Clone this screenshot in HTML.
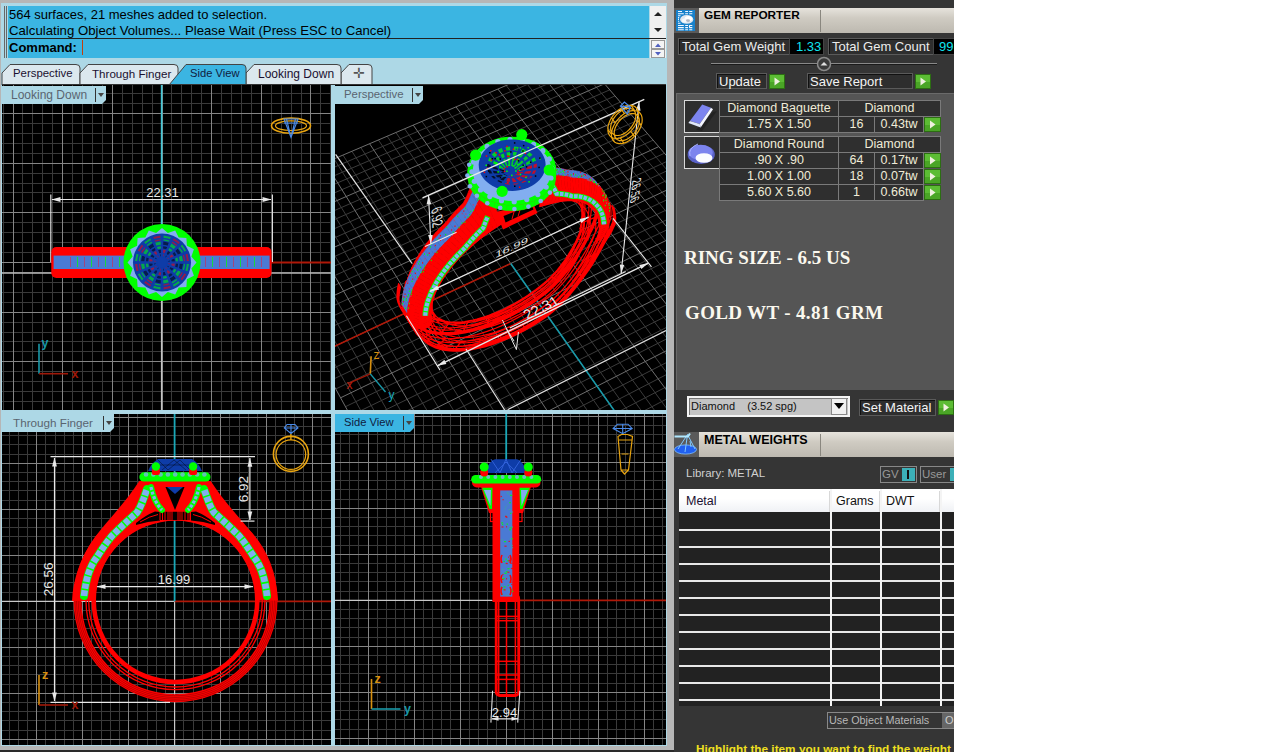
<!DOCTYPE html><html><head><meta charset="utf-8"><style>
*{margin:0;padding:0;box-sizing:border-box}
html,body{width:1274px;height:752px;overflow:hidden;background:#fff;font-family:"Liberation Sans", sans-serif}
.a{position:absolute}
.t{position:absolute;white-space:nowrap;line-height:1}
</style></head><body>
<div class="a" style="left:0;top:0;width:674px;height:752px;background:#b6b6b6"></div><div class="a" style="left:1px;top:3px;width:666px;height:743px;background:#add8e6"></div><div class="a" style="left:0;top:750px;width:674px;height:2px;background:#2a2a2a"></div><div class="a" style="left:4px;top:6px;width:1px;height:52px;background:#666"></div><div class="a" style="left:6px;top:6px;width:1px;height:52px;background:#666"></div><div class="a" style="left:8px;top:6px;width:641px;height:52px;background:#3bb5e2"></div><div class="a" style="left:8px;top:38px;width:658px;height:1px;background:#222"></div><div class="a" style="left:650px;top:6px;width:16px;height:32px;background:#f0f0f0"></div><div class="a" style="left:650px;top:39px;width:16px;height:19px;background:#f0f0f0"></div><div class="t" style="left:9px;top:8px;font-size:13px;color:#000">564 surfaces, 21 meshes added to selection.</div><div class="t" style="left:9px;top:24px;font-size:13.2px;color:#000">Calculating Object Volumes... Please Wait (Press ESC to Cancel)</div><div class="t" style="left:9px;top:41px;font-size:13px;font-weight:bold;color:#000">Command:</div><div class="a" style="left:82px;top:40px;width:1px;height:15px;background:#c04010"></div><svg class="a" style="left:650px;top:6px" width="16" height="52"><path d="M4 10L8 6L12 10Z" fill="#222"/><path d="M4 22L8 26L12 22Z" fill="#222"/><rect x="1.5" y="34.5" width="13" height="8" fill="#f4f4f4" stroke="#999"/><path d="M5 41L8 37.5L11 41Z" fill="#5060c0"/><rect x="1.5" y="43.5" width="13" height="8" fill="#f4f4f4" stroke="#999"/><path d="M5 46L8 49.5L11 46Z" fill="#5060c0"/></svg><svg class="a" style="left:1px;top:63px" width="81" height="23"><path d="M1 22V10L9 1.5H75Q79 1.5 79 5V22" fill="#dce8ee" stroke="#444" stroke-width="1"/></svg><svg class="a" style="left:79px;top:63px" width="101" height="23"><path d="M1 22V10L9 1.5H95Q99 1.5 99 5V22" fill="#dce8ee" stroke="#444" stroke-width="1"/></svg><svg class="a" style="left:340px;top:63px" width="34" height="23"><path d="M1 22V10L9 1.5H28Q32 1.5 32 5V22" fill="#dce8ee" stroke="#444" stroke-width="1"/></svg><svg class="a" style="left:245px;top:63px" width="98" height="23"><path d="M1 22V10L9 1.5H92Q96 1.5 96 5V22" fill="#dce8ee" stroke="#444" stroke-width="1"/></svg><svg class="a" style="left:168px;top:63px" width="80" height="23"><path d="M1 22L18 1.5H74Q78 1.5 78 5V22Z" fill="#3bb5e2" stroke="#444" stroke-width="1"/></svg><div class="t" style="left:13px;top:68px;font-size:11.4px;color:#1a1030">Perspective</div><div class="t" style="left:92px;top:68px;font-size:11.6px;color:#1a1030">Through Finger</div><div class="t" style="left:190px;top:68px;font-size:11.2px;color:#102040">Side View</div><div class="t" style="left:258px;top:68px;font-size:12px;color:#1a1030">Looking Down</div><div class="t" style="left:353px;top:66px;font-size:14px;color:#555">&#x271B;</div><div class="a" style="left:2px;top:84px;width:664px;height:1px;background:#333"></div><svg style="position:absolute;left:2px;top:85px" width="329" height="325" viewBox="0 0 329 325"><rect width="329" height="325" fill="#000"/><path d="M1.5 0V325M20.5 0V325M30.5 0V325M40.5 0V325M50.5 0V325M70.5 0V325M80.5 0V325M90.5 0V325M100.5 0V325M120.5 0V325M130.5 0V325M140.5 0V325M150.5 0V325M169.5 0V325M179.5 0V325M189.5 0V325M199.5 0V325M219.5 0V325M229.5 0V325M239.5 0V325M249.5 0V325M269.5 0V325M279.5 0V325M289.5 0V325M299.5 0V325M318.5 0V325M328.5 0V325M0 8.5H329M0 18.5H329M0 38.5H329M0 48.5H329M0 58.5H329M0 68.5H329M0 88.5H329M0 98.5H329M0 107.5H329M0 117.5H329M0 137.5H329M0 147.5H329M0 157.5H329M0 167.5H329M0 187.5H329M0 197.5H329M0 207.5H329M0 217.5H329M0 237.5H329M0 247.5H329M0 256.5H329M0 266.5H329M0 286.5H329M0 296.5H329M0 306.5H329M0 316.5H329" stroke="#3a3a3a" stroke-width="1" fill="none"/><path d="M11.5 0V325M60.5 0V325M110.5 0V325M160.5 0V325M209.5 0V325M259.5 0V325M308.5 0V325M0 28.5H329M0 78.5H329M0 127.5H329M0 177.5H329M0 227.5H329M0 276.5H329" stroke="#858585" stroke-width="1" fill="none"/><g transform="translate(-2 -85)"><path d="M2 262.5L52 262.5" stroke="#8a8a8a" stroke-width="1" fill="none"/><path d="M271 262.5L331 262.5" stroke="#b01808" stroke-width="1.8" fill="none"/><path d="M271 273L331 273" stroke="#b8b8b8" stroke-width="1.6" fill="none"/><path d="M2 273L52 273" stroke="#bdbdbd" stroke-width="1.6" fill="none"/><path d="M161.6 85L161.6 262.5" stroke="#40c8d8" stroke-width="1.6" fill="none"/><path d="M161.6 262.5L161.6 410" stroke="#c4c4c4" stroke-width="1.4" fill="none"/><path d="M50.8 194.6L50.8 262" stroke="#e0e0e0" stroke-width="1.2" fill="none"/><path d="M272.4 194.6L272.4 262" stroke="#e0e0e0" stroke-width="1.2" fill="none"/><path d="M52 199.5L271 199.5" stroke="#e8e8e8" stroke-width="1.2" fill="none"/><path d="M51.5 199.5L60.5 197.1L60.5 201.9Z" fill="#e8e8e8"/><path d="M271.5 199.5L262.5 201.9L262.5 197.1Z" fill="#e8e8e8"/><text x="162.5" y="196.5" font-family="Liberation Sans, sans-serif" font-size="13" fill="#e8e8e8" text-anchor="middle">22.31</text><rect x="51.3" y="247" width="220.2" height="31" rx="5" fill="#ff0000"/><rect x="53.6" y="255.6" width="216" height="13.4" fill="#4a7ad4"/><rect x="70" y="257" width="1" height="10" fill="#c03060" opacity="0.7"/><rect x="77" y="257" width="1" height="10" fill="#00ff00" opacity="0.7"/><rect x="84" y="257" width="1" height="10" fill="#c03060" opacity="0.7"/><rect x="91" y="257" width="1" height="10" fill="#00ff00" opacity="0.7"/><rect x="98" y="257" width="1" height="10" fill="#c03060" opacity="0.7"/><rect x="105" y="257" width="1" height="10" fill="#00ff00" opacity="0.7"/><rect x="112" y="257" width="1" height="10" fill="#c03060" opacity="0.7"/><rect x="119" y="257" width="1" height="10" fill="#00ff00" opacity="0.7"/><rect x="205" y="257" width="1" height="10" fill="#c03060" opacity="0.7"/><rect x="212" y="257" width="1" height="10" fill="#00ff00" opacity="0.7"/><rect x="219" y="257" width="1" height="10" fill="#c03060" opacity="0.7"/><rect x="226" y="257" width="1" height="10" fill="#00ff00" opacity="0.7"/><rect x="233" y="257" width="1" height="10" fill="#c03060" opacity="0.7"/><rect x="240" y="257" width="1" height="10" fill="#00ff00" opacity="0.7"/><rect x="247" y="257" width="1" height="10" fill="#c03060" opacity="0.7"/><rect x="254" y="257" width="1" height="10" fill="#00ff00" opacity="0.7"/><rect x="261" y="257" width="1" height="10" fill="#c03060" opacity="0.7"/><circle cx="162" cy="262.5" r="38.5" fill="#00ff00"/><path d="M196.5 262.5L191.4 268.4L193.9 275.7L186.9 279.2L186.4 286.9L178.7 287.4L175.2 294.4L167.9 291.9L162.0 297.0L156.1 291.9L148.8 294.4L145.3 287.4L137.6 286.9L137.1 279.2L130.1 275.7L132.6 268.4L127.5 262.5L132.6 256.6L130.1 249.3L137.1 245.8L137.6 238.1L145.3 237.6L148.8 230.6L156.1 233.1L162.0 228.0L167.9 233.1L175.2 230.6L178.7 237.6L186.4 238.1L186.9 245.8L193.9 249.3L191.4 256.6Z" fill="#82aef0"/><circle cx="196.5" cy="269.4" r="2.6" fill="#00ff00"/><circle cx="191.3" cy="282.1" r="2.6" fill="#00ff00"/><circle cx="181.6" cy="291.8" r="2.6" fill="#00ff00"/><circle cx="168.9" cy="297.0" r="2.6" fill="#00ff00"/><circle cx="155.1" cy="297.0" r="2.6" fill="#00ff00"/><circle cx="142.4" cy="291.8" r="2.6" fill="#00ff00"/><circle cx="132.7" cy="282.1" r="2.6" fill="#00ff00"/><circle cx="127.5" cy="269.4" r="2.6" fill="#00ff00"/><circle cx="127.5" cy="255.6" r="2.6" fill="#00ff00"/><circle cx="132.7" cy="242.9" r="2.6" fill="#00ff00"/><circle cx="142.4" cy="233.2" r="2.6" fill="#00ff00"/><circle cx="155.1" cy="228.0" r="2.6" fill="#00ff00"/><circle cx="168.9" cy="228.0" r="2.6" fill="#00ff00"/><circle cx="181.6" cy="233.2" r="2.6" fill="#00ff00"/><circle cx="191.3" cy="242.9" r="2.6" fill="#00ff00"/><circle cx="196.5" cy="255.6" r="2.6" fill="#00ff00"/><circle cx="162" cy="262.5" r="29" fill="#0e3ca8"/><path d="M168.0 262.9L175.0 263.3L174.3 266.7L167.7 264.5Z" fill="#ff0000" opacity="0.55"/><path d="M176.0 263.3L183.0 263.8L181.8 269.4L175.2 267.1Z" fill="#000" opacity="0.55"/><path d="M184.0 263.8L189.0 264.1L187.5 271.3L182.8 269.7Z" fill="#00ff00" opacity="0.55"/><path d="M167.4 265.1L173.7 268.2L171.7 271.1L166.5 266.5Z" fill="#000" opacity="0.55"/><path d="M174.6 268.6L180.9 271.7L177.7 276.4L172.5 271.8Z" fill="#00ff00" opacity="0.55"/><path d="M181.8 272.1L186.3 274.3L182.2 280.4L178.5 277.1Z" fill="#ff0000" opacity="0.55"/><path d="M166.0 267.0L170.6 272.2L167.7 274.2L164.6 267.9Z" fill="#ff0000" opacity="0.55"/><path d="M171.3 273.0L175.9 278.2L171.2 281.4L168.1 275.1Z" fill="#000" opacity="0.55"/><path d="M176.6 279.0L179.9 282.7L173.8 286.8L171.6 282.3Z" fill="#00ff00" opacity="0.55"/><path d="M164.0 268.2L166.2 274.8L162.8 275.5L162.4 268.5Z" fill="#000" opacity="0.55"/><path d="M166.6 275.7L168.9 282.3L163.3 283.5L162.8 276.5Z" fill="#00ff00" opacity="0.55"/><path d="M169.2 283.3L170.8 288.0L163.6 289.5L163.3 284.5Z" fill="#ff0000" opacity="0.55"/><path d="M161.6 268.5L161.2 275.5L157.8 274.8L160.0 268.2Z" fill="#ff0000" opacity="0.55"/><path d="M161.2 276.5L160.7 283.5L155.1 282.3L157.4 275.7Z" fill="#000" opacity="0.55"/><path d="M160.7 284.5L160.4 289.5L153.2 288.0L154.8 283.3Z" fill="#00ff00" opacity="0.55"/><path d="M159.4 267.9L156.3 274.2L153.4 272.2L158.0 267.0Z" fill="#000" opacity="0.55"/><path d="M155.9 275.1L152.8 281.4L148.1 278.2L152.7 273.0Z" fill="#00ff00" opacity="0.55"/><path d="M152.4 282.3L150.2 286.8L144.1 282.7L147.4 279.0Z" fill="#ff0000" opacity="0.55"/><path d="M157.5 266.5L152.3 271.1L150.3 268.2L156.6 265.1Z" fill="#ff0000" opacity="0.55"/><path d="M151.5 271.8L146.3 276.4L143.1 271.7L149.4 268.6Z" fill="#000" opacity="0.55"/><path d="M145.5 277.1L141.8 280.4L137.7 274.3L142.2 272.1Z" fill="#00ff00" opacity="0.55"/><path d="M156.3 264.5L149.7 266.7L149.0 263.3L156.0 262.9Z" fill="#000" opacity="0.55"/><path d="M148.8 267.1L142.2 269.4L141.0 263.8L148.0 263.3Z" fill="#00ff00" opacity="0.55"/><path d="M141.2 269.7L136.5 271.3L135.0 264.1L140.0 263.8Z" fill="#ff0000" opacity="0.55"/><path d="M156.0 262.1L149.0 261.7L149.7 258.3L156.3 260.5Z" fill="#ff0000" opacity="0.55"/><path d="M148.0 261.7L141.0 261.2L142.2 255.6L148.8 257.9Z" fill="#000" opacity="0.55"/><path d="M140.0 261.2L135.0 260.9L136.5 253.7L141.2 255.3Z" fill="#00ff00" opacity="0.55"/><path d="M156.6 259.9L150.3 256.8L152.3 253.9L157.5 258.5Z" fill="#000" opacity="0.55"/><path d="M149.4 256.4L143.1 253.3L146.3 248.6L151.5 253.2Z" fill="#00ff00" opacity="0.55"/><path d="M142.2 252.9L137.7 250.7L141.8 244.6L145.5 247.9Z" fill="#ff0000" opacity="0.55"/><path d="M158.0 258.0L153.4 252.8L156.3 250.8L159.4 257.1Z" fill="#ff0000" opacity="0.55"/><path d="M152.7 252.0L148.1 246.8L152.8 243.6L155.9 249.9Z" fill="#000" opacity="0.55"/><path d="M147.4 246.0L144.1 242.3L150.2 238.2L152.4 242.7Z" fill="#00ff00" opacity="0.55"/><path d="M160.0 256.8L157.8 250.2L161.2 249.5L161.6 256.5Z" fill="#000" opacity="0.55"/><path d="M157.4 249.3L155.1 242.7L160.7 241.5L161.2 248.5Z" fill="#00ff00" opacity="0.55"/><path d="M154.8 241.7L153.2 237.0L160.4 235.5L160.7 240.5Z" fill="#ff0000" opacity="0.55"/><path d="M162.4 256.5L162.8 249.5L166.2 250.2L164.0 256.8Z" fill="#ff0000" opacity="0.55"/><path d="M162.8 248.5L163.3 241.5L168.9 242.7L166.6 249.3Z" fill="#000" opacity="0.55"/><path d="M163.3 240.5L163.6 235.5L170.8 237.0L169.2 241.7Z" fill="#00ff00" opacity="0.55"/><path d="M164.6 257.1L167.7 250.8L170.6 252.8L166.0 258.0Z" fill="#000" opacity="0.55"/><path d="M168.1 249.9L171.2 243.6L175.9 246.8L171.3 252.0Z" fill="#00ff00" opacity="0.55"/><path d="M171.6 242.7L173.8 238.2L179.9 242.3L176.6 246.0Z" fill="#ff0000" opacity="0.55"/><path d="M166.5 258.5L171.7 253.9L173.7 256.8L167.4 259.9Z" fill="#ff0000" opacity="0.55"/><path d="M172.5 253.2L177.7 248.6L180.9 253.3L174.6 256.4Z" fill="#000" opacity="0.55"/><path d="M178.5 247.9L182.2 244.6L186.3 250.7L181.8 252.9Z" fill="#00ff00" opacity="0.55"/><path d="M167.7 260.5L174.3 258.3L175.0 261.7L168.0 262.1Z" fill="#000" opacity="0.55"/><path d="M175.2 257.9L181.8 255.6L183.0 261.2L176.0 261.7Z" fill="#00ff00" opacity="0.55"/><path d="M182.8 255.3L187.5 253.7L189.0 260.9L184.0 261.2Z" fill="#ff0000" opacity="0.55"/><path d="M190.0 262.5L134.0 262.5" stroke="#0e3ca8" stroke-width="2.2"/><path d="M187.9 273.2L136.1 251.8" stroke="#0e3ca8" stroke-width="2.2"/><path d="M181.8 282.3L142.2 242.7" stroke="#0e3ca8" stroke-width="2.2"/><path d="M172.7 288.4L151.3 236.6" stroke="#0e3ca8" stroke-width="2.2"/><path d="M162.0 290.5L162.0 234.5" stroke="#0e3ca8" stroke-width="2.2"/><path d="M151.3 288.4L172.7 236.6" stroke="#0e3ca8" stroke-width="2.2"/><path d="M142.2 282.3L181.8 242.7" stroke="#0e3ca8" stroke-width="2.2"/><path d="M136.1 273.2L187.9 251.8" stroke="#0e3ca8" stroke-width="2.2"/><circle cx="162" cy="262.5" r="9" fill="none" stroke="#0e3ca8" stroke-width="1.6"/><circle cx="162" cy="262.5" r="17" fill="none" stroke="#0e3ca8" stroke-width="1.6"/><circle cx="162" cy="262.5" r="24" fill="none" stroke="#0e3ca8" stroke-width="1.6"/><circle cx="162" cy="262.5" r="5" fill="#0e3ca8"/><ellipse cx="291" cy="125.7" rx="19.5" ry="7.6" fill="none" stroke="#e8a410" stroke-width="1.6"/><ellipse cx="291" cy="125.7" rx="15.5" ry="4.8" fill="none" stroke="#e8a410" stroke-width="1.2"/><path d="M284 119H298L291 137.5Z M286.5 119L291 137.5L295.5 119M284 123H298" fill="none" stroke="#4a8ae8" stroke-width="1.1"/><path d="M39 373.7V343.7" stroke="#1898a8" stroke-width="1.6"/><path d="M39 373.7H68" stroke="#a01808" stroke-width="1.6"/><text x="45" y="347.2" font-family="Liberation Sans, sans-serif" font-size="12.5" font-weight="bold" fill="#1898a8" text-anchor="middle">y</text><text x="75" y="377.7" font-family="Liberation Sans, sans-serif" font-size="12.5" font-weight="bold" fill="#a01808" text-anchor="middle">x</text></g></svg><svg style="position:absolute;left:335px;top:85px" width="331" height="325" viewBox="0 0 331 325"><rect width="331" height="325" fill="#000"/><path d="M236.19 -27.22L474.21 251.43M249.16 -24.84L-98.16 123.92M228.17 -23.81L465.13 256.21M254.19 -19.01L-94.29 130.95M220.13 -20.38L456.01 261.02M259.26 -13.12L-90.40 138.05M212.05 -16.93L446.84 265.85M264.38 -7.18L-86.46 145.21M195.79 -10.00L428.38 275.58M274.75 4.84L-78.48 159.74M187.62 -6.52L419.08 280.48M280.00 10.94L-74.43 167.11M179.41 -3.02L409.73 285.40M285.30 17.08L-70.35 174.55M171.17 0.50L400.34 290.35M290.64 23.28L-66.22 182.06M154.58 7.57L381.42 300.32M301.48 35.84L-57.85 197.29M146.24 11.12L371.89 305.34M306.96 42.21L-53.61 205.02M137.86 14.69L362.32 310.38M312.50 48.63L-49.32 212.83M129.45 18.28L352.69 315.45M318.09 55.11L-44.99 220.71M112.52 25.50L333.30 325.67M329.41 68.24L-36.20 236.71M104.01 29.13L323.53 330.81M335.15 74.90L-31.75 244.82M95.46 32.77L313.72 335.99M340.94 81.62L-27.24 253.02M86.87 36.43L303.85 341.18M346.79 88.40L-22.69 261.30M69.59 43.80L283.97 351.66M358.64 102.15L-13.46 278.12M60.90 47.50L273.95 356.94M364.65 109.12L-8.77 286.65M52.17 51.23L263.89 362.24M370.71 116.15L-4.03 295.28M43.41 54.96L253.77 367.57M376.84 123.25L0.75 303.99M25.76 62.48L233.38 378.31M389.25 137.65L10.47 321.69M16.89 66.27L223.11 383.72M395.55 144.96L15.41 330.67M7.98 70.07L212.78 389.16M401.91 152.33L20.40 339.75M-0.98 73.88L202.40 394.63M408.33 159.78L25.44 348.93M-18.99 81.57L181.49 405.65M421.36 174.89L35.68 367.58M-28.06 85.43L170.95 411.20M427.96 182.55L40.89 377.06M-37.16 89.31L160.35 416.79M434.64 190.29L46.15 386.63M-46.30 93.21L149.70 422.40M441.38 198.11L51.46 396.31M-64.70 101.05L128.24 433.71M455.05 213.97L62.27 416.00M-73.96 105.00L117.42 439.41M462.00 222.03L67.77 426.00M-83.26 108.97L106.54 445.14M469.01 230.16L73.32 436.11M-92.60 112.95L95.61 450.89M476.09 238.37L78.94 446.34" stroke="#3c3c3c" stroke-width="1" fill="none"/><path d="M244.17 -30.63L483.24 246.67M244.17 -30.63L-101.98 116.95M203.94 -13.48L437.63 270.70M269.54 -1.20L-82.49 152.44M162.89 4.02L390.91 295.32M296.04 29.53L-62.06 189.64M121.00 21.88L343.02 320.55M323.72 61.65L-40.62 228.67M78.25 40.11L293.93 346.41M352.69 95.24L-18.10 269.67M34.60 58.72L243.60 372.93M383.02 130.42L5.59 312.79M-9.96 77.72L191.97 400.13M414.81 167.30L30.53 358.21M-55.48 97.12L139.00 428.04M448.18 206.00L56.84 406.10M-101.98 116.95L84.62 456.68M483.24 246.67L84.62 456.68" stroke="#6e6e6e" stroke-width="1" fill="none"/><path d="M175.70 178.50L-18.10 269.67" stroke="#b01808" stroke-width="1.6"/><path d="M175.70 178.50L293.93 346.41" stroke="#1898a8" stroke-width="1.6"/><g transform="translate(-335 -85)"><path d="M596.1 185.4L596.9 188.5L597.5 191.8L597.7 195.2L597.7 198.8L597.4 202.7L596.8 207.2L595.9 211.7L594.8 216.3L593.5 220.9L591.9 225.4L589.8 229.6L587.8 233.7L585.8 237.8L583.7 242.0L581.3 246.2L578.9 250.5L576.2 254.8L573.4 259.0L570.5 263.3L567.4 267.5L564.1 271.6L560.7 275.8L557.0 279.8L553.2 283.7L549.1 287.4L544.8 291.0L540.4 294.5L535.8 297.8L531.2 301.0L526.4 304.1L521.6 307.1L516.8 310.0L511.9 312.7L507.0 315.2L502.1 317.7L497.2 319.9L492.2 322.0L487.3 323.9L482.5 325.6L477.6 327.1L472.8 328.5L468.1 329.7L463.5 330.6L458.9 331.4L454.4 332.0L450.1 332.3L445.8 332.5L441.7 332.4L437.8 332.1L434.0 331.7L430.4 331.0L426.9 330.1L423.7 328.9L420.6 327.6L417.8 326.1L415.1 324.3L412.7 322.4L410.6 320.2L408.1 318.2L405.8 315.8L403.5 312.8L401.4 309.6L399.6 306.2L398.0 302.5L397.1 298.8L397.0 295.1L397.3 291.3L397.8 287.3L398.7 283.2M596.9 186.3L597.7 189.5L598.2 192.7L598.5 196.2L598.5 199.7L598.1 203.6L597.5 208.0L596.6 212.5L595.4 217.0L594.1 221.6L592.4 226.1L590.3 230.3L588.3 234.4L586.3 238.5L584.2 242.7L581.8 246.9L579.3 251.2L576.7 255.4L573.9 259.7L570.9 263.9L567.8 268.2L564.6 272.3L561.1 276.4L557.5 280.5L553.7 284.4L549.6 288.1L545.4 291.7L540.9 295.2L536.3 298.5L531.7 301.8L526.9 304.9L522.2 307.9L517.3 310.7L512.4 313.4L507.5 316.0L502.6 318.4L497.7 320.6L492.7 322.7L487.8 324.6L483.0 326.4L478.1 327.9L473.3 329.3L468.6 330.4L463.9 331.4L459.4 332.2L454.9 332.7L450.6 333.1L446.3 333.2L442.2 333.2L438.3 332.9L434.5 332.4L430.9 331.7L427.4 330.8L424.2 329.7L421.1 328.4L418.3 326.8L415.6 325.1L413.2 323.1L411.1 321.0L408.6 319.0L406.3 316.6L404.0 313.7L401.9 310.5L400.1 307.1L398.6 303.5L397.7 299.8L397.7 296.1L397.9 292.3L398.5 288.3L399.4 284.2M597.6 187.2L598.4 190.4L598.9 193.7L599.2 197.1L599.2 200.6L598.9 204.5L598.1 208.9L597.2 213.3L596.0 217.8L594.6 222.3L592.9 226.8L590.8 230.9L588.8 235.1L586.8 239.2L584.7 243.4L582.3 247.6L579.8 251.8L577.2 256.1L574.4 260.4L571.4 264.6L568.3 268.8L565.0 273.0L561.6 277.1L558.0 281.2L554.2 285.1L550.1 288.8L545.9 292.5L541.4 295.9L536.8 299.3L532.2 302.5L527.5 305.6L522.7 308.6L517.8 311.5L512.9 314.2L508.0 316.7L503.1 319.1L498.2 321.4L493.2 323.5L488.3 325.4L483.5 327.1L478.6 328.6L473.8 330.0L469.1 331.2L464.4 332.1L459.9 332.9L455.4 333.5L451.1 333.9L446.8 334.0L442.7 334.0L438.8 333.7L435.0 333.2L431.3 332.5L427.9 331.6L424.6 330.5L421.6 329.2L418.7 327.6L416.1 325.9L413.7 323.9L411.6 321.8L409.1 319.8L406.8 317.4L404.5 314.5L402.5 311.4L400.7 308.1L399.2 304.5L398.3 300.9L398.3 297.2L398.6 293.3L399.1 289.3L400.0 285.2M598.3 188.2L599.1 191.3L599.7 194.6L599.9 198.0L599.9 201.5L599.6 205.4L598.8 209.7L597.8 214.1L596.6 218.6L595.2 223.1L593.4 227.5L591.3 231.6L589.3 235.8L587.3 239.9L585.1 244.1L582.8 248.3L580.3 252.5L577.6 256.8L574.8 261.0L571.9 265.3L568.8 269.5L565.5 273.7L562.1 277.8L558.5 281.8L554.7 285.8L550.6 289.6L546.4 293.2L541.9 296.6L537.3 300.0L532.7 303.2L528.0 306.3L523.2 309.3L518.3 312.2L513.4 314.9L508.5 317.5L503.6 319.9L498.7 322.1L493.7 324.2L488.8 326.1L483.9 327.9L479.1 329.4L474.3 330.8L469.6 331.9L464.9 332.9L460.4 333.7L455.9 334.3L451.5 334.6L447.3 334.8L443.2 334.7L439.3 334.5L435.5 334.0L431.8 333.3L428.4 332.4L425.1 331.3L422.1 329.9L419.2 328.4L416.6 326.7L414.2 324.7L412.0 322.6L409.6 320.6L407.3 318.2L405.0 315.4L403.0 312.3L401.3 309.0L399.9 305.5L399.0 301.9L398.9 298.2L399.2 294.3L399.8 290.4L400.6 286.3M602.0 192.8L602.8 195.9L603.3 199.2L603.6 202.6L603.6 206.2L603.2 209.9L602.2 214.1L601.1 218.3L599.6 222.5L598.0 226.7L596.1 231.0L593.9 235.1L591.9 239.2L589.9 243.3L587.6 247.5L585.2 251.7L582.7 255.9L580.0 260.2L577.2 264.4L574.2 268.7L571.1 272.9L567.8 277.1L564.4 281.3L560.8 285.3L557.1 289.3L553.1 293.1L548.9 296.8L544.5 300.3L539.9 303.7L535.3 306.9L530.5 310.0L525.7 313.0L520.9 315.9L516.0 318.6L511.1 321.2L506.1 323.6L501.2 325.9L496.2 328.0L491.3 329.9L486.4 331.6L481.6 333.2L476.8 334.6L472.0 335.7L467.4 336.7L462.8 337.5L458.3 338.1L454.0 338.5L449.8 338.6L445.7 338.6L441.7 338.3L437.9 337.9L434.3 337.2L430.8 336.3L427.6 335.2L424.5 333.9L421.7 332.3L419.0 330.6L416.6 328.7L414.5 326.5L412.0 324.5L409.8 322.3L407.7 319.6L405.8 316.8L404.3 313.8L403.0 310.5L402.2 307.1L402.1 303.4L402.4 299.5L403.0 295.6L403.9 291.4M605.8 197.5L606.5 200.6L607.1 203.9L607.3 207.3L607.3 210.8L606.8 214.5L605.7 218.4L604.3 222.4L602.7 226.4L600.9 230.4L598.8 234.5L596.6 238.7L594.5 242.7L592.4 246.8L590.2 251.0L587.7 255.2L585.1 259.4L582.4 263.6L579.6 267.9L576.6 272.1L573.4 276.3L570.2 280.6L566.8 284.7L563.2 288.8L559.5 292.8L555.6 296.7L551.4 300.4L547.1 304.0L542.5 307.3L537.8 310.6L533.1 313.7L528.3 316.7L523.4 319.6L518.5 322.3L513.6 324.9L508.7 327.3L503.7 329.6L498.8 331.7L493.8 333.7L488.9 335.4L484.1 337.0L479.3 338.4L474.5 339.6L469.9 340.5L465.3 341.3L460.8 341.9L456.5 342.3L452.2 342.5L448.1 342.5L444.1 342.2L440.4 341.8L436.7 341.1L433.3 340.2L430.0 339.1L427.0 337.8L424.1 336.3L421.5 334.5L419.1 332.6L416.9 330.5L414.5 328.5L412.3 326.3L410.3 324.0L408.6 321.4L407.2 318.6L406.1 315.6L405.4 312.3L405.4 308.6L405.7 304.7L406.3 300.8L407.1 296.7M609.5 202.2L610.3 205.3L610.8 208.6L611.0 212.0L611.0 215.5L610.5 219.1L609.2 222.8L607.6 226.6L605.8 230.4L603.8 234.2L601.6 238.1L599.3 242.2L597.2 246.3L595.1 250.4L592.7 254.5L590.3 258.6L587.6 262.8L584.9 267.1L582.0 271.3L578.9 275.6L575.8 279.8L572.5 284.0L569.1 288.2L565.6 292.3L561.9 296.3L558.0 300.2L553.9 304.0L549.6 307.6L545.1 311.0L540.4 314.3L535.7 317.4L530.9 320.5L526.0 323.3L521.1 326.1L516.1 328.7L511.2 331.1L506.2 333.4L501.3 335.5L496.3 337.4L491.4 339.2L486.6 340.8L481.8 342.2L477.0 343.4L472.4 344.4L467.8 345.2L463.3 345.8L458.9 346.2L454.7 346.4L450.6 346.4L446.6 346.1L442.8 345.7L439.2 345.0L435.7 344.1L432.5 343.1L429.4 341.8L426.6 340.2L423.9 338.5L421.6 336.6L419.4 334.5L417.0 332.5L414.8 330.4L413.0 328.3L411.5 326.0L410.2 323.4L409.2 320.7L408.6 317.5L408.6 313.8L408.9 310.0L409.5 306.0L410.4 301.9M611.8 205.0L612.6 208.1L613.1 211.4L613.3 214.8L613.3 218.3L612.7 221.9L611.2 225.5L609.6 229.1L607.7 232.8L605.5 236.5L603.3 240.3L601.0 244.4L598.9 248.4L596.7 252.5L594.3 256.6L591.8 260.8L589.1 264.9L586.3 269.2L583.4 273.4L580.4 277.6L577.2 281.9L573.9 286.1L570.5 290.2L567.0 294.4L563.3 298.4L559.4 302.3L555.4 306.1L551.1 309.8L546.7 313.2L542.0 316.5L537.2 319.7L532.4 322.7L527.5 325.6L522.6 328.3L517.7 330.9L512.7 333.4L507.8 335.7L502.8 337.8L497.9 339.7L493.0 341.5L488.1 343.1L483.3 344.5L478.5 345.7L473.8 346.7L469.3 347.5L464.8 348.1L460.4 348.5L456.2 348.7L452.1 348.7L448.1 348.5L444.3 348.0L440.7 347.4L437.2 346.5L434.0 345.4L430.9 344.1L428.1 342.6L425.4 340.9L423.0 339.0L420.9 336.9L418.4 334.9L416.3 332.9L414.6 330.9L413.2 328.7L412.0 326.3L411.1 323.7L410.6 320.7L410.6 317.0L410.9 313.2L411.5 309.2L412.4 305.1M612.5 206.0L613.3 209.1L613.8 212.3L614.0 215.7L614.0 219.3L613.4 222.8L611.9 226.4L610.2 229.9L608.3 233.6L606.1 237.2L603.9 241.0L601.6 245.1L599.4 249.2L597.2 253.2L594.8 257.3L592.3 261.5L589.7 265.6L586.8 269.9L583.9 274.1L580.9 278.3L577.7 282.6L574.4 286.8L571.0 290.9L567.4 295.1L563.8 299.1L559.9 303.0L555.9 306.8L551.6 310.5L547.2 314.0L542.5 317.3L537.8 320.4L532.9 323.4L528.1 326.3L523.1 329.1L518.2 331.7L513.2 334.1L508.3 336.4L503.3 338.5L498.4 340.5L493.5 342.3L488.6 343.9L483.8 345.3L479.0 346.5L474.3 347.5L469.8 348.3L465.3 348.9L460.9 349.3L456.7 349.5L452.6 349.5L448.6 349.3L444.8 348.8L441.2 348.2L437.7 347.3L434.4 346.2L431.4 344.9L428.5 343.4L425.9 341.7L423.5 339.8L421.4 337.7L418.9 335.7L416.8 333.7L415.2 331.8L413.7 329.6L412.6 327.3L411.7 324.7L411.2 321.7L411.2 318.1L411.6 314.2L412.2 310.3L413.1 306.1M613.3 206.9L614.1 210.0L614.6 213.3L614.8 216.7L614.8 220.2L614.1 223.8L612.6 227.3L610.9 230.8L608.9 234.4L606.7 238.0L604.4 241.7L602.1 245.9L600.0 249.9L597.8 253.9L595.4 258.0L592.8 262.2L590.2 266.4L587.3 270.6L584.4 274.8L581.3 279.0L578.2 283.2L574.9 287.5L571.5 291.6L567.9 295.8L564.2 299.8L560.4 303.7L556.4 307.6L552.1 311.2L547.7 314.7L543.0 318.0L538.3 321.2L533.5 324.2L528.6 327.1L523.7 329.8L518.7 332.4L513.7 334.9L508.8 337.2L503.8 339.3L498.9 341.3L494.0 343.0L489.1 344.6L484.3 346.0L479.5 347.2L474.8 348.3L470.3 349.1L465.8 349.7L461.4 350.1L457.2 350.3L453.1 350.3L449.1 350.1L445.3 349.6L441.7 349.0L438.2 348.1L434.9 347.0L431.9 345.7L429.0 344.2L426.4 342.5L424.0 340.6L421.9 338.5L419.4 336.5L417.3 334.5L415.7 332.6L414.3 330.6L413.2 328.3L412.4 325.8L411.9 322.8L411.9 319.1L412.2 315.3L412.8 311.3L413.7 307.2M614.1 207.9L614.8 211.0L615.3 214.2L615.6 217.6L615.5 221.2L614.9 224.7L613.3 228.1L611.6 231.6L609.6 235.2L607.3 238.7L605.0 242.5L602.7 246.6L600.5 250.6L598.3 254.7L595.9 258.8L593.4 262.9L590.7 267.1L587.8 271.3L584.9 275.5L581.8 279.7L578.7 283.9L575.4 288.2L571.9 292.3L568.4 296.5L564.7 300.5L560.9 304.5L556.8 308.3L552.6 312.0L548.2 315.5L543.6 318.8L538.8 321.9L534.0 324.9L529.1 327.8L524.2 330.6L519.2 333.2L514.3 335.6L509.3 337.9L504.3 340.1L499.4 342.0L494.5 343.8L489.6 345.4L484.8 346.8L480.0 348.0L475.3 349.0L470.8 349.8L466.3 350.5L461.9 350.9L457.7 351.1L453.5 351.1L449.6 350.8L445.8 350.4L442.1 349.8L438.7 348.9L435.4 347.8L432.4 346.5L429.5 345.0L426.9 343.3L424.5 341.4L422.4 339.3L419.9 337.3L417.8 335.3L416.2 333.5L414.9 331.5L413.8 329.2L413.0 326.8L412.6 323.9L412.6 320.2L412.9 316.3L413.5 312.4L414.4 308.3M581.6 196.1L582.2 198.7L582.7 201.4L582.9 204.2L582.9 207.2L582.9 210.4L582.9 214.1L582.7 217.8L582.3 221.7L581.7 225.6L580.8 229.4L579.4 233.0L577.9 236.6L576.3 240.2L574.5 243.9L572.5 247.6L570.3 251.3L568.0 255.1L565.6 258.8L563.0 262.5L560.2 266.2L557.3 269.8L554.2 273.3L550.9 276.7L547.4 280.1L543.7 283.3L539.8 286.4L535.9 289.4L531.9 292.3L527.8 295.2L523.7 297.9L519.5 300.5L515.3 303.0L511.0 305.3L506.7 307.6L502.4 309.7L498.1 311.6L493.8 313.4L489.5 315.1L485.2 316.6L481.0 317.9L476.8 319.1L472.7 320.1L468.6 320.9L464.6 321.6L460.7 322.0L457.0 322.3L453.3 322.4L449.7 322.4L446.3 322.1L443.0 321.7L439.9 321.0L436.9 320.2L434.1 319.2L431.4 318.0L429.0 316.7L426.7 315.1L424.7 313.4L422.8 311.5L421.2 309.4L419.7 307.0L418.1 304.0L416.8 300.9L415.8 297.7L414.9 294.2L414.5 290.9L414.5 287.8L414.7 284.6L415.2 281.2L416.0 277.8M581.0 199.4L581.6 201.9L582.0 204.5L582.3 207.3L582.3 210.2L582.2 213.3L582.2 216.8L581.9 220.4L581.5 224.0L580.8 227.8L579.9 231.5L578.6 234.9L577.2 238.4L575.6 242.0L573.8 245.6L571.9 249.2L569.8 252.9L567.5 256.5L565.1 260.1L562.6 263.7L559.9 267.3L557.0 270.8L554.0 274.3L550.7 277.6L547.3 280.9L543.7 284.0L540.0 287.0L536.2 290.0L532.3 292.8L528.3 295.6L524.2 298.2L520.1 300.8L516.0 303.2L511.8 305.5L507.6 307.7L503.4 309.8L499.2 311.7L495.0 313.4L490.8 315.0L486.7 316.5L482.6 317.8L478.5 318.9L474.5 319.9L470.5 320.7L466.6 321.4L462.8 321.8L459.2 322.1L455.6 322.2L452.1 322.1L448.8 321.9L445.6 321.5L442.5 320.8L439.6 320.0L436.9 319.1L434.3 317.9L431.9 316.6L429.8 315.1L427.8 313.4L426.0 311.5L424.4 309.5L422.9 307.2L421.5 304.4L420.3 301.4L419.3 298.3L418.5 295.1L418.1 291.9L418.1 288.8L418.4 285.7L418.9 282.4L419.6 279.1M580.9 206.4L581.5 208.8L582.0 211.3L582.2 213.9L582.2 216.7L582.1 219.6L581.9 222.7L581.6 226.0L581.0 229.3L580.3 232.7L579.3 236.1L578.1 239.4L576.7 242.7L575.1 246.1L573.4 249.6L571.6 253.1L569.6 256.5L567.4 260.0L565.1 263.5L562.7 266.9L560.1 270.4L557.4 273.7L554.4 277.0L551.4 280.2L548.1 283.4L544.7 286.4L541.1 289.3L537.4 292.1L533.7 294.9L529.9 297.5L526.0 300.1L522.1 302.5L518.1 304.8L514.1 307.0L510.1 309.1L506.1 311.1L502.0 312.9L498.0 314.6L494.0 316.2L490.0 317.6L486.1 318.8L482.2 319.9L478.3 320.8L474.5 321.6L470.8 322.2L467.2 322.7L463.7 322.9L460.3 323.0L457.0 323.0L453.8 322.7L450.7 322.3L447.8 321.7L445.1 321.0L442.5 320.0L440.0 318.9L437.8 317.7L435.7 316.2L433.8 314.6L432.1 312.8L430.6 310.9L429.3 308.8L428.0 306.3L427.0 303.7L426.2 300.9L425.6 298.1L425.4 295.1L425.4 292.3L425.7 289.3L426.1 286.2L426.9 283.0M583.1 211.8L583.7 214.1L584.1 216.6L584.3 219.1L584.4 221.8L584.2 224.6L583.9 227.5L583.4 230.5L582.6 233.6L581.8 236.7L580.7 239.9L579.5 243.2L578.1 246.5L576.6 249.8L574.9 253.2L573.1 256.6L571.1 260.1L569.0 263.5L566.7 266.9L564.3 270.3L561.8 273.7L559.1 277.0L556.2 280.3L553.2 283.5L550.1 286.6L546.7 289.6L543.2 292.5L539.6 295.3L535.9 298.0L532.1 300.6L528.3 303.1L524.4 305.5L520.5 307.8L516.6 310.0L512.6 312.1L508.7 314.0L504.7 315.8L500.7 317.5L496.8 319.1L492.8 320.4L488.9 321.7L485.1 322.8L481.3 323.7L477.6 324.5L473.9 325.1L470.4 325.5L466.9 325.8L463.5 325.9L460.3 325.8L457.1 325.6L454.1 325.2L451.3 324.6L448.6 323.9L446.0 323.0L443.6 321.9L441.4 320.6L439.3 319.2L437.5 317.6L435.8 315.9L434.3 314.0L433.1 312.0L432.0 309.8L431.2 307.5L430.5 305.0L430.1 302.4L430.0 299.7L430.0 296.8L430.3 293.9L430.8 290.8L431.5 287.7M587.6 215.5L588.2 217.8L588.6 220.3L588.8 223.0L588.8 225.7L588.6 228.5L588.1 231.2L587.4 234.0L586.5 236.9L585.4 239.9L584.2 243.0L583.0 246.3L581.5 249.6L580.0 253.0L578.2 256.5L576.4 259.9L574.3 263.4L572.2 266.9L569.9 270.4L567.5 273.9L564.9 277.3L562.2 280.7L559.3 284.1L556.3 287.4L553.2 290.6L549.8 293.7L546.3 296.7L542.7 299.5L538.9 302.3L535.1 304.9L531.2 307.5L527.2 309.9L523.3 312.3L519.3 314.5L515.2 316.6L511.2 318.6L507.1 320.5L503.1 322.2L499.1 323.7L495.1 325.1L491.1 326.4L487.2 327.5L483.4 328.5L479.6 329.3L475.9 329.9L472.2 330.4L468.7 330.6L465.3 330.8L462.0 330.7L458.8 330.5L455.7 330.1L452.8 329.5L450.1 328.8L447.5 327.9L445.0 326.8L442.8 325.5L440.7 324.1L438.8 322.5L437.1 320.7L435.6 318.8L434.4 316.8L433.4 314.8L432.7 312.7L432.3 310.4L432.0 308.1L431.9 305.5L432.0 302.6L432.3 299.6L432.8 296.5L433.5 293.3M594.5 217.6L595.2 220.1L595.6 222.7L595.8 225.5L595.8 228.4L595.5 231.2L594.8 233.8L593.8 236.5L592.7 239.3L591.4 242.2L589.9 245.3L588.6 248.7L587.0 252.2L585.3 255.8L583.5 259.3L581.5 263.0L579.3 266.6L577.0 270.2L574.6 273.9L572.1 277.5L569.4 281.2L566.6 284.8L563.6 288.3L560.6 291.8L557.3 295.2L553.9 298.5L550.4 301.7L546.6 304.7L542.7 307.6L538.7 310.4L534.6 313.1L530.5 315.7L526.3 318.1L522.1 320.5L517.9 322.7L513.7 324.8L509.4 326.7L505.2 328.5L501.0 330.2L496.8 331.7L492.6 333.0L488.5 334.2L484.5 335.2L480.5 336.0L476.6 336.7L472.8 337.2L469.1 337.5L465.5 337.7L462.1 337.6L458.7 337.4L455.5 337.0L452.5 336.4L449.6 335.7L446.8 334.7L444.3 333.6L441.9 332.3L439.7 330.8L437.7 329.1L435.9 327.3L434.4 325.3L433.1 323.3L432.3 321.5L431.7 319.5L431.3 317.4L431.2 315.1L431.2 312.5L431.2 309.5L431.5 306.4L432.1 303.1L432.9 299.8M598.1 218.1L598.8 220.6L599.2 223.4L599.5 226.2L599.5 229.1L599.1 232.0L598.2 234.6L597.2 237.3L595.9 240.1L594.4 243.0L592.9 246.1L591.5 249.6L589.8 253.1L588.1 256.8L586.1 260.4L584.0 264.1L581.8 267.8L579.4 271.6L577.0 275.3L574.3 279.1L571.6 282.8L568.7 286.5L565.7 290.1L562.6 293.7L559.3 297.2L555.8 300.6L552.2 303.9L548.4 307.1L544.4 310.1L540.3 312.9L536.1 315.7L531.9 318.3L527.6 320.9L523.3 323.3L519.0 325.6L514.6 327.7L510.3 329.7L505.9 331.5L501.6 333.2L497.3 334.8L493.1 336.2L488.8 337.4L484.7 338.4L480.6 339.3L476.6 340.0L472.7 340.5L468.9 340.8L465.2 341.0L461.7 341.0L458.2 340.8L454.9 340.3L451.8 339.8L448.8 339.0L446.0 338.0L443.3 336.9L440.9 335.5L438.7 334.0L436.6 332.3L434.8 330.4L433.1 328.4L431.9 326.4L431.1 324.6L430.5 322.6L430.2 320.5L430.1 318.3L430.1 315.7L430.2 312.6L430.5 309.4L431.0 306.1L431.9 302.7M583.5 194.6L584.2 197.2L584.6 200.0L584.9 202.9L584.9 206.0L584.9 209.3L584.8 213.0L584.6 216.9L584.2 220.8L583.5 224.8L582.6 228.7L581.2 232.3L579.7 236.0L578.0 239.8L576.1 243.6L574.1 247.4L571.9 251.2L569.5 255.0L567.0 258.8L564.3 262.6L561.5 266.4L558.5 270.1L555.3 273.7L552.0 277.3L548.4 280.7L544.7 284.0L540.7 287.2L536.7 290.3L532.6 293.3L528.4 296.2L524.2 299.0L519.9 301.7L515.5 304.2L511.2 306.7L506.8 309.0L502.3 311.1L497.9 313.1L493.5 315.0L489.1 316.7L484.7 318.2L480.4 319.6L476.1 320.8L471.8 321.8L467.7 322.7L463.6 323.3L459.6 323.8L455.7 324.1L451.9 324.2L448.3 324.2L444.8 323.9L441.4 323.5L438.2 322.8L435.1 322.0L432.2 321.0L429.5 319.7L427.0 318.3L424.7 316.8L422.6 315.0L420.7 313.0L419.0 310.9L417.4 308.4L415.8 305.4L414.5 302.2L413.4 298.9L412.5 295.4L412.0 292.0L412.1 288.8L412.3 285.5L412.8 282.1L413.6 278.5M600.3 216.6L601.0 219.3L601.5 222.1L601.7 225.0L601.7 228.0L601.3 231.0L600.4 233.7L599.3 236.4L598.0 239.3L596.5 242.2L594.9 245.4L593.4 249.0L591.7 252.7L589.8 256.4L587.8 260.1L585.7 263.9L583.4 267.7L580.9 271.5L578.4 275.3L575.7 279.2L572.9 283.0L569.9 286.8L566.8 290.5L563.6 294.2L560.3 297.8L556.7 301.3L553.1 304.7L549.2 308.0L545.1 311.0L540.9 314.0L536.6 316.8L532.3 319.5L527.9 322.1L523.5 324.6L519.0 326.9L514.6 329.1L510.1 331.2L505.6 333.1L501.2 334.8L496.8 336.4L492.4 337.8L488.1 339.1L483.9 340.1L479.7 341.0L475.6 341.8L471.6 342.3L467.7 342.6L463.9 342.8L460.2 342.8L456.7 342.6L453.3 342.1L450.1 341.5L447.0 340.8L444.1 339.8L441.4 338.6L438.9 337.2L436.6 335.7L434.4 333.9L432.6 332.0L430.9 329.9L429.6 327.9L428.7 326.0L428.1 324.0L427.8 321.8L427.7 319.5L427.7 316.8L427.8 313.7L428.1 310.4L428.6 307.0L429.4 303.4M587.5 191.6L588.2 194.4L588.7 197.3L588.9 200.4L589.0 203.6L588.9 207.1L588.8 211.0L588.5 215.0L588.1 219.1L587.3 223.2L586.3 227.3L584.9 231.1L583.2 235.0L581.4 238.9L579.4 242.9L577.2 246.9L574.9 250.9L572.4 254.9L569.8 258.9L567.0 262.9L564.1 266.9L561.0 270.8L557.7 274.6L554.2 278.4L550.5 282.0L546.6 285.5L542.5 288.9L538.3 292.1L534.0 295.3L529.6 298.3L525.2 301.2L520.7 304.1L516.1 306.7L511.5 309.3L506.9 311.7L502.2 314.0L497.6 316.1L492.9 318.0L488.3 319.8L483.7 321.4L479.2 322.9L474.7 324.1L470.2 325.2L465.8 326.1L461.5 326.8L457.4 327.4L453.3 327.7L449.3 327.8L445.4 327.8L441.7 327.5L438.2 327.0L434.8 326.4L431.6 325.5L428.5 324.4L425.6 323.2L423.0 321.7L420.5 320.0L418.3 318.2L416.3 316.2L414.5 313.9L412.8 311.3L411.2 308.2L409.8 304.9L408.6 301.4L407.7 297.8L407.2 294.2L407.2 290.8L407.5 287.3L408.0 283.7L408.8 280.0M604.7 213.8L605.5 216.6L605.9 219.6L606.2 222.6L606.2 225.8L605.8 228.9L604.8 231.8L603.7 234.7L602.3 237.8L600.7 240.9L598.9 244.2L597.3 247.9L595.5 251.7L593.5 255.6L591.3 259.5L589.0 263.4L586.5 267.4L583.9 271.4L581.2 275.4L578.3 279.4L575.4 283.4L572.3 287.4L569.1 291.3L565.7 295.2L562.2 299.0L558.5 302.7L554.7 306.3L550.7 309.7L546.5 313.0L542.1 316.1L537.6 319.0L533.0 321.9L528.4 324.6L523.8 327.2L519.1 329.7L514.4 332.0L509.7 334.1L505.1 336.1L500.4 338.0L495.8 339.6L491.2 341.1L486.7 342.4L482.2 343.6L477.8 344.5L473.5 345.3L469.3 345.9L465.2 346.2L461.2 346.4L457.3 346.4L453.6 346.2L450.0 345.7L446.6 345.1L443.4 344.3L440.3 343.3L437.5 342.0L434.8 340.6L432.4 339.0L430.1 337.2L428.1 335.2L426.4 333.0L425.0 330.8L424.0 328.8L423.4 326.7L423.0 324.4L422.8 321.9L422.8 319.1L422.9 315.8L423.2 312.3L423.8 308.7L424.6 305.0M589.9 189.8L590.6 192.7L591.1 195.7L591.4 198.9L591.4 202.2L591.3 205.7L591.3 209.8L590.9 213.9L590.4 218.1L589.7 222.3L588.6 226.5L587.0 230.4L585.3 234.4L583.4 238.4L581.4 242.5L579.1 246.6L576.7 250.7L574.2 254.8L571.5 259.0L568.6 263.1L565.6 267.2L562.4 271.2L559.1 275.2L555.5 279.0L551.8 282.8L547.8 286.4L543.6 289.9L539.3 293.2L534.8 296.4L530.3 299.6L525.8 302.6L521.1 305.5L516.4 308.2L511.7 310.9L506.9 313.3L502.2 315.7L497.4 317.8L492.6 319.8L487.9 321.7L483.1 323.4L478.5 324.8L473.8 326.2L469.2 327.3L464.7 328.2L460.3 329.0L456.0 329.5L451.8 329.8L447.7 330.0L443.7 329.9L439.9 329.6L436.3 329.2L432.7 328.5L429.4 327.6L426.3 326.5L423.3 325.2L420.6 323.7L418.0 322.0L415.7 320.1L413.6 318.0L411.8 315.7L410.1 313.1L408.4 309.9L406.9 306.5L405.8 302.9L404.9 299.2L404.3 295.5L404.3 292.0L404.6 288.5L405.1 284.7L405.9 280.9M607.4 212.1L608.1 215.0L608.6 218.0L608.9 221.2L608.8 224.5L608.4 227.7L607.5 230.7L606.3 233.7L604.9 236.8L603.2 240.0L601.4 243.5L599.7 247.3L597.8 251.2L595.7 255.1L593.4 259.1L591.0 263.2L588.4 267.2L585.7 271.3L582.9 275.4L580.0 279.5L576.9 283.6L573.7 287.7L570.4 291.8L566.9 295.8L563.4 299.7L559.6 303.5L555.7 307.2L551.6 310.8L547.3 314.1L542.8 317.3L538.1 320.4L533.5 323.3L528.7 326.1L524.0 328.8L519.2 331.3L514.3 333.7L509.5 335.9L504.7 337.9L499.9 339.8L495.2 341.6L490.5 343.1L485.8 344.5L481.2 345.6L476.7 346.6L472.2 347.4L467.9 348.0L463.7 348.4L459.5 348.6L455.6 348.6L451.7 348.3L448.1 347.9L444.6 347.3L441.2 346.4L438.1 345.4L435.1 344.1L432.4 342.7L429.8 341.0L427.5 339.1L425.5 337.1L423.6 334.8L422.2 332.6L421.2 330.5L420.5 328.3L420.1 325.9L419.9 323.4L419.9 320.5L419.9 317.0L420.2 313.4L420.8 309.7L421.7 305.9M582.9 222.5L595.5 217.1M595.2 239.2L608.9 234.3M576.3 240.2L585.8 237.8M588.1 256.8L598.3 254.7M565.6 258.8L573.4 259.0M577.0 275.3L584.9 275.5M550.9 276.7L557.0 279.8M562.6 293.7L568.4 296.5M531.9 292.3L535.8 297.8M544.4 310.1L548.2 315.5M511.0 305.3L511.9 312.7M523.3 323.3L524.2 330.6M489.5 315.1L487.3 323.9M501.6 333.2L499.4 342.0M468.6 320.9L463.5 330.6M480.6 339.3L475.3 349.0M449.7 322.4L441.7 332.4M461.7 341.0L453.5 351.1M434.1 319.2L423.7 328.9M446.0 338.0L435.4 347.8M422.8 311.5L410.6 320.2M434.8 330.4L422.4 339.3M416.9 299.5L400.7 308.1M429.0 318.6L412.6 327.3" fill="none" stroke="#ff0000" stroke-width="1.25"/><path d="M417.2 302.8L416.2 300.3L415.4 297.6L414.8 294.8L414.5 291.9L414.4 288.8L414.6 285.6L415.0 282.3L415.7 278.9L416.6 275.4L417.8 271.9L419.2 268.2L420.9 264.5L422.8 260.7L424.9 256.9L427.3 253.1L429.8 249.2L432.6 245.3L435.6 241.5L438.9 237.6L442.2 233.8L445.8 230.0L449.6 226.3L453.5 222.7L457.5 219.1L461.7 215.6L466.0 212.3L470.4 209.0L474.9 205.8L479.4 202.8L484.1 200.0M426.4 305.4L425.5 303.1L424.7 300.6L424.2 298.0L424.0 295.2L423.9 292.3L424.1 289.4L424.5 286.3L425.2 283.1L426.0 279.8L427.2 276.5L428.5 273.0L430.1 269.6L431.9 266.0L433.9 262.5L436.1 258.9L438.6 255.2L441.2 251.6L444.0 248.0L447.0 244.4L450.2 240.9L453.6 237.3L457.1 233.8L460.7 230.4L464.5 227.1L468.5 223.8L472.5 220.7L476.6 217.6L480.8 214.6L485.1 211.8L489.4 209.1M432.3 310.5L431.4 308.2L430.7 305.8L430.3 303.3L430.0 300.6L430.0 297.8L430.2 294.9L430.6 291.9L431.2 288.8L432.1 285.6L433.2 282.3L434.6 279.0L436.1 275.6L437.9 272.1L439.8 268.6L442.0 265.1L444.4 261.6L447.0 258.0L449.8 254.5L452.7 251.0L455.9 247.5L459.2 244.1L462.6 240.7L466.2 237.3L469.9 234.1L473.7 230.9L477.7 227.8L481.7 224.8L485.8 221.9L490.0 219.1L494.3 216.5M434.4 318.1L433.5 315.7L432.8 313.3L432.3 310.7L432.0 307.9L432.0 305.0L432.2 302.1L432.6 299.0L433.3 295.8L434.2 292.5L435.4 289.2L436.7 285.7L438.3 282.3L440.2 278.7L442.2 275.1L444.5 271.5L446.9 267.9L449.6 264.3L452.5 260.6L455.5 257.0L458.7 253.5L462.1 249.9L465.7 246.4L469.4 243.0L473.2 239.6L477.1 236.3L481.2 233.1L485.3 230.0L489.6 227.1L493.9 224.2L498.3 221.5M432.8 327.5L431.8 325.0L431.0 322.4L430.5 319.6L430.2 316.7L430.2 313.7L430.4 310.5L430.8 307.2L431.6 303.8L432.5 300.3L433.8 296.7L435.2 293.1L436.9 289.3L438.9 285.5L441.1 281.7L443.5 277.8L446.2 274.0L449.0 270.1L452.1 266.2L455.4 262.3L458.8 258.4L462.5 254.6L466.3 250.9L470.3 247.2L474.4 243.6L478.6 240.0L483.0 236.6L487.5 233.3L492.0 230.1L496.6 227.0L501.3 224.1M521.6 183.0L526.1 181.7L530.5 180.7L534.9 179.8L539.1 179.1L543.2 178.7L547.2 178.4L550.9 178.3L554.4 178.3L557.6 178.5L560.6 178.9L563.5 179.5L566.1 180.2L568.5 181.1L570.8 182.3L572.9 183.6L574.8 185.1L576.5 186.8L578.0 188.7L579.3 190.7L580.4 192.9L581.3 195.3L582.0 197.8L582.5 200.5L582.8 203.3L582.9 206.2L582.8 209.2L582.5 212.4L582.1 215.6L581.4 218.9L580.5 222.3M524.5 193.2L528.8 191.9L532.9 190.9L537.0 190.1L541.0 189.4L544.8 189.0L548.5 188.7L552.0 188.6L555.2 188.5L558.2 188.7L561.1 189.0L563.7 189.5L566.2 190.2L568.5 191.0L570.6 192.1L572.6 193.3L574.3 194.7L575.9 196.3L577.4 198.0L578.6 199.9L579.6 202.0L580.5 204.2L581.2 206.5L581.7 209.0L582.0 211.6L582.1 214.4L582.0 217.2L581.7 220.1L581.2 223.1L580.6 226.3L579.7 229.4M528.6 200.8L532.7 199.6L536.8 198.6L540.8 197.7L544.7 197.1L548.4 196.6L551.9 196.3L555.2 196.0L558.3 196.0L561.2 196.1L563.9 196.4L566.5 196.8L568.9 197.4L571.1 198.3L573.2 199.3L575.1 200.4L576.8 201.8L578.4 203.3L579.8 205.0L581.0 206.9L582.0 208.9L582.9 211.0L583.5 213.3L584.0 215.7L584.3 218.3L584.4 220.9L584.3 223.7L584.0 226.5L583.5 229.5L582.9 232.5L582.1 235.6M533.6 205.3L537.8 204.0L542.0 203.0L546.1 202.1L550.0 201.4L553.7 200.8L557.1 200.3L560.4 200.1L563.5 199.9L566.4 200.0L569.2 200.2L571.8 200.7L574.2 201.3L576.5 202.2L578.7 203.2L580.6 204.4L582.4 205.8L584.0 207.4L585.5 209.1L586.7 211.0L587.8 213.1L588.7 215.3L589.4 217.7L589.9 220.2L590.2 222.8L590.2 225.5L590.1 228.3L589.8 231.2L589.3 234.2L588.6 237.3L587.7 240.5M539.3 206.6L543.8 205.3L548.3 204.1L552.5 203.1L556.4 202.2L560.2 201.5L563.8 200.9L567.2 200.6L570.4 200.4L573.5 200.4L576.5 200.7L579.2 201.2L581.9 201.9L584.4 202.8L586.7 203.9L588.8 205.3L590.8 206.8L592.6 208.6L594.2 210.5L595.6 212.6L596.8 214.8L597.8 217.2L598.6 219.8L599.1 222.4L599.4 225.2L599.5 228.2L599.3 231.2L598.9 234.3L598.3 237.5L597.5 240.7L596.5 244.1" fill="none" stroke="#ff0000" stroke-width="1.2"/><path d="M596.1 239.6L594.9 242.0L601.7 239.6L603.5 236.9Z" fill="#ff0000" stroke="#ff0000" stroke-width="0.6"/><path d="M597.2 237.3L596.1 239.6L603.5 236.9L605.1 234.2Z" fill="#ff0000" stroke="#ff0000" stroke-width="0.6"/><path d="M598.1 235.1L597.2 237.3L605.1 234.2L606.5 231.5Z" fill="#ff0000" stroke="#ff0000" stroke-width="0.6"/><path d="M598.8 232.9L598.1 235.1L606.5 231.5L607.8 228.8Z" fill="#ff0000" stroke="#ff0000" stroke-width="0.6"/><path d="M609.7 212.7L609.6 215.6L607.4 226.8L607.5 224.1Z" fill="#ff0000" stroke="#ff0000" stroke-width="0.6"/><path d="M599.4 230.7L598.8 232.9L607.8 228.8L608.7 226.2Z" fill="#ff0000" stroke="#ff0000" stroke-width="0.6"/><path d="M609.7 209.7L609.7 212.7L607.5 224.1L607.5 221.4Z" fill="#ff0000" stroke="#ff0000" stroke-width="0.6"/><path d="M599.5 228.2L599.4 230.7L608.7 226.2L608.9 223.4Z" fill="#ff0000" stroke="#ff0000" stroke-width="0.6"/><path d="M609.5 206.9L609.7 209.7L607.5 221.4L607.3 218.8Z" fill="#ff0000" stroke="#ff0000" stroke-width="0.6"/><path d="M599.4 225.7L599.5 228.2L608.9 223.4L608.8 220.7Z" fill="#ff0000" stroke="#ff0000" stroke-width="0.6"/><path d="M609.1 204.2L609.5 206.9L607.3 218.8L606.9 216.3Z" fill="#ff0000" stroke="#ff0000" stroke-width="0.6"/><path d="M599.2 223.4L599.4 225.7L608.8 220.7L608.6 218.0Z" fill="#ff0000" stroke="#ff0000" stroke-width="0.6"/><path d="M608.5 201.5L609.1 204.2L606.9 216.3L606.3 213.9Z" fill="#ff0000" stroke="#ff0000" stroke-width="0.6"/><path d="M598.9 221.1L599.2 223.4L608.6 218.0L608.2 215.5Z" fill="#ff0000" stroke="#ff0000" stroke-width="0.6"/><path d="M598.3 218.9L598.9 221.1L608.2 215.5L607.7 213.1Z" fill="#ff0000" stroke="#ff0000" stroke-width="0.6"/><path d="M607.7 199.0L608.5 201.5L606.3 213.9L605.6 211.6Z" fill="#ff0000" stroke="#ff0000" stroke-width="0.6"/><path d="M597.7 216.8L598.3 218.9L607.7 213.1L606.9 210.7Z" fill="#ff0000" stroke="#ff0000" stroke-width="0.6"/><path d="M606.7 196.6L607.7 199.0L605.6 211.6L604.7 209.4Z" fill="#ff0000" stroke="#ff0000" stroke-width="0.6"/><path d="M596.8 214.8L597.7 216.8L606.9 210.7L606.0 208.5Z" fill="#ff0000" stroke="#ff0000" stroke-width="0.6"/><path d="M605.5 194.3L606.7 196.6L604.7 209.4L603.6 207.3Z" fill="#ff0000" stroke="#ff0000" stroke-width="0.6"/><path d="M595.8 212.9L596.8 214.8L606.0 208.5L604.9 206.3Z" fill="#ff0000" stroke="#ff0000" stroke-width="0.6"/><path d="M604.2 192.1L605.5 194.3L603.6 207.3L602.3 205.3Z" fill="#ff0000" stroke="#ff0000" stroke-width="0.6"/><path d="M594.7 211.1L595.8 212.9L604.9 206.3L603.6 204.3Z" fill="#ff0000" stroke="#ff0000" stroke-width="0.6"/><path d="M594.6 180.2L596.3 182.1L602.6 190.0L600.9 188.1Z" fill="#4a7ad4" stroke="#4a7ad4" stroke-width="0.6"/><path d="M602.6 190.0L604.2 192.1L602.3 205.3L600.9 203.4Z" fill="#ff0000" stroke="#ff0000" stroke-width="0.6"/><path d="M593.5 209.5L594.7 211.1L603.6 204.3L602.2 202.4Z" fill="#ff0000" stroke="#ff0000" stroke-width="0.6"/><path d="M407.7 319.5L406.2 317.4L411.6 326.2L413.1 328.3Z" fill="#ff0000" stroke="#ff0000" stroke-width="0.6"/><path d="M592.8 178.4L594.6 180.2L600.9 188.1L598.9 186.3Z" fill="#4a7ad4" stroke="#4a7ad4" stroke-width="0.6"/><path d="M600.9 188.1L602.6 190.0L600.9 203.4L599.3 201.6Z" fill="#ff0000" stroke="#ff0000" stroke-width="0.6"/><path d="M592.0 208.0L593.5 209.5L602.2 202.4L600.5 200.6Z" fill="#ff0000" stroke="#ff0000" stroke-width="0.6"/><path d="M406.2 317.4L404.9 315.1L410.3 324.0L411.6 326.2Z" fill="#ff0000" stroke="#ff0000" stroke-width="0.6"/><path d="M413.1 328.3L411.6 326.2L424.0 327.6L425.2 329.0Z" fill="#ff0000" stroke="#ff0000" stroke-width="0.6"/><path d="M590.8 176.8L592.8 178.4L598.9 186.3L596.9 184.6Z" fill="#4a7ad4" stroke="#4a7ad4" stroke-width="0.6"/><path d="M431.3 325.2L430.8 323.6L422.6 328.4L423.8 329.8Z" fill="#ff0000" stroke="#ff0000" stroke-width="0.6"/><path d="M598.9 186.3L600.9 188.1L599.3 201.6L597.5 200.0Z" fill="#ff0000" stroke="#ff0000" stroke-width="0.6"/><path d="M590.5 206.5L592.0 208.0L600.5 200.6L598.7 199.0Z" fill="#ff0000" stroke="#ff0000" stroke-width="0.6"/><path d="M404.9 315.1L403.7 312.7L409.1 321.5L410.3 324.0Z" fill="#ff0000" stroke="#ff0000" stroke-width="0.6"/><path d="M411.6 326.2L410.3 324.0L423.1 326.0L424.0 327.6Z" fill="#ff0000" stroke="#ff0000" stroke-width="0.6"/><path d="M588.6 175.4L590.8 176.8L596.9 184.6L594.7 183.2Z" fill="#4a7ad4" stroke="#4a7ad4" stroke-width="0.6"/><path d="M430.8 323.6L430.4 322.0L421.7 326.8L422.6 328.4Z" fill="#ff0000" stroke="#ff0000" stroke-width="0.6"/><path d="M596.9 184.6L598.9 186.3L597.5 200.0L595.6 198.6Z" fill="#ff0000" stroke="#ff0000" stroke-width="0.6"/><path d="M588.8 205.3L590.5 206.5L598.7 199.0L596.8 197.5Z" fill="#ff0000" stroke="#ff0000" stroke-width="0.6"/><path d="M403.7 312.7L402.7 310.2L408.2 319.0L409.1 321.5Z" fill="#ff0000" stroke="#ff0000" stroke-width="0.6"/><path d="M410.3 324.0L409.1 321.5L422.3 324.3L423.1 326.0Z" fill="#ff0000" stroke="#ff0000" stroke-width="0.6"/><path d="M586.4 174.1L588.6 175.4L594.7 183.2L592.3 181.9Z" fill="#4a7ad4" stroke="#4a7ad4" stroke-width="0.6"/><path d="M430.4 322.0L430.2 320.2L420.9 325.0L421.7 326.8Z" fill="#ff0000" stroke="#ff0000" stroke-width="0.6"/><path d="M594.7 183.2L596.9 184.6L595.6 198.6L593.6 197.2Z" fill="#ff0000" stroke="#ff0000" stroke-width="0.6"/><path d="M587.1 204.1L588.8 205.3L596.8 197.5L594.7 196.1Z" fill="#ff0000" stroke="#ff0000" stroke-width="0.6"/><path d="M402.7 310.2L402.1 307.4L407.5 316.3L408.2 319.0Z" fill="#ff0000" stroke="#ff0000" stroke-width="0.6"/><path d="M584.0 173.1L586.4 174.1L592.3 181.9L589.8 180.8Z" fill="#4a7ad4" stroke="#4a7ad4" stroke-width="0.6"/><path d="M409.1 321.5L408.2 319.0L421.8 322.4L422.3 324.3Z" fill="#ff0000" stroke="#ff0000" stroke-width="0.6"/><path d="M430.2 320.2L430.1 318.3L420.3 323.2L420.9 325.0Z" fill="#ff0000" stroke="#ff0000" stroke-width="0.6"/><path d="M592.3 181.9L594.7 183.2L593.6 197.2L591.5 196.1Z" fill="#ff0000" stroke="#ff0000" stroke-width="0.6"/><path d="M585.2 203.1L587.1 204.1L594.7 196.1L592.5 194.9Z" fill="#ff0000" stroke="#ff0000" stroke-width="0.6"/><path d="M402.1 307.4L402.0 304.4L407.4 313.2L407.5 316.3Z" fill="#ff0000" stroke="#ff0000" stroke-width="0.6"/><path d="M581.5 172.2L584.0 173.1L589.8 180.8L587.2 179.8Z" fill="#4a7ad4" stroke="#4a7ad4" stroke-width="0.6"/><path d="M408.2 319.0L407.5 316.3L421.4 320.3L421.8 322.4Z" fill="#ff0000" stroke="#ff0000" stroke-width="0.6"/><path d="M430.1 318.3L430.2 316.2L419.9 321.0L420.3 323.2Z" fill="#ff0000" stroke="#ff0000" stroke-width="0.6"/><path d="M589.8 180.8L592.3 181.9L591.5 196.1L589.2 195.1Z" fill="#ff0000" stroke="#ff0000" stroke-width="0.6"/><path d="M583.1 202.3L585.2 203.1L592.5 194.9L590.2 193.9Z" fill="#ff0000" stroke="#ff0000" stroke-width="0.6"/><path d="M402.0 304.4L402.1 301.2L407.6 310.1L407.4 313.2Z" fill="#4a7ad4" stroke="#4a7ad4" stroke-width="0.6"/><path d="M578.8 171.4L581.5 172.2L587.2 179.8L584.5 179.1Z" fill="#4a7ad4" stroke="#4a7ad4" stroke-width="0.6"/><path d="M407.5 316.3L407.4 313.2L421.4 317.5L421.4 320.3Z" fill="#ff0000" stroke="#ff0000" stroke-width="0.6"/><path d="M430.2 316.2L430.2 313.7L419.9 318.2L419.9 321.0Z" fill="#ff0000" stroke="#ff0000" stroke-width="0.6"/><path d="M581.0 201.6L583.1 202.3L590.2 193.9L587.8 193.1Z" fill="#ff0000" stroke="#ff0000" stroke-width="0.6"/><path d="M587.2 179.8L589.8 180.8L589.2 195.1L586.8 194.3Z" fill="#ff0000" stroke="#ff0000" stroke-width="0.6"/><path d="M402.1 301.2L402.4 298.0L407.9 306.8L407.6 310.1Z" fill="#4a7ad4" stroke="#4a7ad4" stroke-width="0.6"/><path d="M430.2 313.7L430.3 311.0L420.0 315.3L419.9 318.2Z" fill="#ff0000" stroke="#ff0000" stroke-width="0.6"/><path d="M570.2 170.4L573.2 170.6L563.1 171.1L560.3 171.0Z" fill="#ff0000" stroke="#ff0000" stroke-width="0.6"/><path d="M576.1 170.9L578.8 171.4L584.5 179.1L581.7 178.5Z" fill="#4a7ad4" stroke="#4a7ad4" stroke-width="0.6"/><path d="M407.4 313.2L407.6 310.1L421.5 314.6L421.4 317.5Z" fill="#ff0000" stroke="#ff0000" stroke-width="0.6"/><path d="M578.8 201.1L581.0 201.6L587.8 193.1L585.2 192.4Z" fill="#ff0000" stroke="#ff0000" stroke-width="0.6"/><path d="M584.5 179.1L587.2 179.8L586.8 194.3L584.3 193.6Z" fill="#ff0000" stroke="#ff0000" stroke-width="0.6"/><path d="M403.7 291.2L404.7 287.7L408.3 277.2L407.4 280.5Z" fill="#ff0000" stroke="#ff0000" stroke-width="0.6"/><path d="M430.3 311.0L430.7 308.3L420.4 312.2L420.0 315.3Z" fill="#ff0000" stroke="#ff0000" stroke-width="0.6"/><path d="M402.4 298.0L403.0 294.6L408.5 303.5L407.9 306.8Z" fill="#4a7ad4" stroke="#4a7ad4" stroke-width="0.6"/><path d="M567.1 170.2L570.2 170.4L560.3 171.0L557.4 170.7Z" fill="#ff0000" stroke="#ff0000" stroke-width="0.6"/><path d="M576.5 200.7L578.8 201.1L585.2 192.4L582.6 191.9Z" fill="#ff0000" stroke="#ff0000" stroke-width="0.6"/><path d="M573.2 170.6L576.1 170.9L581.7 178.5L578.8 178.2Z" fill="#4a7ad4" stroke="#4a7ad4" stroke-width="0.6"/><path d="M407.6 310.1L407.9 306.8L421.9 311.7L421.5 314.6Z" fill="#ff0000" stroke="#ff0000" stroke-width="0.6"/><path d="M581.7 178.5L584.5 179.1L584.3 193.6L581.7 193.2Z" fill="#ff0000" stroke="#ff0000" stroke-width="0.6"/><path d="M404.7 287.7L405.9 284.1L409.3 274.0L408.3 277.2Z" fill="#ff0000" stroke="#ff0000" stroke-width="0.6"/><path d="M430.7 308.3L431.2 305.5L421.0 309.1L420.4 312.2Z" fill="#ff0000" stroke="#ff0000" stroke-width="0.6"/><path d="M574.0 200.5L576.5 200.7L582.6 191.9L579.9 191.6Z" fill="#ff0000" stroke="#ff0000" stroke-width="0.6"/><path d="M403.0 294.6L403.7 291.2L409.3 300.1L408.5 303.5Z" fill="#4a7ad4" stroke="#4a7ad4" stroke-width="0.6"/><path d="M564.4 169.4L567.1 170.2L557.4 170.7L554.8 169.8Z" fill="#ff0000" stroke="#ff0000" stroke-width="0.6"/><path d="M407.9 306.8L408.5 303.5L422.4 308.6L421.9 311.7Z" fill="#ff0000" stroke="#ff0000" stroke-width="0.6"/><path d="M570.2 170.4L573.2 170.6L578.8 178.2L575.8 178.0Z" fill="#4a7ad4" stroke="#4a7ad4" stroke-width="0.6"/><path d="M578.8 178.2L581.7 178.5L581.7 193.2L579.0 192.9Z" fill="#ff0000" stroke="#ff0000" stroke-width="0.6"/><path d="M405.9 284.1L407.2 280.5L410.6 270.6L409.3 274.0Z" fill="#ff0000" stroke="#ff0000" stroke-width="0.6"/><path d="M431.2 305.5L431.9 302.7L421.7 305.9L421.0 309.1Z" fill="#ff0000" stroke="#ff0000" stroke-width="0.6"/><path d="M571.5 200.4L574.0 200.5L579.9 191.6L577.0 191.5Z" fill="#ff0000" stroke="#ff0000" stroke-width="0.6"/><path d="M403.7 291.2L404.7 287.7L410.2 296.5L409.3 300.1Z" fill="#4a7ad4" stroke="#4a7ad4" stroke-width="0.6"/><path d="M561.4 168.7L564.4 169.4L554.8 169.8L552.0 169.1Z" fill="#ff0000" stroke="#ff0000" stroke-width="0.6"/><path d="M408.5 303.5L409.3 300.1L423.2 305.5L422.4 308.6Z" fill="#ff0000" stroke="#ff0000" stroke-width="0.6"/><path d="M567.1 170.2L570.2 170.4L575.8 178.0L572.7 177.9Z" fill="#4a7ad4" stroke="#4a7ad4" stroke-width="0.6"/><path d="M575.8 178.0L578.8 178.2L579.0 192.9L576.2 192.8Z" fill="#ff0000" stroke="#ff0000" stroke-width="0.6"/><path d="M407.2 280.5L408.8 276.8L412.0 267.2L410.6 270.6Z" fill="#ff0000" stroke="#ff0000" stroke-width="0.6"/><path d="M431.9 302.7L432.7 299.7L422.6 302.6L421.7 305.9Z" fill="#ff0000" stroke="#ff0000" stroke-width="0.6"/><path d="M568.8 200.4L571.5 200.4L577.0 191.5L574.2 191.4Z" fill="#ff0000" stroke="#ff0000" stroke-width="0.6"/><path d="M404.7 287.7L405.9 284.1L411.4 293.0L410.2 296.5Z" fill="#4a7ad4" stroke="#4a7ad4" stroke-width="0.6"/><path d="M409.3 300.1L410.2 296.5L424.1 302.2L423.2 305.5Z" fill="#ff0000" stroke="#ff0000" stroke-width="0.6"/><path d="M558.2 168.3L561.4 168.7L552.0 169.1L548.9 168.5Z" fill="#ff0000" stroke="#ff0000" stroke-width="0.6"/><path d="M572.7 177.9L575.8 178.0L576.2 192.8L573.4 192.6Z" fill="#ff0000" stroke="#ff0000" stroke-width="0.6"/><path d="M564.4 169.4L567.1 170.2L572.7 177.9L570.0 177.1Z" fill="#4a7ad4" stroke="#4a7ad4" stroke-width="0.6"/><path d="M408.8 276.8L410.6 273.0L413.7 263.8L412.0 267.2Z" fill="#ff0000" stroke="#ff0000" stroke-width="0.6"/><path d="M432.7 299.7L433.8 296.7L423.8 299.3L422.6 302.6Z" fill="#ff0000" stroke="#ff0000" stroke-width="0.6"/><path d="M566.1 200.7L568.8 200.4L574.2 191.4L571.7 190.6Z" fill="#ff0000" stroke="#ff0000" stroke-width="0.6"/><path d="M405.9 284.1L407.2 280.5L412.8 289.3L411.4 293.0Z" fill="#4a7ad4" stroke="#4a7ad4" stroke-width="0.6"/><path d="M410.2 296.5L411.4 293.0L425.2 298.9L424.1 302.2Z" fill="#ff0000" stroke="#ff0000" stroke-width="0.6"/><path d="M554.8 167.9L558.2 168.3L548.9 168.5L545.6 168.0Z" fill="#ff0000" stroke="#ff0000" stroke-width="0.6"/><path d="M570.0 177.1L572.7 177.9L573.4 192.6L571.0 191.9Z" fill="#ff0000" stroke="#ff0000" stroke-width="0.6"/><path d="M410.6 273.0L412.6 269.2L415.5 260.3L413.7 263.8Z" fill="#ff0000" stroke="#ff0000" stroke-width="0.6"/><path d="M561.4 168.7L564.4 169.4L570.0 177.1L567.1 176.5Z" fill="#4a7ad4" stroke="#4a7ad4" stroke-width="0.6"/><path d="M433.8 296.7L435.0 293.7L425.1 295.9L423.8 299.3Z" fill="#ff0000" stroke="#ff0000" stroke-width="0.6"/><path d="M563.2 201.0L566.1 200.7L571.7 190.6L569.0 190.0Z" fill="#ff0000" stroke="#ff0000" stroke-width="0.6"/><path d="M407.2 280.5L408.8 276.8L414.4 285.6L412.8 289.3Z" fill="#4a7ad4" stroke="#4a7ad4" stroke-width="0.6"/><path d="M411.4 293.0L412.8 289.3L426.5 295.6L425.2 298.9Z" fill="#ff0000" stroke="#ff0000" stroke-width="0.6"/><path d="M412.6 269.2L414.8 265.4L417.5 256.8L415.5 260.3Z" fill="#ff0000" stroke="#ff0000" stroke-width="0.6"/><path d="M435.0 293.7L436.3 290.6L426.6 292.5L425.1 295.9Z" fill="#ff0000" stroke="#ff0000" stroke-width="0.6"/><path d="M551.1 167.8L554.8 167.9L545.6 168.0L542.0 167.6Z" fill="#ff0000" stroke="#ff0000" stroke-width="0.6"/><path d="M567.1 176.5L570.0 177.1L571.0 191.9L568.3 191.3Z" fill="#ff0000" stroke="#ff0000" stroke-width="0.6"/><path d="M558.2 168.3L561.4 168.7L567.1 176.5L564.0 176.1Z" fill="#4a7ad4" stroke="#4a7ad4" stroke-width="0.6"/><path d="M560.2 201.5L563.2 201.0L569.0 190.0L566.1 189.6Z" fill="#ff0000" stroke="#ff0000" stroke-width="0.6"/><path d="M408.8 276.8L410.6 273.0L416.2 281.8L414.4 285.6Z" fill="#4a7ad4" stroke="#4a7ad4" stroke-width="0.6"/><path d="M414.8 265.4L417.2 261.5L419.7 253.3L417.5 256.8Z" fill="#ff0000" stroke="#ff0000" stroke-width="0.6"/><path d="M412.8 289.3L414.4 285.6L428.0 292.2L426.5 295.6Z" fill="#ff0000" stroke="#ff0000" stroke-width="0.6"/><path d="M436.3 290.6L437.9 287.4L428.3 289.0L426.6 292.5Z" fill="#ff0000" stroke="#ff0000" stroke-width="0.6"/><path d="M548.1 165.2L551.1 167.8L542.0 167.6L539.3 164.9Z" fill="#ff0000" stroke="#ff0000" stroke-width="0.6"/><path d="M564.0 176.1L567.1 176.5L568.3 191.3L565.5 190.9Z" fill="#ff0000" stroke="#ff0000" stroke-width="0.6"/><path d="M557.1 202.1L560.2 201.5L566.1 189.6L563.0 189.3Z" fill="#ff0000" stroke="#ff0000" stroke-width="0.6"/><path d="M417.2 261.5L419.7 257.6L422.0 249.7L419.7 253.3Z" fill="#ff0000" stroke="#ff0000" stroke-width="0.6"/><path d="M554.8 167.9L558.2 168.3L564.0 176.1L560.6 175.8Z" fill="#4a7ad4" stroke="#4a7ad4" stroke-width="0.6"/><path d="M410.6 273.0L412.6 269.2L418.3 278.0L416.2 281.8Z" fill="#4a7ad4" stroke="#4a7ad4" stroke-width="0.6"/><path d="M414.4 285.6L416.2 281.8L429.7 288.7L428.0 292.2Z" fill="#ff0000" stroke="#ff0000" stroke-width="0.6"/><path d="M437.9 287.4L439.6 284.3L430.2 285.4L428.3 289.0Z" fill="#ff0000" stroke="#ff0000" stroke-width="0.6"/><path d="M419.7 257.6L422.5 253.7L424.5 246.2L422.0 249.7Z" fill="#ff0000" stroke="#ff0000" stroke-width="0.6"/><path d="M553.8 202.8L557.1 202.1L563.0 189.3L559.7 189.3Z" fill="#ff0000" stroke="#ff0000" stroke-width="0.6"/><path d="M560.6 175.8L564.0 176.1L565.5 190.9L562.4 190.6Z" fill="#ff0000" stroke="#ff0000" stroke-width="0.6"/><path d="M412.6 269.2L414.8 265.4L420.5 274.2L418.3 278.0Z" fill="#4a7ad4" stroke="#4a7ad4" stroke-width="0.6"/><path d="M439.6 284.3L441.5 281.1L432.3 281.8L430.2 285.4Z" fill="#ff0000" stroke="#ff0000" stroke-width="0.6"/><path d="M416.2 281.8L418.3 278.0L431.6 285.2L429.7 288.7Z" fill="#ff0000" stroke="#ff0000" stroke-width="0.6"/><path d="M551.1 167.8L554.8 167.9L560.6 175.8L557.0 175.7Z" fill="#4a7ad4" stroke="#4a7ad4" stroke-width="0.6"/><path d="M422.5 253.7L425.4 249.9L427.2 242.6L424.5 246.2Z" fill="#ff0000" stroke="#ff0000" stroke-width="0.6"/><path d="M550.4 203.6L553.8 202.8L559.7 189.3L557.3 186.8Z" fill="#ff0000" stroke="#ff0000" stroke-width="0.6"/><path d="M441.5 281.1L443.5 277.8L434.6 278.2L432.3 281.8Z" fill="#ff0000" stroke="#ff0000" stroke-width="0.6"/><path d="M414.8 265.4L417.2 261.5L422.9 270.3L420.5 274.2Z" fill="#4a7ad4" stroke="#4a7ad4" stroke-width="0.6"/><path d="M545.3 161.1L548.1 165.2L539.3 164.9L536.8 160.7Z" fill="#ff0000" stroke="#ff0000" stroke-width="0.6"/><path d="M418.3 278.0L420.5 274.2L433.6 281.7L431.6 285.2Z" fill="#ff0000" stroke="#ff0000" stroke-width="0.6"/><path d="M425.4 249.9L428.5 246.0L430.0 239.1L427.2 242.6Z" fill="#ff0000" stroke="#ff0000" stroke-width="0.6"/><path d="M557.0 175.7L560.6 175.8L562.4 190.6L559.2 190.5Z" fill="#ff0000" stroke="#ff0000" stroke-width="0.6"/><path d="M548.1 165.2L551.1 167.8L557.0 175.7L554.2 173.2Z" fill="#4a7ad4" stroke="#4a7ad4" stroke-width="0.6"/><path d="M443.5 277.8L445.7 274.6L437.0 274.6L434.6 278.2Z" fill="#ff0000" stroke="#ff0000" stroke-width="0.6"/><path d="M428.5 246.0L431.8 242.1L433.0 235.6L430.0 239.1Z" fill="#ff0000" stroke="#ff0000" stroke-width="0.6"/><path d="M417.2 261.5L419.7 257.6L425.5 266.4L422.9 270.3Z" fill="#4a7ad4" stroke="#4a7ad4" stroke-width="0.6"/><path d="M420.5 274.2L422.9 270.3L435.9 278.2L433.6 281.7Z" fill="#ff0000" stroke="#ff0000" stroke-width="0.6"/><path d="M431.8 242.1L435.2 238.3L436.1 232.1L433.0 235.6Z" fill="#ff0000" stroke="#ff0000" stroke-width="0.6"/><path d="M445.7 274.6L448.0 271.4L439.6 271.0L437.0 274.6Z" fill="#ff0000" stroke="#ff0000" stroke-width="0.6"/><path d="M546.8 204.5L550.4 203.6L557.3 186.8L554.9 182.8Z" fill="#ff0000" stroke="#ff0000" stroke-width="0.6"/><path d="M554.2 173.2L557.0 175.7L559.2 190.5L556.8 188.0Z" fill="#ff0000" stroke="#ff0000" stroke-width="0.6"/><path d="M419.7 257.6L422.5 253.7L428.2 262.5L425.5 266.4Z" fill="#4a7ad4" stroke="#4a7ad4" stroke-width="0.6"/><path d="M422.9 270.3L425.5 266.4L438.3 274.6L435.9 278.2Z" fill="#ff0000" stroke="#ff0000" stroke-width="0.6"/><path d="M435.2 238.3L438.8 234.5L439.4 228.6L436.1 232.1Z" fill="#ff0000" stroke="#ff0000" stroke-width="0.6"/><path d="M448.0 271.4L450.5 268.1L442.4 267.3L439.6 271.0Z" fill="#ff0000" stroke="#ff0000" stroke-width="0.6"/><path d="M541.9 157.2L545.3 161.1L536.8 160.7L533.7 156.8Z" fill="#ff0000" stroke="#ff0000" stroke-width="0.6"/><path d="M438.8 234.5L442.6 230.7L442.8 225.2L439.4 228.6Z" fill="#ff0000" stroke="#ff0000" stroke-width="0.6"/><path d="M422.5 253.7L425.4 249.9L431.2 258.6L428.2 262.5Z" fill="#4a7ad4" stroke="#4a7ad4" stroke-width="0.6"/><path d="M425.5 266.4L428.2 262.5L440.8 271.0L438.3 274.6Z" fill="#ff0000" stroke="#ff0000" stroke-width="0.6"/><path d="M450.5 268.1L453.2 264.9L445.3 263.7L442.4 267.3Z" fill="#ff0000" stroke="#ff0000" stroke-width="0.6"/><path d="M442.6 230.7L446.3 226.9L446.2 221.7L442.8 225.2Z" fill="#ff0000" stroke="#ff0000" stroke-width="0.6"/><path d="M545.3 161.1L548.1 165.2L554.2 173.2L551.6 169.2Z" fill="#4a7ad4" stroke="#4a7ad4" stroke-width="0.6"/><path d="M543.1 205.5L546.8 204.5L554.9 182.8L552.0 179.1Z" fill="#ff0000" stroke="#ff0000" stroke-width="0.6"/><path d="M425.4 249.9L428.5 246.0L434.3 254.7L431.2 258.6Z" fill="#4a7ad4" stroke="#4a7ad4" stroke-width="0.6"/><path d="M453.2 264.9L455.9 261.6L448.4 260.1L445.3 263.7Z" fill="#ff0000" stroke="#ff0000" stroke-width="0.6"/><path d="M428.2 262.5L431.2 258.6L443.6 267.5L440.8 271.0Z" fill="#ff0000" stroke="#ff0000" stroke-width="0.6"/><path d="M446.3 226.9L449.7 222.9L449.2 218.0L446.2 221.7Z" fill="#ff0000" stroke="#ff0000" stroke-width="0.6"/><path d="M428.5 246.0L431.8 242.1L437.6 250.9L434.3 254.7Z" fill="#4a7ad4" stroke="#4a7ad4" stroke-width="0.6"/><path d="M455.9 261.6L458.8 258.4L451.7 256.5L448.4 260.1Z" fill="#ff0000" stroke="#ff0000" stroke-width="0.6"/><path d="M551.6 169.2L554.2 173.2L556.8 188.0L554.5 184.0Z" fill="#ff0000" stroke="#ff0000" stroke-width="0.6"/><path d="M449.7 222.9L453.2 218.8L452.4 214.3L449.2 218.0Z" fill="#ff0000" stroke="#ff0000" stroke-width="0.6"/><path d="M431.2 258.6L434.3 254.7L446.5 263.9L443.6 267.5Z" fill="#ff0000" stroke="#ff0000" stroke-width="0.6"/><path d="M458.8 258.4L461.9 255.3L455.0 253.0L451.7 256.5Z" fill="#ff0000" stroke="#ff0000" stroke-width="0.6"/><path d="M431.8 242.1L435.2 238.3L441.1 247.0L437.6 250.9Z" fill="#4a7ad4" stroke="#4a7ad4" stroke-width="0.6"/><path d="M539.3 206.6L543.1 205.5L552.0 179.1L548.4 175.6Z" fill="#ff0000" stroke="#ff0000" stroke-width="0.6"/><path d="M453.2 218.8L457.0 214.8L455.8 210.5L452.4 214.3Z" fill="#ff0000" stroke="#ff0000" stroke-width="0.6"/><path d="M537.8 153.7L541.9 157.2L533.7 156.8L529.9 153.2Z" fill="#ff0000" stroke="#ff0000" stroke-width="0.6"/><path d="M434.3 254.7L437.6 250.9L449.5 260.3L446.5 263.9Z" fill="#ff0000" stroke="#ff0000" stroke-width="0.6"/><path d="M461.9 255.3L465.0 252.1L458.6 249.4L455.0 253.0Z" fill="#ff0000" stroke="#ff0000" stroke-width="0.6"/><path d="M435.2 238.3L438.8 234.5L444.7 243.2L441.1 247.0Z" fill="#4a7ad4" stroke="#4a7ad4" stroke-width="0.6"/><path d="M457.0 214.8L461.0 210.7L459.4 206.8L455.8 210.5Z" fill="#ff0000" stroke="#ff0000" stroke-width="0.6"/><path d="M465.0 252.1L468.3 249.0L462.1 245.9L458.6 249.4Z" fill="#ff0000" stroke="#ff0000" stroke-width="0.6"/><path d="M541.9 157.2L545.3 161.1L551.6 169.2L548.3 165.5Z" fill="#4a7ad4" stroke="#4a7ad4" stroke-width="0.6"/><path d="M437.6 250.9L441.1 247.0L452.7 256.8L449.5 260.3Z" fill="#ff0000" stroke="#ff0000" stroke-width="0.6"/><path d="M461.0 210.7L465.2 206.7L463.2 203.1L459.4 206.8Z" fill="#ff0000" stroke="#ff0000" stroke-width="0.6"/><path d="M438.8 234.5L442.6 230.7L448.5 239.4L444.7 243.2Z" fill="#4a7ad4" stroke="#4a7ad4" stroke-width="0.6"/><path d="M468.3 249.0L471.6 246.0L465.2 242.1L462.1 245.9Z" fill="#ff0000" stroke="#ff0000" stroke-width="0.6"/><path d="M441.1 247.0L444.7 243.2L456.0 253.3L452.7 256.8Z" fill="#ff0000" stroke="#ff0000" stroke-width="0.6"/><path d="M442.6 230.7L446.3 226.9L452.2 235.6L448.5 239.4Z" fill="#4a7ad4" stroke="#4a7ad4" stroke-width="0.6"/><path d="M465.2 206.7L468.4 201.1L466.0 197.8L463.2 203.1Z" fill="#ff0000" stroke="#ff0000" stroke-width="0.6"/><path d="M471.6 246.0L475.1 243.0L468.5 238.3L465.2 242.1Z" fill="#ff0000" stroke="#ff0000" stroke-width="0.6"/><path d="M548.3 165.5L551.6 169.2L554.5 184.0L551.6 180.3Z" fill="#ff0000" stroke="#ff0000" stroke-width="0.6"/><path d="M444.7 243.2L448.5 239.4L459.5 249.8L456.0 253.3Z" fill="#ff0000" stroke="#ff0000" stroke-width="0.6"/><path d="M475.1 243.0L478.6 240.0L472.1 234.5L468.5 238.3Z" fill="#ff0000" stroke="#ff0000" stroke-width="0.6"/><path d="M446.3 226.9L449.7 222.9L455.6 231.6L452.2 235.6Z" fill="#4a7ad4" stroke="#4a7ad4" stroke-width="0.6"/><path d="M448.5 239.4L452.2 235.6L462.9 246.3L459.5 249.8Z" fill="#ff0000" stroke="#ff0000" stroke-width="0.6"/><path d="M478.6 240.0L482.2 237.2L475.8 230.6L472.1 234.5Z" fill="#ff0000" stroke="#ff0000" stroke-width="0.6"/><path d="M482.2 237.2L486.0 234.4L479.7 226.8L475.8 230.6Z" fill="#ff0000" stroke="#ff0000" stroke-width="0.6"/><path d="M449.7 222.9L453.2 218.8L459.2 227.5L455.6 231.6Z" fill="#4a7ad4" stroke="#4a7ad4" stroke-width="0.6"/><path d="M452.2 235.6L455.6 231.6L466.0 242.6L462.9 246.3Z" fill="#ff0000" stroke="#ff0000" stroke-width="0.6"/><path d="M486.0 234.4L489.7 231.7L482.7 221.5L479.7 226.8Z" fill="#ff0000" stroke="#ff0000" stroke-width="0.6"/><path d="M537.8 153.7L541.9 157.2L548.3 165.5L544.2 162.0Z" fill="#ff0000" stroke="#ff0000" stroke-width="0.6"/><path d="M453.2 218.8L457.0 214.8L463.0 223.4L459.2 227.5Z" fill="#4a7ad4" stroke="#4a7ad4" stroke-width="0.6"/><path d="M468.4 201.1L471.5 194.2L468.7 191.2L466.0 197.8Z" fill="#ff0000" stroke="#ff0000" stroke-width="0.6"/><path d="M455.6 231.6L459.2 227.5L469.3 238.8L466.0 242.6Z" fill="#ff0000" stroke="#ff0000" stroke-width="0.6"/><path d="M489.7 231.7L493.5 229.0L485.6 214.8L482.7 221.5Z" fill="#ff0000" stroke="#ff0000" stroke-width="0.6"/><path d="M457.0 214.8L461.0 210.7L467.0 219.4L463.0 223.4Z" fill="#4a7ad4" stroke="#4a7ad4" stroke-width="0.6"/><path d="M459.2 227.5L463.0 223.4L472.8 235.0L469.3 238.8Z" fill="#ff0000" stroke="#ff0000" stroke-width="0.6"/><path d="M544.2 162.0L548.3 165.5L551.6 180.3L548.1 176.8Z" fill="#ff0000" stroke="#ff0000" stroke-width="0.6"/><path d="M461.0 210.7L465.2 206.7L471.2 215.3L467.0 219.4Z" fill="#4a7ad4" stroke="#4a7ad4" stroke-width="0.6"/><path d="M463.0 223.4L467.0 219.4L476.4 231.3L472.8 235.0Z" fill="#ff0000" stroke="#ff0000" stroke-width="0.6"/><path d="M493.5 229.0L497.4 226.5L489.0 207.9L485.6 214.8Z" fill="#ff0000" stroke="#ff0000" stroke-width="0.6"/><path d="M465.2 206.7L468.4 201.1L474.5 209.7L471.2 215.3Z" fill="#4a7ad4" stroke="#4a7ad4" stroke-width="0.6"/><path d="M467.0 219.4L471.2 215.3L480.3 227.5L476.4 231.3Z" fill="#ff0000" stroke="#ff0000" stroke-width="0.6"/><path d="M471.5 194.2L475.2 187.1L472.0 184.4L468.7 191.2Z" fill="#ff0000" stroke="#ff0000" stroke-width="0.6"/><path d="M497.4 226.5L501.3 224.1L493.1 200.7L489.0 207.9Z" fill="#ff0000" stroke="#ff0000" stroke-width="0.6"/><path d="M471.2 215.3L474.5 209.7L483.2 222.2L480.3 227.5Z" fill="#ff0000" stroke="#ff0000" stroke-width="0.6"/><path d="M468.4 201.1L471.5 194.2L477.6 202.8L474.5 209.7Z" fill="#4a7ad4" stroke="#4a7ad4" stroke-width="0.6"/><path d="M475.2 187.1L479.6 179.7L475.9 177.3L472.0 184.4Z" fill="#ff0000" stroke="#ff0000" stroke-width="0.6"/><path d="M474.5 209.7L477.6 202.8L486.0 215.6L483.2 222.2Z" fill="#ff0000" stroke="#ff0000" stroke-width="0.6"/><path d="M471.5 194.2L475.2 187.1L481.4 195.7L477.6 202.8Z" fill="#4a7ad4" stroke="#4a7ad4" stroke-width="0.6"/><path d="M477.6 202.8L481.4 195.7L489.4 208.7L486.0 215.6Z" fill="#ff0000" stroke="#ff0000" stroke-width="0.6"/><path d="M475.2 187.1L479.6 179.7L485.8 188.3L481.4 195.7Z" fill="#ff0000" stroke="#ff0000" stroke-width="0.6"/><path d="M481.4 195.7L485.8 188.3L493.4 201.6L489.4 208.7Z" fill="#ff0000" stroke="#ff0000" stroke-width="0.6"/><path d="M425.3 315.8L425.3 314.2L425.5 312.5L425.7 310.8L426.0 309.0L426.3 307.2L426.7 305.4L427.2 303.6L427.7 301.7L428.3 299.9L429.0 298.0L429.8 296.0L430.6 294.1L431.4 292.1L432.4 290.1L433.4 288.2L434.4 286.2L435.5 284.1L436.7 282.1L438.0 280.1L439.3 278.0L440.6 276.0L442.1 273.9L443.5 271.9L445.1 269.8L446.7 267.7L448.3 265.7L450.0 263.6L451.8 261.6L453.6 259.6L455.4 257.5L457.3 255.5L459.3 253.5L461.3 251.5L463.3 249.5L465.2 247.5L467.0 245.3L468.8 243.2L470.7 241.0L472.6 238.8L474.6 236.6L476.7 234.4L478.8 232.2L481.0 230.1L483.3 227.9L484.6 224.2L486.1 220.3L487.8 216.4" fill="none" stroke="#00ff00" stroke-width="5.6" stroke-linejoin="round"/><path d="M425.3 315.8L425.3 314.2L425.5 312.5L425.7 310.8L426.0 309.0L426.3 307.2L426.7 305.4L427.2 303.6L427.7 301.7L428.3 299.9L429.0 298.0L429.8 296.0L430.6 294.1L431.4 292.1L432.4 290.1L433.4 288.2L434.4 286.2L435.5 284.1L436.7 282.1L438.0 280.1L439.3 278.0L440.6 276.0L442.1 273.9L443.5 271.9L445.1 269.8L446.7 267.7L448.3 265.7L450.0 263.6L451.8 261.6L453.6 259.6L455.4 257.5L457.3 255.5L459.3 253.5L461.3 251.5L463.3 249.5L465.2 247.5L467.0 245.3L468.8 243.2L470.7 241.0L472.6 238.8L474.6 236.6L476.7 234.4L478.8 232.2L481.0 230.1L483.3 227.9L484.6 224.2L486.1 220.3L487.8 216.4" fill="none" stroke="#82aef0" stroke-width="4" stroke-dasharray="3.6 1.2"/><path d="M551.2 184.2L552.8 186.5L554.2 188.8L555.5 191.3L556.5 193.8L558.4 193.8L560.3 193.9L562.1 194.0L563.8 194.2L565.5 194.5L567.1 194.8L568.6 195.1L570.0 195.5L571.4 196.0L573.0 196.2L574.7 196.2L576.3 196.2L577.8 196.3L579.4 196.5L580.9 196.8L582.3 197.0L583.7 197.4L585.1 197.8L586.5 198.3L587.8 198.8L589.0 199.4L590.3 200.1L591.4 200.8L592.6 201.5L593.7 202.3L594.7 203.2L595.7 204.1L596.6 205.1L597.5 206.1L598.4 207.1L599.2 208.2L599.9 209.4L600.6 210.6L601.2 211.8L601.7 213.0L602.2 214.3L602.7 215.7L603.0 217.0L603.3 218.4L603.6 219.9L603.8 221.3L603.9 222.8L604.0 224.3" fill="none" stroke="#00ff00" stroke-width="5.6" stroke-linejoin="round"/><path d="M551.2 184.2L552.8 186.5L554.2 188.8L555.5 191.3L556.5 193.8L558.4 193.8L560.3 193.9L562.1 194.0L563.8 194.2L565.5 194.5L567.1 194.8L568.6 195.1L570.0 195.5L571.4 196.0L573.0 196.2L574.7 196.2L576.3 196.2L577.8 196.3L579.4 196.5L580.9 196.8L582.3 197.0L583.7 197.4L585.1 197.8L586.5 198.3L587.8 198.8L589.0 199.4L590.3 200.1L591.4 200.8L592.6 201.5L593.7 202.3L594.7 203.2L595.7 204.1L596.6 205.1L597.5 206.1L598.4 207.1L599.2 208.2L599.9 209.4L600.6 210.6L601.2 211.8L601.7 213.0L602.2 214.3L602.7 215.7L603.0 217.0L603.3 218.4L603.6 219.9L603.8 221.3L603.9 222.8L604.0 224.3" fill="none" stroke="#82aef0" stroke-width="4" stroke-dasharray="3.6 1.2"/><rect x="402.0" y="303.1" width="1" height="1.4" fill="#00ff00"/><rect x="404.8" y="307.6" width="1" height="1.4" fill="#00ff00"/><rect x="404.2" y="305.0" width="1" height="1.4" fill="#c04070"/><rect x="406.4" y="308.7" width="1" height="1.4" fill="#c04070"/><rect x="402.8" y="301.0" width="1" height="1.4" fill="#ff0000"/><rect x="403.0" y="299.5" width="1" height="1.4" fill="#00ff00"/><rect x="407.9" y="307.4" width="1" height="1.4" fill="#00ff00"/><rect x="403.1" y="297.8" width="1" height="1.4" fill="#00ff00"/><rect x="403.5" y="296.3" width="1" height="1.4" fill="#ff0000"/><rect x="405.7" y="299.8" width="1" height="1.4" fill="#00ff00"/><rect x="406.0" y="298.2" width="1" height="1.4" fill="#00ff00"/><rect x="408.8" y="302.8" width="1" height="1.4" fill="#00ff00"/><rect x="404.5" y="293.5" width="1" height="1.4" fill="#ff0000"/><rect x="406.0" y="296.0" width="1" height="1.4" fill="#c04070"/><rect x="407.4" y="295.9" width="1" height="1.4" fill="#00ff00"/><rect x="404.7" y="289.1" width="1" height="1.4" fill="#c04070"/><rect x="407.9" y="294.2" width="1" height="1.4" fill="#00ff00"/><rect x="410.3" y="295.5" width="1" height="1.4" fill="#c04070"/><rect x="408.8" y="290.5" width="1" height="1.4" fill="#00ff00"/><rect x="410.8" y="293.7" width="1" height="1.4" fill="#00ff00"/><rect x="409.0" y="288.1" width="1" height="1.4" fill="#c04070"/><rect x="411.0" y="291.3" width="1" height="1.4" fill="#00ff00"/><rect x="407.2" y="282.5" width="1" height="1.4" fill="#ff0000"/><rect x="411.4" y="289.1" width="1" height="1.4" fill="#00ff00"/><rect x="407.5" y="280.2" width="1" height="1.4" fill="#c04070"/><rect x="412.0" y="287.3" width="1" height="1.4" fill="#c04070"/><rect x="411.6" y="280.7" width="1" height="1.4" fill="#00ff00"/><rect x="409.9" y="274.8" width="1" height="1.4" fill="#00ff00"/><rect x="412.2" y="278.4" width="1" height="1.4" fill="#ff0000"/><rect x="415.4" y="283.5" width="1" height="1.4" fill="#ff0000"/><rect x="410.4" y="272.5" width="1" height="1.4" fill="#c04070"/><rect x="411.6" y="270.9" width="1" height="1.4" fill="#00ff00"/><rect x="415.0" y="276.3" width="1" height="1.4" fill="#c04070"/><rect x="416.6" y="278.8" width="1" height="1.4" fill="#c04070"/><rect x="414.8" y="272.6" width="1" height="1.4" fill="#ff0000"/><rect x="417.1" y="276.3" width="1" height="1.4" fill="#00ff00"/><rect x="414.3" y="268.3" width="1" height="1.4" fill="#00ff00"/><rect x="414.8" y="265.6" width="1" height="1.4" fill="#c04070"/><rect x="417.2" y="269.3" width="1" height="1.4" fill="#00ff00"/><rect x="415.7" y="263.5" width="1" height="1.4" fill="#c04070"/><rect x="421.0" y="271.6" width="1" height="1.4" fill="#00ff00"/><rect x="417.9" y="263.2" width="1" height="1.4" fill="#00ff00"/><rect x="420.1" y="266.7" width="1" height="1.4" fill="#00ff00"/><rect x="422.9" y="270.9" width="1" height="1.4" fill="#00ff00"/><rect x="418.8" y="260.9" width="1" height="1.4" fill="#00ff00"/><rect x="423.6" y="268.3" width="1" height="1.4" fill="#00ff00"/><rect x="422.1" y="262.2" width="1" height="1.4" fill="#ff0000"/><rect x="424.2" y="265.4" width="1" height="1.4" fill="#00ff00"/><rect x="424.5" y="258.1" width="1" height="1.4" fill="#c04070"/><rect x="424.0" y="253.3" width="1" height="1.4" fill="#00ff00"/><rect x="427.2" y="254.3" width="1" height="1.4" fill="#00ff00"/><rect x="430.8" y="259.7" width="1" height="1.4" fill="#00ff00"/><rect x="428.7" y="252.5" width="1" height="1.4" fill="#ff0000"/><rect x="431.3" y="256.4" width="1" height="1.4" fill="#c04070"/><rect x="430.1" y="246.2" width="1" height="1.4" fill="#00ff00"/><rect x="434.4" y="252.7" width="1" height="1.4" fill="#ff0000"/><rect x="430.9" y="243.2" width="1" height="1.4" fill="#00ff00"/><rect x="434.5" y="248.6" width="1" height="1.4" fill="#c04070"/><rect x="436.5" y="251.7" width="1" height="1.4" fill="#00ff00"/><rect x="434.8" y="244.8" width="1" height="1.4" fill="#ff0000"/><rect x="434.9" y="240.7" width="1" height="1.4" fill="#c04070"/><rect x="439.5" y="247.6" width="1" height="1.4" fill="#ff0000"/><rect x="436.8" y="239.2" width="1" height="1.4" fill="#00ff00"/><rect x="438.6" y="237.5" width="1" height="1.4" fill="#ff0000"/><rect x="440.0" y="239.5" width="1" height="1.4" fill="#ff0000"/><rect x="439.9" y="234.9" width="1" height="1.4" fill="#ff0000"/><rect x="442.6" y="238.9" width="1" height="1.4" fill="#c04070"/><rect x="445.2" y="233.9" width="1" height="1.4" fill="#00ff00"/><rect x="446.4" y="226.7" width="1" height="1.4" fill="#00ff00"/><rect x="451.8" y="234.7" width="1" height="1.4" fill="#c04070"/><rect x="451.1" y="229.3" width="1" height="1.4" fill="#ff0000"/><rect x="452.7" y="231.6" width="1" height="1.4" fill="#00ff00"/><rect x="454.5" y="225.5" width="1" height="1.4" fill="#ff0000"/><rect x="453.7" y="219.8" width="1" height="1.4" fill="#c04070"/><rect x="458.6" y="226.9" width="1" height="1.4" fill="#00ff00"/><rect x="460.2" y="224.8" width="1" height="1.4" fill="#c04070"/><rect x="457.2" y="215.7" width="1" height="1.4" fill="#00ff00"/><rect x="461.7" y="222.3" width="1" height="1.4" fill="#00ff00"/><rect x="464.4" y="221.5" width="1" height="1.4" fill="#00ff00"/><rect x="461.7" y="212.9" width="1" height="1.4" fill="#c04070"/><rect x="464.3" y="216.6" width="1" height="1.4" fill="#c04070"/><rect x="463.3" y="210.4" width="1" height="1.4" fill="#ff0000"/><rect x="465.4" y="213.4" width="1" height="1.4" fill="#c04070"/><rect x="467.5" y="216.4" width="1" height="1.4" fill="#00ff00"/><rect x="464.8" y="207.8" width="1" height="1.4" fill="#00ff00"/><rect x="469.2" y="214.0" width="1" height="1.4" fill="#00ff00"/><rect x="470.3" y="210.8" width="1" height="1.4" fill="#00ff00"/><rect x="473.0" y="209.7" width="1" height="1.4" fill="#00ff00"/><rect x="472.7" y="204.1" width="1" height="1.4" fill="#c04070"/><rect x="476.3" y="203.8" width="1" height="1.4" fill="#c04070"/><rect x="474.7" y="195.8" width="1" height="1.4" fill="#ff0000"/><rect x="477.2" y="199.3" width="1" height="1.4" fill="#00ff00"/><rect x="550.4" y="167.8" width="1" height="1.4" fill="#00ff00"/><rect x="545.5" y="161.3" width="1" height="1.4" fill="#00ff00"/><rect x="548.8" y="165.6" width="1" height="1.4" fill="#00ff00"/><rect x="547.9" y="164.5" width="1" height="1.4" fill="#00ff00"/><rect x="552.1" y="170.0" width="1" height="1.4" fill="#00ff00"/><rect x="553.7" y="172.6" width="1" height="1.4" fill="#ff0000"/><rect x="550.4" y="168.8" width="1" height="1.4" fill="#00ff00"/><rect x="551.6" y="170.4" width="1" height="1.4" fill="#ff0000"/><rect x="551.5" y="168.4" width="1" height="1.4" fill="#c04070"/><rect x="557.8" y="174.4" width="1" height="1.4" fill="#ff0000"/><rect x="555.7" y="169.4" width="1" height="1.4" fill="#ff0000"/><rect x="557.3" y="171.5" width="1" height="1.4" fill="#00ff00"/><rect x="557.0" y="169.0" width="1" height="1.4" fill="#00ff00"/><rect x="558.5" y="171.0" width="1" height="1.4" fill="#c04070"/><rect x="560.4" y="171.6" width="1" height="1.4" fill="#00ff00"/><rect x="562.7" y="174.7" width="1" height="1.4" fill="#00ff00"/><rect x="559.7" y="168.6" width="1" height="1.4" fill="#00ff00"/><rect x="562.3" y="170.4" width="1" height="1.4" fill="#00ff00"/><rect x="563.4" y="171.9" width="1" height="1.4" fill="#00ff00"/><rect x="566.2" y="175.7" width="1" height="1.4" fill="#ff0000"/><rect x="563.4" y="170.2" width="1" height="1.4" fill="#00ff00"/><rect x="564.7" y="172.0" width="1" height="1.4" fill="#c04070"/><rect x="564.1" y="169.6" width="1" height="1.4" fill="#ff0000"/><rect x="567.4" y="174.1" width="1" height="1.4" fill="#ff0000"/><rect x="570.1" y="176.2" width="1" height="1.4" fill="#c04070"/><rect x="567.4" y="171.2" width="1" height="1.4" fill="#ff0000"/><rect x="569.9" y="174.6" width="1" height="1.4" fill="#c04070"/><rect x="570.7" y="174.2" width="1" height="1.4" fill="#00ff00"/><rect x="573.0" y="173.2" width="1" height="1.4" fill="#ff0000"/><rect x="575.1" y="174.2" width="1" height="1.4" fill="#00ff00"/><rect x="578.1" y="176.5" width="1" height="1.4" fill="#00ff00"/><rect x="579.7" y="175.3" width="1" height="1.4" fill="#00ff00"/><rect x="581.1" y="175.6" width="1" height="1.4" fill="#ff0000"/><rect x="581.8" y="175.1" width="1" height="1.4" fill="#c04070"/><rect x="580.2" y="171.6" width="1" height="1.4" fill="#ff0000"/><rect x="582.7" y="174.9" width="1" height="1.4" fill="#00ff00"/><rect x="586.9" y="179.2" width="1" height="1.4" fill="#c04070"/><rect x="583.7" y="173.7" width="1" height="1.4" fill="#ff0000"/><rect x="588.2" y="179.7" width="1" height="1.4" fill="#c04070"/><rect x="585.0" y="174.3" width="1" height="1.4" fill="#ff0000"/><rect x="586.3" y="176.1" width="1" height="1.4" fill="#c04070"/><rect x="589.3" y="180.0" width="1" height="1.4" fill="#c04070"/><rect x="588.8" y="178.3" width="1" height="1.4" fill="#ff0000"/><rect x="589.9" y="179.7" width="1" height="1.4" fill="#00ff00"/><rect x="589.8" y="178.7" width="1" height="1.4" fill="#00ff00"/><rect x="591.1" y="179.4" width="1" height="1.4" fill="#c04070"/><rect x="592.3" y="181.0" width="1" height="1.4" fill="#c04070"/><rect x="591.9" y="179.7" width="1" height="1.4" fill="#c04070"/><rect x="593.7" y="182.0" width="1" height="1.4" fill="#00ff00"/><rect x="590.5" y="177.2" width="1" height="1.4" fill="#c04070"/><rect x="593.3" y="180.8" width="1" height="1.4" fill="#00ff00"/><rect x="590.9" y="177.1" width="1" height="1.4" fill="#c04070"/><rect x="594.2" y="181.4" width="1" height="1.4" fill="#00ff00"/><rect x="596.0" y="183.6" width="1" height="1.4" fill="#00ff00"/><rect x="593.9" y="180.4" width="1" height="1.4" fill="#00ff00"/><rect x="593.9" y="179.9" width="1" height="1.4" fill="#c04070"/><rect x="597.9" y="185.1" width="1" height="1.4" fill="#c04070"/><rect x="598.7" y="185.2" width="1" height="1.4" fill="#c04070"/><rect x="597.1" y="183.2" width="1" height="1.4" fill="#c04070"/><rect x="599.8" y="186.5" width="1" height="1.4" fill="#ff0000"/><rect x="601.5" y="188.7" width="1" height="1.4" fill="#00ff00"/><rect x="597.7" y="183.9" width="1" height="1.4" fill="#00ff00"/><rect x="599.4" y="186.0" width="1" height="1.4" fill="#c04070"/><rect x="597.5" y="183.6" width="1" height="1.4" fill="#ff0000"/><rect x="600.6" y="187.6" width="1" height="1.4" fill="#c04070"/><rect x="598.4" y="185.0" width="1" height="1.4" fill="#c04070"/><rect x="601.4" y="188.7" width="1" height="1.4" fill="#ff0000"/><rect x="603.7" y="191.5" width="1" height="1.4" fill="#00ff00"/><rect x="599.1" y="186.1" width="1" height="1.4" fill="#ff0000"/><rect x="599.8" y="187.3" width="1" height="1.4" fill="#ff0000"/><rect x="602.3" y="190.4" width="1" height="1.4" fill="#00ff00"/><rect x="605.3" y="194.2" width="1" height="1.4" fill="#00ff00"/><rect x="600.6" y="188.6" width="1" height="1.4" fill="#ff0000"/><rect x="603.8" y="192.7" width="1" height="1.4" fill="#c04070"/><rect x="605.7" y="195.0" width="1" height="1.4" fill="#00ff00"/><rect x="605.5" y="195.2" width="1" height="1.4" fill="#c04070"/><rect x="603.4" y="193.2" width="1" height="1.4" fill="#c04070"/><rect x="601.3" y="191.2" width="1" height="1.4" fill="#ff0000"/><rect x="605.4" y="196.3" width="1" height="1.4" fill="#00ff00"/><rect x="602.9" y="194.6" width="1" height="1.4" fill="#00ff00"/><rect x="604.7" y="197.0" width="1" height="1.4" fill="#00ff00"/><rect x="602.4" y="195.0" width="1" height="1.4" fill="#00ff00"/><rect x="608.7" y="202.8" width="1" height="1.4" fill="#00ff00"/><rect x="603.4" y="197.1" width="1" height="1.4" fill="#ff0000"/><rect x="605.5" y="199.7" width="1" height="1.4" fill="#00ff00"/><rect x="608.2" y="203.1" width="1" height="1.4" fill="#c04070"/><rect x="603.3" y="198.0" width="1" height="1.4" fill="#ff0000"/><rect x="605.7" y="201.0" width="1" height="1.4" fill="#ff0000"/><rect x="608.6" y="204.7" width="1" height="1.4" fill="#00ff00"/><rect x="603.2" y="199.1" width="1" height="1.4" fill="#c04070"/><rect x="605.9" y="202.4" width="1" height="1.4" fill="#c04070"/><rect x="603.1" y="200.1" width="1" height="1.4" fill="#00ff00"/><rect x="608.9" y="207.3" width="1" height="1.4" fill="#00ff00"/><rect x="604.8" y="204.8" width="1" height="1.4" fill="#00ff00"/><rect x="609.1" y="210.2" width="1" height="1.4" fill="#00ff00"/><path d="M496 212L503 229.5L537.5 213L533 203Z" fill="#ff0000"/><path d="M505.5 222.5L533.5 209.5L531.5 205L503.5 216Z" fill="#000"/><path d="M512 219L514 212M518 216.5L520 210" stroke="#ff0000" stroke-width="1"/><path d="M473.5 193.0L476.6 196.8L480.4 200.3L484.7 203.3L489.6 205.9L494.8 208.0L500.4 209.4L506.1 210.4L512.0 210.7L517.9 210.4L523.7 209.5L529.2 208.0L534.5 205.9L539.3 203.3L543.7 200.3L547.4 196.8L550.5 192.9L552.8 188.8L554.5 184.4L555.4 179.9L555.6 175.4L555.2 171.0L554.0 166.7L552.2 162.6L549.7 158.7L546.5 155.2L542.7 151.9L538.3 149.1L533.6 146.7L528.5 144.8L523.1 143.4L517.6 142.6L511.9 142.4L506.3 142.7L500.8 143.5L495.4 144.9L490.4 146.8L485.6 149.2L481.3 152.1L477.5 155.3L474.3 159.0L471.7 162.9L469.7 167.1L468.5 171.4L468.0 175.8L468.3 180.3L469.3 184.7L471.0 189.0Z" fill="#ff0000"/><path d="M473.5 193.0L476.6 196.8L476.6 191.5L473.4 187.7Z" fill="#00ff00" stroke="#00ff00" stroke-width="0.5"/><path d="M476.6 196.8L480.4 200.3L480.4 195.0L476.6 191.5Z" fill="#00ff00" stroke="#00ff00" stroke-width="0.5"/><path d="M480.4 200.3L484.7 203.3L484.7 198.0L480.4 195.0Z" fill="#00ff00" stroke="#00ff00" stroke-width="0.5"/><path d="M484.7 203.3L489.6 205.9L489.6 200.6L484.7 198.0Z" fill="#00ff00" stroke="#00ff00" stroke-width="0.5"/><path d="M489.6 205.9L494.8 208.0L494.8 202.6L489.6 200.6Z" fill="#00ff00" stroke="#00ff00" stroke-width="0.5"/><path d="M494.8 208.0L500.4 209.4L500.4 204.1L494.8 202.6Z" fill="#00ff00" stroke="#00ff00" stroke-width="0.5"/><path d="M500.4 209.4L506.1 210.4L506.2 205.0L500.4 204.1Z" fill="#00ff00" stroke="#00ff00" stroke-width="0.5"/><path d="M506.1 210.4L512.0 210.7L512.1 205.3L506.2 205.0Z" fill="#00ff00" stroke="#00ff00" stroke-width="0.5"/><path d="M512.0 210.7L517.9 210.4L518.0 205.0L512.1 205.3Z" fill="#00ff00" stroke="#00ff00" stroke-width="0.5"/><path d="M517.9 210.4L523.7 209.5L523.8 204.1L518.0 205.0Z" fill="#00ff00" stroke="#00ff00" stroke-width="0.5"/><path d="M523.7 209.5L529.2 208.0L529.4 202.6L523.8 204.1Z" fill="#00ff00" stroke="#00ff00" stroke-width="0.5"/><path d="M529.2 208.0L534.5 205.9L534.6 200.6L529.4 202.6Z" fill="#00ff00" stroke="#00ff00" stroke-width="0.5"/><path d="M534.5 205.9L539.3 203.3L539.5 198.0L534.6 200.6Z" fill="#00ff00" stroke="#00ff00" stroke-width="0.5"/><path d="M539.3 203.3L543.7 200.3L543.9 194.9L539.5 198.0Z" fill="#00ff00" stroke="#00ff00" stroke-width="0.5"/><path d="M543.7 200.3L547.4 196.8L547.7 191.5L543.9 194.9Z" fill="#00ff00" stroke="#00ff00" stroke-width="0.5"/><path d="M547.4 196.8L550.5 192.9L550.7 187.6L547.7 191.5Z" fill="#00ff00" stroke="#00ff00" stroke-width="0.5"/><path d="M550.5 192.9L552.8 188.8L553.1 183.4L550.7 187.6Z" fill="#00ff00" stroke="#00ff00" stroke-width="0.5"/><path d="M552.8 188.8L554.5 184.4L554.7 179.0L553.1 183.4Z" fill="#00ff00" stroke="#00ff00" stroke-width="0.5"/><path d="M554.5 184.4L555.4 179.9L555.7 174.6L554.7 179.0Z" fill="#00ff00" stroke="#00ff00" stroke-width="0.5"/><path d="M555.4 179.9L555.6 175.4L555.9 170.1L555.7 174.6Z" fill="#00ff00" stroke="#00ff00" stroke-width="0.5"/><path d="M555.6 175.4L555.2 171.0L555.4 165.6L555.9 170.1Z" fill="#00ff00" stroke="#00ff00" stroke-width="0.5"/><path d="M555.2 171.0L554.0 166.7L554.2 161.3L555.4 165.6Z" fill="#00ff00" stroke="#00ff00" stroke-width="0.5"/><path d="M554.0 166.7L552.2 162.6L552.4 157.2L554.2 161.3Z" fill="#00ff00" stroke="#00ff00" stroke-width="0.5"/><path d="M552.2 162.6L549.7 158.7L549.9 153.4L552.4 157.2Z" fill="#00ff00" stroke="#00ff00" stroke-width="0.5"/><path d="M549.7 158.7L546.5 155.2L546.7 149.8L549.9 153.4Z" fill="#00ff00" stroke="#00ff00" stroke-width="0.5"/><path d="M546.5 155.2L542.7 151.9L542.9 146.6L546.7 149.8Z" fill="#00ff00" stroke="#00ff00" stroke-width="0.5"/><path d="M542.7 151.9L538.3 149.1L538.5 143.7L542.9 146.6Z" fill="#00ff00" stroke="#00ff00" stroke-width="0.5"/><path d="M538.3 149.1L533.6 146.7L533.7 141.3L538.5 143.7Z" fill="#00ff00" stroke="#00ff00" stroke-width="0.5"/><path d="M533.6 146.7L528.5 144.8L528.6 139.4L533.7 141.3Z" fill="#00ff00" stroke="#00ff00" stroke-width="0.5"/><path d="M528.5 144.8L523.1 143.4L523.2 138.1L528.6 139.4Z" fill="#00ff00" stroke="#00ff00" stroke-width="0.5"/><path d="M523.1 143.4L517.6 142.6L517.7 137.3L523.2 138.1Z" fill="#00ff00" stroke="#00ff00" stroke-width="0.5"/><path d="M517.6 142.6L511.9 142.4L512.0 137.0L517.7 137.3Z" fill="#00ff00" stroke="#00ff00" stroke-width="0.5"/><path d="M511.9 142.4L506.3 142.7L506.4 137.3L512.0 137.0Z" fill="#00ff00" stroke="#00ff00" stroke-width="0.5"/><path d="M506.3 142.7L500.8 143.5L500.8 138.1L506.4 137.3Z" fill="#00ff00" stroke="#00ff00" stroke-width="0.5"/><path d="M500.8 143.5L495.4 144.9L495.4 139.5L500.8 138.1Z" fill="#00ff00" stroke="#00ff00" stroke-width="0.5"/><path d="M495.4 144.9L490.4 146.8L490.3 141.5L495.4 139.5Z" fill="#00ff00" stroke="#00ff00" stroke-width="0.5"/><path d="M490.4 146.8L485.6 149.2L485.6 143.9L490.3 141.5Z" fill="#00ff00" stroke="#00ff00" stroke-width="0.5"/><path d="M485.6 149.2L481.3 152.1L481.3 146.7L485.6 143.9Z" fill="#00ff00" stroke="#00ff00" stroke-width="0.5"/><path d="M481.3 152.1L477.5 155.3L477.5 150.0L481.3 146.7Z" fill="#00ff00" stroke="#00ff00" stroke-width="0.5"/><path d="M477.5 155.3L474.3 159.0L474.2 153.6L477.5 150.0Z" fill="#00ff00" stroke="#00ff00" stroke-width="0.5"/><path d="M474.3 159.0L471.7 162.9L471.6 157.5L474.2 153.6Z" fill="#00ff00" stroke="#00ff00" stroke-width="0.5"/><path d="M471.7 162.9L469.7 167.1L469.6 161.7L471.6 157.5Z" fill="#00ff00" stroke="#00ff00" stroke-width="0.5"/><path d="M469.7 167.1L468.5 171.4L468.4 166.1L469.6 161.7Z" fill="#00ff00" stroke="#00ff00" stroke-width="0.5"/><path d="M468.5 171.4L468.0 175.8L467.9 170.5L468.4 166.1Z" fill="#00ff00" stroke="#00ff00" stroke-width="0.5"/><path d="M468.0 175.8L468.3 180.3L468.2 175.0L467.9 170.5Z" fill="#00ff00" stroke="#00ff00" stroke-width="0.5"/><path d="M468.3 180.3L469.3 184.7L469.2 179.4L468.2 175.0Z" fill="#00ff00" stroke="#00ff00" stroke-width="0.5"/><path d="M469.3 184.7L471.0 189.0L470.9 183.6L469.2 179.4Z" fill="#00ff00" stroke="#00ff00" stroke-width="0.5"/><path d="M471.0 189.0L473.5 193.0L473.4 187.7L470.9 183.6Z" fill="#00ff00" stroke="#00ff00" stroke-width="0.5"/><path d="M473.4 187.7L476.6 191.5L480.4 195.0L484.7 198.0L489.6 200.6L494.8 202.6L500.4 204.1L506.2 205.0L512.1 205.3L518.0 205.0L523.8 204.1L529.4 202.6L534.6 200.6L539.5 198.0L543.9 194.9L547.7 191.5L550.7 187.6L553.1 183.4L554.7 179.0L555.7 174.6L555.9 170.1L555.4 165.6L554.2 161.3L552.4 157.2L549.9 153.4L546.7 149.8L542.9 146.6L538.5 143.7L533.7 141.3L528.6 139.4L523.2 138.1L517.7 137.3L512.0 137.0L506.4 137.3L500.8 138.1L495.4 139.5L490.3 141.5L485.6 143.9L481.3 146.7L477.5 150.0L474.2 153.6L471.6 157.5L469.6 161.7L468.4 166.1L467.9 170.5L468.2 175.0L469.2 179.4L470.9 183.6Z" fill="#00ff00"/><circle cx="476.9" cy="195.7" r="2.3" fill="#82aef0"/><circle cx="487.3" cy="203.2" r="2.3" fill="#82aef0"/><circle cx="500.2" cy="207.8" r="2.3" fill="#82aef0"/><circle cx="514.4" cy="209.0" r="2.3" fill="#82aef0"/><circle cx="528.4" cy="206.6" r="2.3" fill="#82aef0"/><circle cx="540.7" cy="201.0" r="2.3" fill="#82aef0"/><circle cx="549.9" cy="192.6" r="2.3" fill="#82aef0"/><circle cx="475.0" cy="155.1" r="2.3" fill="#82aef0"/><circle cx="469.2" cy="164.8" r="2.3" fill="#82aef0"/><circle cx="467.4" cy="175.5" r="2.3" fill="#82aef0"/><circle cx="470.0" cy="186.2" r="2.3" fill="#82aef0"/><path d="M477.8 185.4L480.0 188.1L482.5 190.7L485.4 193.0L488.6 195.0L492.1 196.8L495.8 198.3L499.7 199.5L503.8 200.3L507.9 200.8L512.1 201.0L516.3 200.8L520.4 200.3L524.5 199.5L528.4 198.3L532.1 196.8L535.6 195.0L538.8 192.9L541.7 190.6L544.3 188.1L546.5 185.3L548.3 182.4L549.6 179.4L550.6 176.3L551.1 173.1L551.3 169.9L551.0 166.7L550.3 163.6L549.2 160.6L547.7 157.7L545.8 155.0L543.5 152.4L540.9 150.0L538.0 147.8L534.8 145.8L531.4 144.2L527.7 142.8L524.0 141.7L520.0 140.9L516.1 140.5L512.0 140.3L508.0 140.5L504.0 141.0L500.1 141.8L496.3 142.9L492.7 144.3L489.3 146.0L486.1 147.9L483.2 150.1L480.7 152.5L478.4 155.1L476.5 157.9L475.0 160.8L473.8 163.9L473.1 167.0L472.8 170.1L473.0 173.3L473.5 176.5L474.5 179.5L475.9 182.5Z" fill="#82aef0"/><circle cx="480.5" cy="189.9" r="2.6" fill="#82aef0"/><circle cx="489.8" cy="196.6" r="2.6" fill="#82aef0"/><circle cx="501.5" cy="200.7" r="2.6" fill="#82aef0"/><circle cx="514.2" cy="201.7" r="2.6" fill="#82aef0"/><circle cx="526.8" cy="199.6" r="2.6" fill="#82aef0"/><circle cx="537.8" cy="194.6" r="2.6" fill="#82aef0"/><circle cx="546.2" cy="187.1" r="2.6" fill="#82aef0"/><circle cx="551.0" cy="178.0" r="2.6" fill="#82aef0"/><circle cx="552.0" cy="168.3" r="2.6" fill="#82aef0"/><circle cx="549.3" cy="158.9" r="2.6" fill="#82aef0"/><circle cx="542.9" cy="150.7" r="2.6" fill="#82aef0"/><circle cx="533.6" cy="144.4" r="2.6" fill="#82aef0"/><circle cx="522.2" cy="140.6" r="2.6" fill="#82aef0"/><circle cx="510.0" cy="139.7" r="2.6" fill="#82aef0"/><circle cx="497.9" cy="141.6" r="2.6" fill="#82aef0"/><circle cx="487.1" cy="146.4" r="2.6" fill="#82aef0"/><circle cx="478.7" cy="153.4" r="2.6" fill="#82aef0"/><circle cx="473.5" cy="162.1" r="2.6" fill="#82aef0"/><circle cx="471.9" cy="171.8" r="2.6" fill="#82aef0"/><circle cx="474.3" cy="181.3" r="2.6" fill="#82aef0"/><circle cx="475.7" cy="186.7" r="1.2" fill="#00ff00"/><circle cx="483.9" cy="194.7" r="1.2" fill="#00ff00"/><circle cx="494.9" cy="200.3" r="1.2" fill="#00ff00"/><circle cx="507.6" cy="203.0" r="1.2" fill="#00ff00"/><circle cx="520.9" cy="202.5" r="1.2" fill="#00ff00"/><circle cx="533.3" cy="198.7" r="1.2" fill="#00ff00"/><circle cx="543.4" cy="192.2" r="1.2" fill="#00ff00"/><circle cx="550.3" cy="183.5" r="1.2" fill="#00ff00"/><circle cx="553.3" cy="173.6" r="1.2" fill="#00ff00"/><circle cx="552.4" cy="163.6" r="1.2" fill="#00ff00"/><circle cx="547.7" cy="154.4" r="1.2" fill="#00ff00"/><circle cx="539.5" cy="146.8" r="1.2" fill="#00ff00"/><circle cx="528.6" cy="141.6" r="1.2" fill="#00ff00"/><circle cx="516.3" cy="139.1" r="1.2" fill="#00ff00"/><circle cx="503.5" cy="139.7" r="1.2" fill="#00ff00"/><circle cx="491.6" cy="143.2" r="1.2" fill="#00ff00"/><circle cx="481.6" cy="149.3" r="1.2" fill="#00ff00"/><circle cx="474.4" cy="157.6" r="1.2" fill="#00ff00"/><circle cx="470.9" cy="167.1" r="1.2" fill="#00ff00"/><circle cx="471.3" cy="177.2" r="1.2" fill="#00ff00"/><path d="M483.0 177.7L484.8 180.0L487.0 182.1L489.5 184.1L492.2 185.8L495.2 187.3L498.3 188.6L501.7 189.6L505.1 190.3L508.6 190.7L512.2 190.9L515.7 190.7L519.2 190.3L522.7 189.6L526.0 188.6L529.1 187.3L532.1 185.8L534.8 184.0L537.3 182.1L539.5 179.9L541.4 177.6L542.9 175.2L544.2 172.6L545.0 170.0L545.5 167.3L545.6 164.6L545.4 161.9L544.8 159.3L543.8 156.7L542.5 154.2L540.9 151.8L538.9 149.6L536.7 147.6L534.2 145.7L531.5 144.1L528.6 142.7L525.5 141.5L522.3 140.5L519.0 139.9L515.5 139.5L512.1 139.4L508.7 139.5L505.3 139.9L501.9 140.6L498.7 141.6L495.6 142.7L492.7 144.2L490.0 145.8L487.6 147.7L485.3 149.8L483.4 152.0L481.8 154.3L480.5 156.8L479.6 159.4L479.0 162.1L478.7 164.7L478.9 167.4L479.3 170.1L480.2 172.7L481.4 175.3Z" fill="#0e3ca8"/><path d="M504.9 174.0L491.2 176.2L494.2 179.1L505.7 174.8Z" fill="#000" opacity="0.75"/><path d="M506.5 175.3L497.2 181.1L501.3 183.0L507.6 175.9Z" fill="#000" opacity="0.75"/><path d="M508.7 176.1L505.0 184.1L509.8 184.7L509.9 176.3Z" fill="#ff0000" opacity="0.75"/><path d="M511.0 176.3L513.7 184.8L518.5 184.1L512.3 176.2Z" fill="#ff0000" opacity="0.75"/><path d="M513.3 175.9L522.3 183.1L526.5 181.2L514.5 175.4Z" fill="#ff0000" opacity="0.75"/><path d="M515.3 174.8L529.5 179.3L532.6 176.4L516.1 174.1Z" fill="#ff0000" opacity="0.75"/><path d="M516.7 173.4L534.5 173.8L536.2 170.3L517.1 172.4Z" fill="#ff0000" opacity="0.75"/><path d="M517.3 171.6L536.8 167.3L536.8 163.6L517.3 170.6Z" fill="#ff0000" opacity="0.75"/><path d="M517.1 169.8L536.1 160.7L534.5 157.2L516.7 168.9Z" fill="#00ff00" opacity="0.75"/><path d="M516.1 168.2L532.5 154.7L529.4 151.9L515.3 167.4Z" fill="#00ff00" opacity="0.75"/><path d="M514.5 166.9L526.5 150.0L522.4 148.2L513.4 166.4Z" fill="#00ff00" opacity="0.75"/><path d="M512.4 166.1L518.7 147.1L514.1 146.5L511.1 165.9Z" fill="#00ff00" opacity="0.75"/><path d="M510.1 165.9L510.2 146.5L505.6 147.1L508.8 166.1Z" fill="#00ff00" opacity="0.75"/><path d="M507.8 166.4L501.9 148.1L497.8 149.8L506.7 166.8Z" fill="#00ff00" opacity="0.75"/><path d="M505.9 167.4L494.8 151.7L491.7 154.5L505.0 168.1Z" fill="#00ff00" opacity="0.75"/><path d="M504.5 168.8L489.7 157.0L488.0 160.5L504.0 169.7Z" fill="#00ff00" opacity="0.75"/><path d="M503.8 170.5L487.2 163.4L487.1 167.1L503.8 171.5Z" fill="#000" opacity="0.75"/><path d="M504.0 172.3L487.7 170.1L489.3 173.6L504.4 173.3Z" fill="#000" opacity="0.75"/><path d="M500.1 172.2L501.3 173.6L502.8 174.8L504.5 175.8L506.5 176.6L508.5 177.2L510.7 177.5L512.8 177.5L515.0 177.3L517.1 176.8L519.1 176.1L520.9 175.2L522.4 174.0L523.7 172.6L524.8 171.2L525.5 169.6L525.9 167.9L525.9 166.3L525.6 164.6L525.0 163.0L524.0 161.5L522.8 160.1L521.3 158.9L519.6 157.9L517.7 157.2L515.6 156.6L513.5 156.3L511.4 156.3L509.2 156.5L507.2 157.0L505.2 157.7L503.4 158.6L501.9 159.8L500.6 161.1L499.5 162.5L498.8 164.1L498.4 165.8L498.3 167.4L498.6 169.1L499.2 170.7Z" fill="none" stroke="#0e3ca8" stroke-width="1.6"/><path d="M494.1 174.9L495.9 177.0L498.1 178.8L500.7 180.4L503.6 181.6L506.7 182.4L509.9 182.9L513.2 183.0L516.5 182.6L519.6 181.9L522.6 180.8L525.3 179.3L527.6 177.6L529.6 175.6L531.1 173.3L532.2 171.0L532.8 168.5L532.8 166.0L532.3 163.5L531.4 161.1L530.0 158.9L528.1 156.8L525.9 155.0L523.3 153.5L520.4 152.4L517.4 151.5L514.2 151.1L511.0 151.1L507.8 151.4L504.7 152.1L501.8 153.2L499.2 154.6L496.8 156.3L494.8 158.2L493.2 160.4L492.1 162.8L491.5 165.2L491.4 167.7L491.8 170.2L492.7 172.6Z" fill="none" stroke="#0e3ca8" stroke-width="1.6"/><rect x="524.6" y="152.6" width="1.5" height="1.5" fill="#ff0000"/><rect x="539.5" y="157.9" width="1.5" height="1.5" fill="#00ff00"/><rect x="522.2" y="150.3" width="1.5" height="1.5" fill="#000"/><rect x="522.7" y="159.1" width="1.5" height="1.5" fill="#0e3ca8"/><rect x="495.3" y="152.0" width="1.5" height="1.5" fill="#ff0000"/><rect x="519.1" y="169.3" width="1.5" height="1.5" fill="#00ff00"/><rect x="505.1" y="160.4" width="1.5" height="1.5" fill="#000"/><rect x="494.4" y="178.4" width="1.5" height="1.5" fill="#0e3ca8"/><rect x="483.7" y="171.6" width="1.5" height="1.5" fill="#ff0000"/><rect x="519.7" y="147.2" width="1.5" height="1.5" fill="#00ff00"/><rect x="502.4" y="170.0" width="1.5" height="1.5" fill="#000"/><rect x="498.4" y="177.9" width="1.5" height="1.5" fill="#0e3ca8"/><rect x="518.1" y="173.7" width="1.5" height="1.5" fill="#ff0000"/><rect x="517.1" y="163.5" width="1.5" height="1.5" fill="#00ff00"/><rect x="494.4" y="157.9" width="1.5" height="1.5" fill="#000"/><rect x="515.6" y="148.4" width="1.5" height="1.5" fill="#0e3ca8"/><rect x="512.7" y="148.5" width="1.5" height="1.5" fill="#ff0000"/><rect x="525.3" y="176.7" width="1.5" height="1.5" fill="#00ff00"/><rect x="485.6" y="175.8" width="1.5" height="1.5" fill="#000"/><rect x="505.2" y="144.5" width="1.5" height="1.5" fill="#0e3ca8"/><rect x="518.7" y="176.7" width="1.5" height="1.5" fill="#ff0000"/><rect x="502.9" y="175.0" width="1.5" height="1.5" fill="#00ff00"/><rect x="538.3" y="166.7" width="1.5" height="1.5" fill="#000"/><rect x="539.3" y="168.6" width="1.5" height="1.5" fill="#0e3ca8"/><rect x="485.7" y="155.3" width="1.5" height="1.5" fill="#ff0000"/><rect x="512.3" y="165.2" width="1.5" height="1.5" fill="#00ff00"/><rect x="539.1" y="157.4" width="1.5" height="1.5" fill="#000"/><rect x="541.7" y="167.4" width="1.5" height="1.5" fill="#0e3ca8"/><rect x="514.0" y="158.6" width="1.5" height="1.5" fill="#ff0000"/><rect x="528.3" y="181.1" width="1.5" height="1.5" fill="#00ff00"/><rect x="519.8" y="168.1" width="1.5" height="1.5" fill="#000"/><rect x="496.3" y="145.9" width="1.5" height="1.5" fill="#0e3ca8"/><rect x="517.1" y="171.7" width="1.5" height="1.5" fill="#ff0000"/><rect x="506.2" y="170.5" width="1.5" height="1.5" fill="#00ff00"/><rect x="514.0" y="185.5" width="1.5" height="1.5" fill="#000"/><rect x="534.1" y="161.3" width="1.5" height="1.5" fill="#0e3ca8"/><rect x="506.9" y="155.5" width="1.5" height="1.5" fill="#ff0000"/><rect x="513.7" y="156.5" width="1.5" height="1.5" fill="#00ff00"/><rect x="522.4" y="164.5" width="1.5" height="1.5" fill="#000"/><rect x="520.5" y="173.2" width="1.5" height="1.5" fill="#0e3ca8"/><rect x="490.0" y="150.0" width="1.5" height="1.5" fill="#ff0000"/><rect x="496.0" y="162.2" width="1.5" height="1.5" fill="#00ff00"/><rect x="525.8" y="166.1" width="1.5" height="1.5" fill="#000"/><rect x="516.4" y="143.9" width="1.5" height="1.5" fill="#0e3ca8"/><rect x="503.6" y="167.9" width="1.5" height="1.5" fill="#ff0000"/><rect x="519.7" y="173.7" width="1.5" height="1.5" fill="#00ff00"/><rect x="534.8" y="175.3" width="1.5" height="1.5" fill="#000"/><rect x="503.1" y="175.2" width="1.5" height="1.5" fill="#0e3ca8"/><rect x="516.6" y="158.7" width="1.5" height="1.5" fill="#ff0000"/><rect x="518.0" y="154.3" width="1.5" height="1.5" fill="#00ff00"/><rect x="529.9" y="161.5" width="1.5" height="1.5" fill="#000"/><rect x="538.8" y="155.4" width="1.5" height="1.5" fill="#0e3ca8"/><rect x="490.6" y="159.3" width="1.5" height="1.5" fill="#ff0000"/><rect x="511.1" y="174.6" width="1.5" height="1.5" fill="#00ff00"/><rect x="489.1" y="152.0" width="1.5" height="1.5" fill="#000"/><rect x="514.3" y="176.2" width="1.5" height="1.5" fill="#0e3ca8"/><rect x="486.6" y="167.7" width="1.5" height="1.5" fill="#ff0000"/><rect x="499.1" y="166.8" width="1.5" height="1.5" fill="#00ff00"/><rect x="522.9" y="144.9" width="1.5" height="1.5" fill="#000"/><rect x="504.6" y="178.6" width="1.5" height="1.5" fill="#0e3ca8"/><rect x="506.5" y="166.0" width="1.5" height="1.5" fill="#ff0000"/><rect x="508.7" y="153.8" width="1.5" height="1.5" fill="#00ff00"/><rect x="499.5" y="158.3" width="1.5" height="1.5" fill="#000"/><rect x="528.9" y="177.2" width="1.5" height="1.5" fill="#0e3ca8"/><rect x="508.0" y="155.6" width="1.5" height="1.5" fill="#ff0000"/><rect x="515.1" y="170.3" width="1.5" height="1.5" fill="#00ff00"/><rect x="491.6" y="158.0" width="1.5" height="1.5" fill="#000"/><rect x="527.7" y="178.5" width="1.5" height="1.5" fill="#0e3ca8"/><rect x="518.9" y="186.5" width="1.5" height="1.5" fill="#ff0000"/><rect x="514.5" y="167.1" width="1.5" height="1.5" fill="#00ff00"/><rect x="499.7" y="176.9" width="1.5" height="1.5" fill="#000"/><rect x="524.2" y="167.5" width="1.5" height="1.5" fill="#0e3ca8"/><rect x="507.1" y="181.9" width="1.5" height="1.5" fill="#ff0000"/><rect x="494.4" y="162.5" width="1.5" height="1.5" fill="#00ff00"/><rect x="513.9" y="142.2" width="1.5" height="1.5" fill="#000"/><rect x="524.3" y="148.1" width="1.5" height="1.5" fill="#0e3ca8"/><rect x="503.8" y="170.6" width="1.5" height="1.5" fill="#ff0000"/><rect x="508.1" y="164.6" width="1.5" height="1.5" fill="#00ff00"/><rect x="488.0" y="170.3" width="1.5" height="1.5" fill="#000"/><rect x="513.0" y="161.4" width="1.5" height="1.5" fill="#0e3ca8"/><rect x="504.1" y="150.1" width="1.5" height="1.5" fill="#ff0000"/><rect x="497.4" y="171.2" width="1.5" height="1.5" fill="#00ff00"/><rect x="517.8" y="160.1" width="1.5" height="1.5" fill="#000"/><rect x="486.6" y="162.7" width="1.5" height="1.5" fill="#0e3ca8"/><rect x="506.2" y="145.7" width="1.5" height="1.5" fill="#ff0000"/><rect x="485.5" y="164.5" width="1.5" height="1.5" fill="#00ff00"/><rect x="510.1" y="151.2" width="1.5" height="1.5" fill="#000"/><rect x="485.0" y="158.6" width="1.5" height="1.5" fill="#0e3ca8"/><rect x="498.6" y="154.2" width="1.5" height="1.5" fill="#ff0000"/><rect x="527.4" y="147.0" width="1.5" height="1.5" fill="#00ff00"/><circle cx="502.1" cy="191.4" r="5.6" fill="#00ff00"/><circle cx="549.2" cy="170.0" r="5.6" fill="#00ff00"/><circle cx="521.8" cy="134.7" r="5.6" fill="#00ff00"/><circle cx="475.6" cy="155.1" r="5.6" fill="#00ff00"/><path d="M335.6 154.4L412 263.5" stroke="#e4e4e4" stroke-width="1.2" fill="none"/><path d="M466 349L505 410.5M507.6 409.7L666 330.6" stroke="#dcdcdc" stroke-width="1.2" fill="none"/><path d="M502.4 320L516.4 349.6L518.4 332M506 328L514 341" stroke="#e8e8e8" stroke-width="1" fill="none"/><path d="M428.5 195.3L430.9 244.0" stroke="#e8e8e8" stroke-width="1.1" fill="none"/><path d="M428.5 195.3L431.2 204.1L426.6 204.4Z" fill="#e8e8e8"/><path d="M430.9 244.0L428.1 235.1L432.7 234.9Z" fill="#e8e8e8"/><path d="M422.5 197.9L644.3 99.3" stroke="#e8e8e8" stroke-width="1.3" fill="none"/><path d="M425.1 246.6L456.6 232.2" stroke="#e8e8e8" stroke-width="1.1" fill="none"/><text transform="matrix(0.299 6.939 -10.223 4.609 437.36 216.76)" x="0" y="0.522" font-family="Liberation Sans, sans-serif" font-size="1.45" fill="#e8e8e8" text-anchor="middle">6.92</text><path d="M639.1 101.6L621.1 273.8" stroke="#e8e8e8" stroke-width="1.1" fill="none"/><path d="M639.1 101.6L640.5 110.8L635.9 110.3Z" fill="#e8e8e8"/><path d="M621.1 273.8L619.8 264.6L624.3 265.1Z" fill="#e8e8e8"/><path d="M509.8 327.9L625.7 271.6" stroke="#e8e8e8" stroke-width="1.1" fill="none"/><text transform="matrix(-0.699 6.409 -8.806 4.111 635.87 190.28)" x="0" y="0.522" font-family="Liberation Sans, sans-serif" font-size="1.45" fill="#e8e8e8" text-anchor="middle">26.56</text><path d="M430.0 291.4L588.6 217.1" stroke="#e8e8e8" stroke-width="1.2" fill="none"/><path d="M430.0 291.4L437.2 285.5L439.1 289.6Z" fill="#e8e8e8"/><path d="M588.6 217.1L581.4 223.0L579.5 218.9Z" fill="#e8e8e8"/><text transform="matrix(9.355 -4.365 -0.095 6.327 511.59 247.35)" x="0" y="0.504" font-family="Liberation Sans, sans-serif" font-size="1.4" fill="#e8e8e8" text-anchor="middle">16.99</text><path d="M437.3 365.8L648.4 263.1" stroke="#e8e8e8" stroke-width="1.3" fill="none"/><path d="M437.3 365.8L444.4 359.8L446.4 364.0Z" fill="#e8e8e8"/><path d="M648.4 263.1L641.4 269.1L639.3 264.9Z" fill="#e8e8e8"/><path d="M406.4 315.7L440.0 370.1" stroke="#e8e8e8" stroke-width="1.1" fill="none"/><path d="M613.0 218.3L651.5 266.9" stroke="#e8e8e8" stroke-width="1.1" fill="none"/><text transform="matrix(9.427 -4.570 5.655 8.035 540.97 307.39)" x="0" y="0.504" font-family="Liberation Sans, sans-serif" font-size="1.4" fill="#e8e8e8" text-anchor="middle">22.31</text><path d="M607.8 129.1L608.0 126.4L608.8 123.6L609.9 120.7L611.5 117.8L613.4 115.1L615.7 112.6L618.1 110.3L620.7 108.4L623.4 106.9L626.1 105.9L628.6 105.4L631.0 105.3L633.2 105.8L635.1 106.7L636.6 108.1L637.7 110.0L638.4 112.2L638.6 114.7L638.3 117.4L637.6 120.2L636.4 123.1L634.8 126.0L632.9 128.7L630.7 131.2L628.2 133.5L625.6 135.4L622.9 136.9L620.3 137.9L617.7 138.4L615.3 138.5L613.1 138.0L611.2 137.1L609.7 135.6L608.6 133.8L608.0 131.6L607.8 129.1M610.6 127.8L610.8 125.6L611.4 123.3L612.3 120.9L613.6 118.6L615.2 116.3L617.0 114.2L619.0 112.4L621.1 110.9L623.3 109.6L625.5 108.8L627.6 108.3L629.6 108.3L631.4 108.7L632.9 109.5L634.2 110.6L635.1 112.1L635.6 113.9L635.8 116.0L635.6 118.2L635.0 120.5L634.0 122.9L632.7 125.2L631.1 127.5L629.3 129.5L627.3 131.4L625.2 132.9L623.0 134.1L620.8 135.0L618.7 135.4L616.7 135.5L614.9 135.1L613.4 134.3L612.2 133.2L611.3 131.7L610.7 129.9L610.6 127.8M611.4 134.3L611.7 131.6L612.4 128.8L613.6 125.9L615.2 123.0L617.1 120.3L619.3 117.8L621.8 115.5L624.4 113.6L627.1 112.1L629.7 111.1L632.3 110.6L634.7 110.5L636.9 111.0L638.8 111.9L640.3 113.4L641.4 115.2L642.0 117.4L642.2 119.9L642.0 122.6L641.2 125.4L640.1 128.3L638.5 131.2L636.6 133.9L634.3 136.4L631.9 138.7L629.3 140.6L626.6 142.1L623.9 143.1L621.4 143.6L619.0 143.7L616.8 143.2L614.9 142.3L613.4 140.9L612.3 139.0L611.6 136.8L611.4 134.3M614.2 133.0L614.4 130.8L615.0 128.5L616.0 126.1L617.3 123.8L618.9 121.5L620.7 119.5L622.7 117.6L624.8 116.1L627.0 114.9L629.2 114.0L631.3 113.6L633.3 113.5L635.1 113.9L636.6 114.7L637.8 115.8L638.7 117.3L639.3 119.1L639.4 121.2L639.2 123.4L638.6 125.7L637.7 128.1L636.4 130.4L634.8 132.7L633.0 134.8L631.0 136.6L628.9 138.1L626.7 139.4L624.5 140.2L622.4 140.7L620.4 140.7L618.6 140.3L617.1 139.5L615.8 138.4L614.9 136.9L614.4 135.1L614.2 133.0M607.8 129.1L611.4 134.3M611.5 117.8L615.2 123.0M620.7 108.4L624.4 113.6M631.0 105.3L634.7 110.5M637.7 110.0L641.4 115.2M637.6 120.2L641.2 125.4M630.7 131.2L634.3 136.4M620.3 137.9L623.9 143.1M611.2 137.1L614.9 142.3" fill="none" stroke="#e8a410" stroke-width="1.2"/><path d="M620.4 106.1L624.4 102.1L630.4 107.1L627.4 114.1Z M620.4 106.1L630.4 107.1" fill="none" stroke="#4a8ae8" stroke-width="1.3"/><path d="M370.3 373.9L371.1 356.2" stroke="#d89010" stroke-width="1.6"/><path d="M370.3 373.9L349 383.2" stroke="#a01808" stroke-width="1.4"/><path d="M370.3 373.9L385.5 392" stroke="#1898a8" stroke-width="1.4"/><text x="376.5" y="359" font-family="Liberation Sans, sans-serif" font-size="12" fill="#d89010" text-anchor="middle">z</text><text x="349.5" y="388.5" font-family="Liberation Sans, sans-serif" font-size="12" fill="#c02010" text-anchor="middle">x</text><text x="391.5" y="399" font-family="Liberation Sans, sans-serif" font-size="12" fill="#18a8b8" text-anchor="middle">y</text></g></svg><svg style="position:absolute;left:2px;top:414px" width="329" height="331" viewBox="0 0 329 331"><rect width="329" height="331" fill="#000"/><path d="M7.5 0V331M16.5 0V331M25.5 0V331M43.5 0V331M53.5 0V331M62.5 0V331M71.5 0V331M89.5 0V331M99.5 0V331M108.5 0V331M117.5 0V331M135.5 0V331M145.5 0V331M154.5 0V331M163.5 0V331M181.5 0V331M191.5 0V331M200.5 0V331M209.5 0V331M227.5 0V331M237.5 0V331M246.5 0V331M255.5 0V331M273.5 0V331M283.5 0V331M292.5 0V331M301.5 0V331M319.5 0V331M329.5 0V331M0 12.5H329M0 21.5H329M0 30.5H329M0 40.5H329M0 58.5H329M0 67.5H329M0 76.5H329M0 86.5H329M0 104.5H329M0 113.5H329M0 122.5H329M0 132.5H329M0 150.5H329M0 159.5H329M0 168.5H329M0 178.5H329M0 196.5H329M0 205.5H329M0 214.5H329M0 224.5H329M0 242.5H329M0 251.5H329M0 260.5H329M0 270.5H329M0 288.5H329M0 297.5H329M0 306.5H329M0 316.5H329" stroke="#3a3a3a" stroke-width="1" fill="none"/><path d="M34.5 0V331M80.5 0V331M126.5 0V331M172.5 0V331M218.5 0V331M264.5 0V331M310.5 0V331M0 3.5H329M0 49.5H329M0 95.5H329M0 141.5H329M0 187.5H329M0 233.5H329M0 279.5H329M0 325.5H329" stroke="#858585" stroke-width="1" fill="none"/><g transform="translate(-2 -414)"><path d="M2 601.3L174.6 601.3" stroke="#c8c8c8" stroke-width="1.2" fill="none"/><path d="M174.6 601.3L174.6 745" stroke="#c8c8c8" stroke-width="1.2" fill="none"/><path d="M174.6 601.3L331 601.3" stroke="#b01808" stroke-width="1.8" fill="none"/><path d="M174.6 414L174.6 601.3" stroke="#1aa8b8" stroke-width="1.8" fill="none"/><circle cx="175.5" cy="600.2" r="98" fill="none" stroke="#ff0000" stroke-width="8"/><circle cx="175.5" cy="600.2" r="95.6" fill="none" stroke="#000" stroke-width="0.5" opacity="0.5"/><circle cx="175.5" cy="600.2" r="97.3" fill="none" stroke="#000" stroke-width="0.5" opacity="0.5"/><circle cx="175.5" cy="600.2" r="99.0" fill="none" stroke="#000" stroke-width="0.5" opacity="0.5"/><circle cx="175.5" cy="600.2" r="100.6" fill="none" stroke="#000" stroke-width="0.5" opacity="0.5"/><circle cx="175.5" cy="600.2" r="81.2" fill="none" stroke="#000" stroke-width="0.5" opacity="0.5"/><circle cx="175.5" cy="600.2" r="83" fill="none" stroke="#000" stroke-width="0.5" opacity="0.5"/><circle cx="175.5" cy="600.2" r="89.5" fill="none" stroke="#ff0000" stroke-width="1.3"/><circle cx="175.5" cy="600.2" r="86.8" fill="none" stroke="#ff0000" stroke-width="1.3"/><circle cx="175.5" cy="600.2" r="81.8" fill="none" stroke="#ff0000" stroke-width="4.6"/><path d="M72 601C73 580 80 558 95 537C108 520 126 502 139.3 481H210.7C224 502 242 520 255 537C270 558 277 580 278 601V600.5H255.9A80.4 80.4 0 0 0 95.1 600.5V601Z" fill="#ff0000"/><path d="M136 523Q146 515 155 511.5L160 512V520.5Q148 521 136 525Z" fill="#000"/><path d="M140 522Q150 516 158 514.5" fill="none" stroke="#ff0000" stroke-width="1"/><path d="M136 523Q146 515 155 511.5L160 512V520.5Q148 521 136 525Z" fill="#000" transform="translate(351.0 0) scale(-1 1)"/><path d="M140 522Q150 516 158 514.5" fill="none" stroke="#ff0000" stroke-width="1" transform="translate(351.0 0) scale(-1 1)"/><path d="M165.5 487H184.5L175 510Z" fill="#000"/><path d="M167 487H183L175 494Z" fill="#0e3ca8"/><path d="M160 511H190V520H160Z" fill="#000"/><path d="M160 510L160 520" stroke="#ff0000" stroke-width="1" fill="none"/><path d="M162.5 510L162.5 520" stroke="#ff0000" stroke-width="1" fill="none"/><path d="M165 510L165 520" stroke="#ff0000" stroke-width="1" fill="none"/><path d="M168 510L168 520" stroke="#ff0000" stroke-width="1" fill="none"/><path d="M170 510L170 520" stroke="#ff0000" stroke-width="1" fill="none"/><path d="M172 510L172 520" stroke="#ff0000" stroke-width="1" fill="none"/><path d="M178 510L178 520" stroke="#ff0000" stroke-width="1" fill="none"/><path d="M180 510L180 520" stroke="#ff0000" stroke-width="1" fill="none"/><path d="M182 510L182 520" stroke="#ff0000" stroke-width="1" fill="none"/><path d="M185 510L185 520" stroke="#ff0000" stroke-width="1" fill="none"/><path d="M188 510L188 520" stroke="#ff0000" stroke-width="1" fill="none"/><path d="M190 510L190 520" stroke="#ff0000" stroke-width="1" fill="none"/><path d="M160 511L190 511" stroke="#ff0000" stroke-width="1.5" fill="none"/><path d="M84 596C86 578 90 566 97 557C104 546 110 537 116 532C124 524 131 518 137 512.5C141 507 144 498 147 489" fill="none" stroke="#00ff00" stroke-width="8" stroke-linecap="round"/><path d="M84 596C86 578 90 566 97 557C104 546 110 537 116 532C124 524 131 518 137 512.5C141 507 144 498 147 489" fill="none" stroke="#82aef0" stroke-width="6.6" stroke-dasharray="5.5 1.6"/><g transform="translate(351.0 0) scale(-1 1)"><path d="M84 596C86 578 90 566 97 557C104 546 110 537 116 532C124 524 131 518 137 512.5C141 507 144 498 147 489" fill="none" stroke="#00ff00" stroke-width="8" stroke-linecap="round"/><path d="M84 596C86 578 90 566 97 557C104 546 110 537 116 532C124 524 131 518 137 512.5C141 507 144 498 147 489" fill="none" stroke="#82aef0" stroke-width="6.6" stroke-dasharray="5.5 1.6"/></g><path d="M151 487C153 497 157 505 162 510" fill="none" stroke="#00ff00" stroke-width="6" stroke-linecap="round"/><path d="M151 487C153 497 157 505 162 510" fill="none" stroke="#82aef0" stroke-width="3.2" stroke-dasharray="3 1.8"/><path d="M199 487C197 497 193 505 188 510" fill="none" stroke="#00ff00" stroke-width="6" stroke-linecap="round"/><path d="M199 487C197 497 193 505 188 510" fill="none" stroke="#82aef0" stroke-width="3.2" stroke-dasharray="3 1.8"/><rect x="139.3" y="472.3" width="71.2" height="9.2" rx="4.6" fill="#00ff00"/><ellipse cx="146.0" cy="474.5" rx="2.3" ry="2.2" fill="#82aef0" opacity="0.75"/><ellipse cx="153.3" cy="474.5" rx="2.3" ry="2.2" fill="#82aef0" opacity="0.75"/><ellipse cx="160.6" cy="474.5" rx="2.3" ry="2.2" fill="#82aef0" opacity="0.75"/><ellipse cx="167.9" cy="474.5" rx="2.3" ry="2.2" fill="#82aef0" opacity="0.75"/><ellipse cx="175.2" cy="474.5" rx="2.3" ry="2.2" fill="#82aef0" opacity="0.75"/><ellipse cx="182.5" cy="474.5" rx="2.3" ry="2.2" fill="#82aef0" opacity="0.75"/><ellipse cx="189.8" cy="474.5" rx="2.3" ry="2.2" fill="#82aef0" opacity="0.75"/><ellipse cx="197.1" cy="474.5" rx="2.3" ry="2.2" fill="#82aef0" opacity="0.75"/><ellipse cx="204.4" cy="474.5" rx="2.3" ry="2.2" fill="#82aef0" opacity="0.75"/><path d="M148 471C150 466 153 462 158 459H192C197 462 200 466 202 471Z" fill="#0e3ca8"/><path d="M158 460L168 470L180 460L190 470M162 470L174 460L186 470M152 465H198" stroke="#000" stroke-width="0.8" fill="none" opacity="0.5"/><rect x="151.9" y="468" width="8" height="7" rx="2" fill="#ff0000"/><circle cx="155.9" cy="466.5" r="4.2" fill="#00ff00"/><rect x="189.1" y="468" width="8" height="7" rx="2" fill="#ff0000"/><circle cx="193.1" cy="466.5" r="4.2" fill="#00ff00"/><path d="M50.5 456.7L255 456.7" stroke="#e8e8e8" stroke-width="1.2" fill="none"/><path d="M50.5 702.4L170 702.4" stroke="#e8e8e8" stroke-width="1.2" fill="none"/><path d="M54.5 458L54.5 701" stroke="#e8e8e8" stroke-width="1.2" fill="none"/><path d="M54.5 457.5L56.9 466.5L52.1 466.5Z" fill="#e8e8e8"/><path d="M54.5 701.5L52.1 692.5L56.9 692.5Z" fill="#e8e8e8"/><text x="52.8" y="579.4" font-family="Liberation Sans, sans-serif" font-size="13.5" fill="#e8e8e8" text-anchor="middle" transform="rotate(-90 52.8 579.4)">26.56</text><path d="M240.6 521.1L254.5 521.1" stroke="#e8e8e8" stroke-width="1.2" fill="none"/><path d="M249.9 458L249.9 520" stroke="#e8e8e8" stroke-width="1.2" fill="none"/><path d="M249.9 457.8L252.3 466.8L247.5 466.8Z" fill="#e8e8e8"/><path d="M249.9 520.6L247.5 511.6L252.3 511.6Z" fill="#e8e8e8"/><text x="247.9" y="489" font-family="Liberation Sans, sans-serif" font-size="13.5" fill="#e8e8e8" text-anchor="middle" transform="rotate(-90 247.9 489)">6.92</text><path d="M97 586.6L253 586.6" stroke="#e8e8e8" stroke-width="1.2" fill="none"/><path d="M96.5 586.6L105.5 584.2L105.5 589.0Z" fill="#e8e8e8"/><path d="M253.5 586.6L244.5 589.0L244.5 584.2Z" fill="#e8e8e8"/><text x="174" y="583.5" font-family="Liberation Sans, sans-serif" font-size="13" fill="#e8e8e8" text-anchor="middle">16.99</text><circle cx="290.9" cy="453.9" r="17.5" fill="none" stroke="#e8a410" stroke-width="1.6"/><circle cx="290.9" cy="454.6" r="14.8" fill="none" stroke="#e8a410" stroke-width="1.2"/><path d="M290.9 433.7V440" stroke="#e8a410" stroke-width="1.4"/><path d="M287 424.5H295L298 428L291 433.5L284.3 428Z M284.3 428H298 M291 424.5V433.5" fill="none" stroke="#4a8ae8" stroke-width="1.1"/><path d="M39 705V675" stroke="#d89010" stroke-width="1.6"/><path d="M39 705H68" stroke="#a01808" stroke-width="1.6"/><text x="45" y="678.5" font-family="Liberation Sans, sans-serif" font-size="12.5" font-weight="bold" fill="#d89010" text-anchor="middle">z</text><text x="75" y="709" font-family="Liberation Sans, sans-serif" font-size="12.5" font-weight="bold" fill="#a01808" text-anchor="middle">x</text></g></svg><svg style="position:absolute;left:335px;top:414px" width="331" height="331" viewBox="0 0 331 331"><rect width="331" height="331" fill="#000"/><path d="M5.5 0V331M14.5 0V331M23.5 0V331M42.5 0V331M51.5 0V331M60.5 0V331M69.5 0V331M88.5 0V331M97.5 0V331M106.5 0V331M115.5 0V331M134.5 0V331M143.5 0V331M152.5 0V331M161.5 0V331M180.5 0V331M189.5 0V331M198.5 0V331M207.5 0V331M226.5 0V331M235.5 0V331M244.5 0V331M253.5 0V331M272.5 0V331M281.5 0V331M290.5 0V331M299.5 0V331M318.5 0V331M327.5 0V331M0 11.5H331M0 20.5H331M0 29.5H331M0 39.5H331M0 57.5H331M0 66.5H331M0 75.5H331M0 85.5H331M0 103.5H331M0 112.5H331M0 121.5H331M0 131.5H331M0 149.5H331M0 158.5H331M0 167.5H331M0 177.5H331M0 195.5H331M0 204.5H331M0 213.5H331M0 223.5H331M0 241.5H331M0 250.5H331M0 259.5H331M0 269.5H331M0 287.5H331M0 296.5H331M0 305.5H331M0 315.5H331" stroke="#3a3a3a" stroke-width="1" fill="none"/><path d="M33.5 0V331M79.5 0V331M125.5 0V331M171.5 0V331M217.5 0V331M263.5 0V331M309.5 0V331M0 2.5H331M0 48.5H331M0 94.5H331M0 140.5H331M0 186.5H331M0 232.5H331M0 278.5H331M0 324.5H331" stroke="#858585" stroke-width="1" fill="none"/><g transform="translate(-335 -414)"><path d="M335 600.3L492 600.3" stroke="#c8c8c8" stroke-width="1.2" fill="none"/><path d="M520 600.3L666 600.3" stroke="#b01808" stroke-width="1.8" fill="none"/><path d="M506.2 414L506.2 459" stroke="#1aa8b8" stroke-width="1.8" fill="none"/><rect x="496.2" y="595" width="22.5" height="100.5" rx="3.5" fill="none" stroke="#ff0000" stroke-width="2.8"/><path d="M498.7 600L498.7 695" stroke="#ff0000" stroke-width="1.5" fill="none"/><path d="M506.5 600L506.5 695" stroke="#ff0000" stroke-width="1.5" fill="none"/><path d="M515.4 600L515.4 695" stroke="#ff0000" stroke-width="1.5" fill="none"/><path d="M496 616.4L518.5 616.4" stroke="#ff0000" stroke-width="1.5" fill="none"/><path d="M496 620.7L518.5 620.7" stroke="#ff0000" stroke-width="1.5" fill="none"/><path d="M496 661.3L518.5 661.3" stroke="#ff0000" stroke-width="1.5" fill="none"/><path d="M496 675L518.5 675" stroke="#ff0000" stroke-width="1.5" fill="none"/><path d="M496 679.4L518.5 679.4" stroke="#ff0000" stroke-width="1.5" fill="none"/><rect x="492.5" y="484" width="26.7" height="118" fill="#ff0000"/><rect x="500.2" y="490.4" width="12.1" height="106.2" fill="#4a7ad4"/><rect x="507.4" y="568.1" width="2.2" height="1.2" fill="#00ff00" opacity="0.8"/><rect x="510.9" y="567.9" width="2.4" height="1.2" fill="#ff0000" opacity="0.8"/><rect x="500.8" y="539.4" width="2.4" height="1.2" fill="#40a0a0" opacity="0.8"/><rect x="507.6" y="584.7" width="1.2" height="1.2" fill="#00ff00" opacity="0.8"/><rect x="505.7" y="516.6" width="1.8" height="1.2" fill="#ff0000" opacity="0.8"/><rect x="506.8" y="492.4" width="1.3" height="1.2" fill="#40a0a0" opacity="0.8"/><rect x="503.6" y="586.3" width="2.1" height="1.2" fill="#00ff00" opacity="0.8"/><rect x="502.3" y="573.9" width="1.2" height="1.2" fill="#ff0000" opacity="0.8"/><rect x="507.3" y="504.2" width="1.0" height="1.2" fill="#40a0a0" opacity="0.8"/><rect x="510.1" y="512.8" width="1.3" height="1.2" fill="#00ff00" opacity="0.8"/><rect x="511.3" y="581.7" width="1.4" height="1.2" fill="#ff0000" opacity="0.8"/><rect x="511.1" y="547.1" width="2.0" height="1.2" fill="#40a0a0" opacity="0.8"/><rect x="502.8" y="588.9" width="2.0" height="1.2" fill="#00ff00" opacity="0.8"/><rect x="511.1" y="583.9" width="1.4" height="1.2" fill="#ff0000" opacity="0.8"/><rect x="504.5" y="508.3" width="1.2" height="1.2" fill="#40a0a0" opacity="0.8"/><rect x="501.2" y="522.3" width="1.9" height="1.2" fill="#00ff00" opacity="0.8"/><rect x="500.5" y="561.5" width="1.5" height="1.2" fill="#ff0000" opacity="0.8"/><rect x="503.9" y="576.1" width="1.7" height="1.2" fill="#40a0a0" opacity="0.8"/><rect x="504.0" y="541.0" width="2.1" height="1.2" fill="#00ff00" opacity="0.8"/><rect x="501.1" y="592.4" width="1.0" height="1.2" fill="#ff0000" opacity="0.8"/><rect x="508.7" y="578.9" width="1.0" height="1.2" fill="#40a0a0" opacity="0.8"/><rect x="509.2" y="529.1" width="1.9" height="1.2" fill="#00ff00" opacity="0.8"/><rect x="500.6" y="495.9" width="1.3" height="1.2" fill="#ff0000" opacity="0.8"/><rect x="511.0" y="511.4" width="2.1" height="1.2" fill="#40a0a0" opacity="0.8"/><rect x="510.7" y="589.0" width="1.5" height="1.2" fill="#00ff00" opacity="0.8"/><rect x="504.4" y="545.6" width="2.2" height="1.2" fill="#ff0000" opacity="0.8"/><rect x="501.7" y="568.8" width="2.2" height="1.2" fill="#40a0a0" opacity="0.8"/><rect x="510.0" y="494.8" width="2.4" height="1.2" fill="#00ff00" opacity="0.8"/><rect x="501.5" y="526.4" width="1.9" height="1.2" fill="#ff0000" opacity="0.8"/><rect x="510.6" y="526.4" width="2.4" height="1.2" fill="#40a0a0" opacity="0.8"/><rect x="506.5" y="523.5" width="1.5" height="1.2" fill="#00ff00" opacity="0.8"/><rect x="502.5" y="499.1" width="1.2" height="1.2" fill="#ff0000" opacity="0.8"/><rect x="508.1" y="594.7" width="1.2" height="1.2" fill="#40a0a0" opacity="0.8"/><rect x="501.0" y="593.6" width="1.8" height="1.2" fill="#00ff00" opacity="0.8"/><rect x="505.0" y="515.7" width="1.9" height="1.2" fill="#ff0000" opacity="0.8"/><rect x="509.6" y="538.4" width="1.6" height="1.2" fill="#40a0a0" opacity="0.8"/><rect x="501.1" y="586.3" width="1.0" height="1.2" fill="#00ff00" opacity="0.8"/><rect x="505.9" y="578.2" width="1.2" height="1.2" fill="#ff0000" opacity="0.8"/><rect x="508.5" y="589.8" width="1.9" height="1.2" fill="#40a0a0" opacity="0.8"/><rect x="509.2" y="502.1" width="1.7" height="1.2" fill="#00ff00" opacity="0.8"/><rect x="502.1" y="578.9" width="1.4" height="1.2" fill="#ff0000" opacity="0.8"/><rect x="505.5" y="594.9" width="2.3" height="1.2" fill="#40a0a0" opacity="0.8"/><rect x="511.2" y="538.2" width="1.7" height="1.2" fill="#00ff00" opacity="0.8"/><rect x="508.5" y="540.8" width="1.4" height="1.2" fill="#ff0000" opacity="0.8"/><rect x="504.9" y="506.2" width="1.6" height="1.2" fill="#40a0a0" opacity="0.8"/><rect x="511.4" y="590.8" width="1.9" height="1.2" fill="#00ff00" opacity="0.8"/><rect x="506.0" y="526.2" width="1.1" height="1.2" fill="#ff0000" opacity="0.8"/><rect x="503.5" y="572.3" width="2.3" height="1.2" fill="#40a0a0" opacity="0.8"/><rect x="504.5" y="572.7" width="2.2" height="1.2" fill="#00ff00" opacity="0.8"/><rect x="508.1" y="560.1" width="2.1" height="1.2" fill="#ff0000" opacity="0.8"/><rect x="504.5" y="564.3" width="1.4" height="1.2" fill="#40a0a0" opacity="0.8"/><rect x="505.8" y="571.1" width="2.0" height="1.2" fill="#00ff00" opacity="0.8"/><rect x="503.7" y="589.3" width="2.0" height="1.2" fill="#ff0000" opacity="0.8"/><rect x="506.9" y="492.2" width="1.8" height="1.2" fill="#40a0a0" opacity="0.8"/><rect x="503.3" y="560.9" width="1.7" height="1.2" fill="#00ff00" opacity="0.8"/><rect x="509.5" y="558.3" width="2.2" height="1.2" fill="#ff0000" opacity="0.8"/><rect x="504.3" y="558.0" width="2.1" height="1.2" fill="#40a0a0" opacity="0.8"/><rect x="509.6" y="527.4" width="2.3" height="1.2" fill="#00ff00" opacity="0.8"/><rect x="510.1" y="562.6" width="2.5" height="1.2" fill="#ff0000" opacity="0.8"/><rect x="511.0" y="544.9" width="1.8" height="1.2" fill="#40a0a0" opacity="0.8"/><rect x="502.3" y="578.0" width="2.4" height="1.2" fill="#00ff00" opacity="0.8"/><rect x="505.7" y="562.9" width="2.1" height="1.2" fill="#ff0000" opacity="0.8"/><rect x="508.5" y="508.9" width="2.2" height="1.2" fill="#40a0a0" opacity="0.8"/><rect x="506.9" y="560.2" width="1.6" height="1.2" fill="#00ff00" opacity="0.8"/><rect x="507.4" y="571.6" width="2.0" height="1.2" fill="#ff0000" opacity="0.8"/><rect x="508.4" y="493.9" width="1.2" height="1.2" fill="#40a0a0" opacity="0.8"/><rect x="505.4" y="558.6" width="1.3" height="1.2" fill="#00ff00" opacity="0.8"/><rect x="508.0" y="556.6" width="1.1" height="1.2" fill="#ff0000" opacity="0.8"/><rect x="505.7" y="514.5" width="1.1" height="1.2" fill="#40a0a0" opacity="0.8"/><rect x="502.0" y="524.0" width="1.3" height="1.2" fill="#00ff00" opacity="0.8"/><path d="M502 555Q500 559 502 563M510 555Q512 559 510 563" stroke="#ff0000" stroke-width="1.6" fill="none"/><path d="M502 575Q500 579 502 583M510 575Q512 579 510 583" stroke="#ff0000" stroke-width="1.6" fill="none"/><path d="M502 587Q500 591 502 595M510 587Q512 591 510 595" stroke="#ff0000" stroke-width="1.6" fill="none"/><path d="M480.5 485L493.5 485L493.5 513L489 513Z" fill="#ff0000"/><path d="M482 487.5L492.5 487.5L492 509L489.5 509Z" fill="#00ff00"/><path d="M484 490L491 490L490.5 506Z" fill="#82aef0"/><path d="M531.5 485L518.5 485L518.5 513L523 513Z" fill="#ff0000"/><path d="M530 487.5L519.5 487.5L520 509L522.5 509Z" fill="#00ff00"/><path d="M528 490L521 490L521.5 506Z" fill="#82aef0"/><rect x="490.5" y="511" width="3.5" height="10.5" fill="none" stroke="#ff0000" stroke-width="1.2"/><rect x="518.5" y="511" width="3.5" height="10.5" fill="none" stroke="#ff0000" stroke-width="1.2"/><rect x="472" y="478" width="68.5" height="9.5" rx="4.7" fill="#ff0000"/><rect x="471.2" y="475" width="70" height="8.6" rx="4.3" fill="#00ff00"/><ellipse cx="481.0" cy="477" rx="2" ry="2" fill="#82aef0" opacity="0.8"/><ellipse cx="488.2" cy="477" rx="2" ry="2" fill="#82aef0" opacity="0.8"/><ellipse cx="495.4" cy="477" rx="2" ry="2" fill="#82aef0" opacity="0.8"/><ellipse cx="502.6" cy="477" rx="2" ry="2" fill="#82aef0" opacity="0.8"/><ellipse cx="509.8" cy="477" rx="2" ry="2" fill="#82aef0" opacity="0.8"/><ellipse cx="517.0" cy="477" rx="2" ry="2" fill="#82aef0" opacity="0.8"/><ellipse cx="524.2" cy="477" rx="2" ry="2" fill="#82aef0" opacity="0.8"/><ellipse cx="531.4" cy="477" rx="2" ry="2" fill="#82aef0" opacity="0.8"/><path d="M485.3 473C487 466 490 461 495 459.2H517C522 461 525 466 526.6 473Z" fill="#0e3ca8"/><path d="M491 459.2L500 472.8L506 459.2L512 472.8L521 459.2M495 472.8L506 462L517 472.8" stroke="#3060d8" stroke-width="1" fill="none"/><circle cx="484.2" cy="472.5" r="4" fill="#ff0000"/><circle cx="484.2" cy="467" r="4.5" fill="#00ff00"/><circle cx="528.3" cy="472.5" r="4" fill="#ff0000"/><circle cx="528.3" cy="467" r="4.5" fill="#00ff00"/><path d="M492.6 690.7L490.9 722.6" stroke="#e0e0e0" stroke-width="1.1" fill="none"/><path d="M519.9 690.7L517.7 722.6" stroke="#e0e0e0" stroke-width="1.1" fill="none"/><path d="M492 718.8L518 718.8" stroke="#e8e8e8" stroke-width="1.1" fill="none"/><path d="M491.5 718.8L498.5 716.8L498.5 720.8Z" fill="#e8e8e8"/><path d="M518.5 718.8L511.5 720.8L511.5 716.8Z" fill="#e8e8e8"/><text x="504.5" y="716.5" font-family="Liberation Sans, sans-serif" font-size="13" fill="#e8e8e8" text-anchor="middle">2.94</text><path d="M613.2 428.5L617.5 424.2H628L632.2 428.5L622.7 433.7Z M613.2 428.5H632.2 M622.7 424.2V433.7" fill="none" stroke="#4a8ae8" stroke-width="1.1"/><path d="M618 436.5L621.5 434.5H627.5L632.5 436.5L628.5 470L624.5 474L621 470Z M619 440H631.5 M621.5 454H628.5 M621 470H628.5" fill="none" stroke="#e8a410" stroke-width="1.2"/><path d="M371.5 709V679" stroke="#d89010" stroke-width="1.6"/><path d="M371.5 709H400.5" stroke="#1898a8" stroke-width="1.6"/><text x="377.5" y="682.5" font-family="Liberation Sans, sans-serif" font-size="12.5" font-weight="bold" fill="#d89010" text-anchor="middle">z</text><text x="407.5" y="713" font-family="Liberation Sans, sans-serif" font-size="12.5" font-weight="bold" fill="#1898a8" text-anchor="middle">y</text></g></svg><svg class="a" style="left:2px;top:86px" width="104" height="18"><path d="M0 0H104V14L100 18H0Z" fill="#add8e6"/><rect x="93" y="2" width="1" height="14" fill="#333"/><path d="M96 7H102L99 11Z" fill="#444"/></svg><div class="t" style="left:11px;top:89px;font-size:12px;color:#5a6470">Looking Down</div><svg class="a" style="left:335px;top:86px" width="88" height="18"><path d="M0 0H88V14L84 18H0Z" fill="#add8e6"/><rect x="77" y="2" width="1" height="14" fill="#333"/><path d="M80 7H86L83 11Z" fill="#444"/></svg><div class="t" style="left:344px;top:89px;font-size:11.4px;color:#5a6470">Perspective</div><svg class="a" style="left:2px;top:414px" width="112" height="18"><path d="M0 0H112V14L108 18H0Z" fill="#add8e6"/><rect x="101" y="2" width="1" height="14" fill="#333"/><path d="M104 7H110L107 11Z" fill="#444"/></svg><div class="t" style="left:13px;top:417px;font-size:11.7px;color:#5a6470">Through Finger</div><svg class="a" style="left:335px;top:414px" width="79" height="18"><path d="M0 0H79V14L75 18H0Z" fill="#3bb5e2"/><rect x="68" y="2" width="1" height="14" fill="#333"/><path d="M71 7H77L74 11Z" fill="#444"/></svg><div class="t" style="left:344px;top:417px;font-size:11.2px;color:#102040">Side View</div><div class="a" style="left:674px;top:0;width:280px;height:752px;background:#353535"></div><div class="a" style="left:674px;top:8px;width:25px;height:25px;background:#5a5a5a"></div><svg class="a" style="left:676px;top:10px" width="19" height="21"><rect width="19" height="21" fill="#1882cc"/><g stroke="#f4f8ff" stroke-width="1.1"><path d="M2 1.5H6M9.2 1.5H12M13.2 1.5H16.3M2 3.7H7.8M9.2 3.7H12M13.2 3.7H16.3M2 5.7H4.5M2 7.6H3.2M2 9.4H3M2 11.3H3.2M2 13.2H4.5M2 15.5H7.8M9.2 15.5H12M13.2 15.5H16.3M2 17.6H7.8M9.2 17.6H12M13.2 17.6H16.3M2 19.7H7.8M9.2 19.7H12M13.2 19.7H16.3M13.5 15.5V17.6"/></g><ellipse cx="10.7" cy="9.4" rx="6.6" ry="4.4" fill="#dfe6ee"/><ellipse cx="12.5" cy="8.5" rx="3.8" ry="2.6" fill="#fff"/><ellipse cx="9" cy="10.6" rx="3.2" ry="2" fill="#f4f8fc"/><ellipse cx="12" cy="10.6" rx="2" ry="1.3" fill="#b0b8c4"/></svg><div class="a" style="left:699px;top:8px;width:255px;height:25px;background:linear-gradient(#e6e3dc,#cfcbc2 40%,#bdb9b0)"></div><div class="a" style="left:820px;top:10px;width:1px;height:22px;background:#8a877f"></div><div class="t" style="left:704px;top:10px;font-size:11.8px;font-weight:bold;color:#000;letter-spacing:0px">GEM REPORTER</div><div class="a" style="left:678px;top:38px;width:112px;height:17px;background:#2e2e2e;border:1px solid #5a5a5a;box-shadow:inset 1px 1px 0 #111"></div><div class="a" style="left:789px;top:38px;width:35px;height:17px;background:#000;border:1px solid #444"></div><div class="t" style="left:682px;top:40px;font-size:13px;color:#ececec">Total Gem Weight</div><div class="t" style="left:796px;top:40px;font-size:13px;color:#10e4f0">1.33</div><div class="a" style="left:828px;top:38px;width:106px;height:17px;background:#2e2e2e;border:1px solid #5a5a5a;box-shadow:inset 1px 1px 0 #111"></div><div class="a" style="left:933px;top:38px;width:21px;height:17px;background:#000;border:1px solid #444;border-right:none"></div><div class="t" style="left:832px;top:40px;font-size:13px;color:#ececec">Total Gem Count</div><div class="t" style="left:939px;top:40px;font-size:13px;color:#10e4f0">99</div><div class="a" style="left:711px;top:63px;width:226px;height:1px;background:#888"></div><div class="a" style="left:711px;top:64px;width:226px;height:1px;background:#1a1a1a"></div><svg class="a" style="left:816px;top:56px" width="16" height="16"><circle cx="8" cy="8" r="6.5" fill="#3a3a3a" stroke="#8a8a8a" stroke-width="1.5"/><path d="M4.5 9.5L8 6L11.5 9.5Z" fill="#e0e0e0"/></svg><div class="a" style="left:716px;top:73px;width:51px;height:16px;background:#2e2e2e;border:1px solid #5a5a5a;box-shadow:inset 1px 1px 0 #111"></div><div class="t" style="left:719px;top:75px;font-size:13px;color:#f4f4f4">Update</div><svg class="a" style="left:769px;top:74px" width="16" height="15"><rect x="0.5" y="0.5" width="15" height="14" fill="#4aa526" stroke="#2c6e12"/><rect x="1" y="1" width="14" height="7" fill="#5cbc34"/><path d="M5.5 3.5L11.0 7.5L5.5 11.5Z" fill="#f0f0e0"/></svg><div class="a" style="left:807px;top:73px;width:106px;height:16px;background:#2e2e2e;border:1px solid #5a5a5a;box-shadow:inset 1px 1px 0 #111"></div><div class="t" style="left:810px;top:75px;font-size:13px;color:#f4f4f4">Save Report</div><svg class="a" style="left:915px;top:74px" width="16" height="15"><rect x="0.5" y="0.5" width="15" height="14" fill="#4aa526" stroke="#2c6e12"/><rect x="1" y="1" width="14" height="7" fill="#5cbc34"/><path d="M5.5 3.5L11.0 7.5L5.5 11.5Z" fill="#f0f0e0"/></svg><div class="a" style="left:676px;top:93px;width:278px;height:297px;background:#555;border-top:1px solid #6a6a6a;border-left:1px solid #6a6a6a"></div><div class="a" style="left:684px;top:100px;width:36px;height:33px;background:#2e2e2e;border:1px solid #d8d8d8;border-right:none"></div><div class="a" style="left:684px;top:136px;width:36px;height:33px;background:#2e2e2e;border:1px solid #d8d8d8;border-right:none"></div><svg class="a" style="left:682px;top:98px" width="40" height="74"><path d="M31 14L14 32L20 33L35 13Z" fill="#1a1a1a" opacity="0.6"/><path d="M20.2 6.4L29 9.8L17.7 26.1L7.9 23.1Z" fill="#7c84ee"/><path d="M29 9.8L31 11.3L18.7 29.5L17.7 26.1Z" fill="#f4f6ff"/><path d="M7.9 23.1L17.7 26.1L18.7 29.5L6.4 25.1Z" fill="#dfe6f8"/><ellipse cx="19.2" cy="56.5" rx="13.6" ry="9.6" fill="#5a62c8"/><ellipse cx="18.7" cy="54.5" rx="12" ry="7.8" fill="#7c84ee"/><ellipse cx="22" cy="60" rx="8.5" ry="4.8" fill="#fbfcff"/><path d="M8 58Q6 50 16 46" stroke="#a8b0ff" stroke-width="1" fill="none"/></svg><div class="a" style="left:719px;top:100px;width:120px;height:17px;background:#2f2f2f;border:1px solid #7a7a7a"></div><div class="t" style="left:719px;top:102px;width:120px;text-align:center;font-size:12.5px;color:#f0ecd8">Diamond Baguette</div><div class="a" style="left:838px;top:100px;width:103px;height:17px;background:#2f2f2f;border:1px solid #7a7a7a"></div><div class="t" style="left:838px;top:102px;width:103px;text-align:center;font-size:12.5px;color:#f0ecd8">Diamond</div><div class="a" style="left:719px;top:116px;width:120px;height:17px;background:#2f2f2f;border:1px solid #7a7a7a"></div><div class="t" style="left:719px;top:118px;width:120px;text-align:center;font-size:12.5px;color:#f0ecd8">1.75 X 1.50</div><div class="a" style="left:838px;top:116px;width:37px;height:17px;background:#2f2f2f;border:1px solid #7a7a7a"></div><div class="t" style="left:838px;top:118px;width:37px;text-align:center;font-size:12.5px;color:#f0ecd8">16</div><div class="a" style="left:874px;top:116px;width:50px;height:17px;background:#2f2f2f;border:1px solid #7a7a7a"></div><div class="t" style="left:874px;top:118px;width:50px;text-align:center;font-size:12.5px;color:#f0ecd8">0.43tw</div><svg class="a" style="left:924px;top:117px" width="17" height="15"><rect x="0.5" y="0.5" width="16" height="14" fill="#4aa526" stroke="#2c6e12"/><rect x="1" y="1" width="15" height="7" fill="#5cbc34"/><path d="M6.0 3.5L11.5 7.5L6.0 11.5Z" fill="#f0f0e0"/></svg><div class="a" style="left:719px;top:136px;width:120px;height:17px;background:#2f2f2f;border:1px solid #7a7a7a"></div><div class="t" style="left:719px;top:138px;width:120px;text-align:center;font-size:12.5px;color:#f0ecd8">Diamond Round</div><div class="a" style="left:838px;top:136px;width:103px;height:17px;background:#2f2f2f;border:1px solid #7a7a7a"></div><div class="t" style="left:838px;top:138px;width:103px;text-align:center;font-size:12.5px;color:#f0ecd8">Diamond</div><div class="a" style="left:719px;top:152px;width:120px;height:17px;background:#2f2f2f;border:1px solid #7a7a7a"></div><div class="t" style="left:719px;top:154px;width:120px;text-align:center;font-size:12.5px;color:#f0ecd8">.90 X .90</div><div class="a" style="left:838px;top:152px;width:37px;height:17px;background:#2f2f2f;border:1px solid #7a7a7a"></div><div class="t" style="left:838px;top:154px;width:37px;text-align:center;font-size:12.5px;color:#f0ecd8">64</div><div class="a" style="left:874px;top:152px;width:50px;height:17px;background:#2f2f2f;border:1px solid #7a7a7a"></div><div class="t" style="left:874px;top:154px;width:50px;text-align:center;font-size:12.5px;color:#f0ecd8">0.17tw</div><svg class="a" style="left:924px;top:153px" width="17" height="15"><rect x="0.5" y="0.5" width="16" height="14" fill="#4aa526" stroke="#2c6e12"/><rect x="1" y="1" width="15" height="7" fill="#5cbc34"/><path d="M6.0 3.5L11.5 7.5L6.0 11.5Z" fill="#f0f0e0"/></svg><div class="a" style="left:719px;top:168px;width:120px;height:17px;background:#2f2f2f;border:1px solid #7a7a7a"></div><div class="t" style="left:719px;top:170px;width:120px;text-align:center;font-size:12.5px;color:#f0ecd8">1.00 X 1.00</div><div class="a" style="left:838px;top:168px;width:37px;height:17px;background:#2f2f2f;border:1px solid #7a7a7a"></div><div class="t" style="left:838px;top:170px;width:37px;text-align:center;font-size:12.5px;color:#f0ecd8">18</div><div class="a" style="left:874px;top:168px;width:50px;height:17px;background:#2f2f2f;border:1px solid #7a7a7a"></div><div class="t" style="left:874px;top:170px;width:50px;text-align:center;font-size:12.5px;color:#f0ecd8">0.07tw</div><svg class="a" style="left:924px;top:169px" width="17" height="15"><rect x="0.5" y="0.5" width="16" height="14" fill="#4aa526" stroke="#2c6e12"/><rect x="1" y="1" width="15" height="7" fill="#5cbc34"/><path d="M6.0 3.5L11.5 7.5L6.0 11.5Z" fill="#f0f0e0"/></svg><div class="a" style="left:719px;top:184px;width:120px;height:17px;background:#2f2f2f;border:1px solid #7a7a7a"></div><div class="t" style="left:719px;top:186px;width:120px;text-align:center;font-size:12.5px;color:#f0ecd8">5.60 X 5.60</div><div class="a" style="left:838px;top:184px;width:37px;height:17px;background:#2f2f2f;border:1px solid #7a7a7a"></div><div class="t" style="left:838px;top:186px;width:37px;text-align:center;font-size:12.5px;color:#f0ecd8">1</div><div class="a" style="left:874px;top:184px;width:50px;height:17px;background:#2f2f2f;border:1px solid #7a7a7a"></div><div class="t" style="left:874px;top:186px;width:50px;text-align:center;font-size:12.5px;color:#f0ecd8">0.66tw</div><svg class="a" style="left:924px;top:185px" width="17" height="15"><rect x="0.5" y="0.5" width="16" height="14" fill="#4aa526" stroke="#2c6e12"/><rect x="1" y="1" width="15" height="7" fill="#5cbc34"/><path d="M6.0 3.5L11.5 7.5L6.0 11.5Z" fill="#f0f0e0"/></svg><div class="t" style="left:684px;top:248px;font-family:'Liberation Serif',serif;font-weight:bold;font-size:19px;color:#fbf8ee">RING SIZE - 6.5 US</div><div class="t" style="left:685px;top:303px;font-family:'Liberation Serif',serif;font-weight:bold;font-size:19px;color:#fbf8ee;letter-spacing:0.35px">GOLD WT - 4.81 GRM</div><div class="a" style="left:687px;top:396px;width:163px;height:21px;background:#c4c4c4;border:2px solid #f4f4f4;box-shadow:inset 1px 1px 0 #777"></div><div class="a" style="left:831px;top:398px;width:16px;height:17px;background:#f0f0f0;border:1px solid #888"></div><svg class="a" style="left:834px;top:403px" width="10" height="6"><path d="M0 0H10L5 6Z" fill="#000"/></svg><div class="t" style="left:691px;top:401px;font-size:11px;color:#111">Diamond&nbsp;&nbsp;&nbsp;&nbsp;(3.52 spg)</div><div class="a" style="left:859px;top:399px;width:77px;height:17px;background:#2e2e2e;border:1px solid #5a5a5a;box-shadow:inset 1px 1px 0 #111"></div><div class="t" style="left:862px;top:401px;font-size:13px;color:#f4f4f4">Set Material</div><svg class="a" style="left:938px;top:400px" width="16" height="15"><rect x="0.5" y="0.5" width="15" height="14" fill="#4aa526" stroke="#2c6e12"/><rect x="1" y="1" width="14" height="7" fill="#5cbc34"/><path d="M5.5 3.5L11.0 7.5L5.5 11.5Z" fill="#f0f0e0"/></svg><div class="a" style="left:674px;top:432px;width:25px;height:25px;background:#5a5a5a"></div><svg class="a" style="left:674px;top:432px" width="25" height="25"><ellipse cx="11.5" cy="17.5" rx="11" ry="4.6" fill="#2060f0" stroke="#80c0ff" stroke-width="0.8"/><path d="M13.5 2.5L4 17M13.5 2.5L21 17M13.5 2.5L11 20M16 9L17 15" stroke="#80c8ff" stroke-width="1" fill="none"/><path d="M0.5 4.5H14L16 1.5" stroke="#b0e8ff" stroke-width="2" fill="none"/></svg><div class="a" style="left:699px;top:432px;width:255px;height:25px;background:linear-gradient(#e6e3dc,#cfcbc2 40%,#bdb9b0)"></div><div class="a" style="left:820px;top:434px;width:1px;height:22px;background:#8a877f"></div><div class="t" style="left:704px;top:434px;font-size:12.5px;font-weight:bold;color:#000">METAL WEIGHTS</div><div class="t" style="left:686px;top:468px;font-size:11.5px;color:#d0d0d0">Library: METAL</div><div class="a" style="left:880px;top:466px;width:37px;height:17px;border:1px solid #888"></div><div class="t" style="left:882px;top:469px;font-size:11.5px;color:#999">GV</div><div class="a" style="left:902px;top:468px;width:13px;height:13px;background:#3cb0b8"></div><div class="a" style="left:907px;top:470px;width:2px;height:9px;background:#111"></div><div class="a" style="left:920px;top:466px;width:40px;height:17px;border:1px solid #888"></div><div class="t" style="left:922px;top:469px;font-size:11.5px;color:#999">User</div><div class="a" style="left:950px;top:468px;width:4px;height:13px;background:#3cb0b8"></div><div class="a" style="left:679px;top:489px;width:275px;height:24px;background:linear-gradient(#fff 0,#fff 40%,#eef0f4 100%)"></div><div class="a" style="left:679px;top:512px;width:275px;height:194px;background:#222"></div><div class="a" style="left:679px;top:529px;width:275px;height:2px;background:#e8e8e8"></div><div class="a" style="left:679px;top:546px;width:275px;height:2px;background:#e8e8e8"></div><div class="a" style="left:679px;top:563px;width:275px;height:2px;background:#e8e8e8"></div><div class="a" style="left:679px;top:580px;width:275px;height:2px;background:#e8e8e8"></div><div class="a" style="left:679px;top:597px;width:275px;height:2px;background:#e8e8e8"></div><div class="a" style="left:679px;top:614px;width:275px;height:2px;background:#e8e8e8"></div><div class="a" style="left:679px;top:631px;width:275px;height:2px;background:#e8e8e8"></div><div class="a" style="left:679px;top:648px;width:275px;height:2px;background:#e8e8e8"></div><div class="a" style="left:679px;top:665px;width:275px;height:2px;background:#e8e8e8"></div><div class="a" style="left:679px;top:682px;width:275px;height:2px;background:#e8e8e8"></div><div class="a" style="left:679px;top:699px;width:275px;height:2px;background:#e8e8e8"></div><div class="a" style="left:830px;top:489px;width:2px;height:217px;background:#f4f4f4"></div><div class="a" style="left:829px;top:491px;width:1px;height:21px;background:#d8d8d8"></div><div class="a" style="left:880px;top:489px;width:2px;height:217px;background:#f4f4f4"></div><div class="a" style="left:879px;top:491px;width:1px;height:21px;background:#d8d8d8"></div><div class="a" style="left:940px;top:489px;width:2px;height:217px;background:#f4f4f4"></div><div class="a" style="left:939px;top:491px;width:1px;height:21px;background:#d8d8d8"></div><div class="t" style="left:686px;top:495px;font-size:12.5px;color:#1a1030">Metal</div><div class="t" style="left:836px;top:495px;font-size:12.5px;color:#111">Grams</div><div class="t" style="left:886px;top:495px;font-size:12.5px;color:#111">DWT</div><div class="a" style="left:827px;top:712px;width:130px;height:17px;border:1px solid #888"></div><div class="t" style="left:829px;top:715px;font-size:10.8px;color:#b8b8b8">Use Object Materials</div><div class="a" style="left:942px;top:713px;width:12px;height:15px;background:#666"></div><div class="t" style="left:945px;top:715px;font-size:11px;color:#ccc">O</div><div class="t" style="left:696px;top:744px;font-size:11.8px;font-weight:bold;color:#f0e020">Highlight the item you want to find the weight</div><div class="a" style="left:954px;top:0;width:320px;height:752px;background:#fff"></div></body></html>
